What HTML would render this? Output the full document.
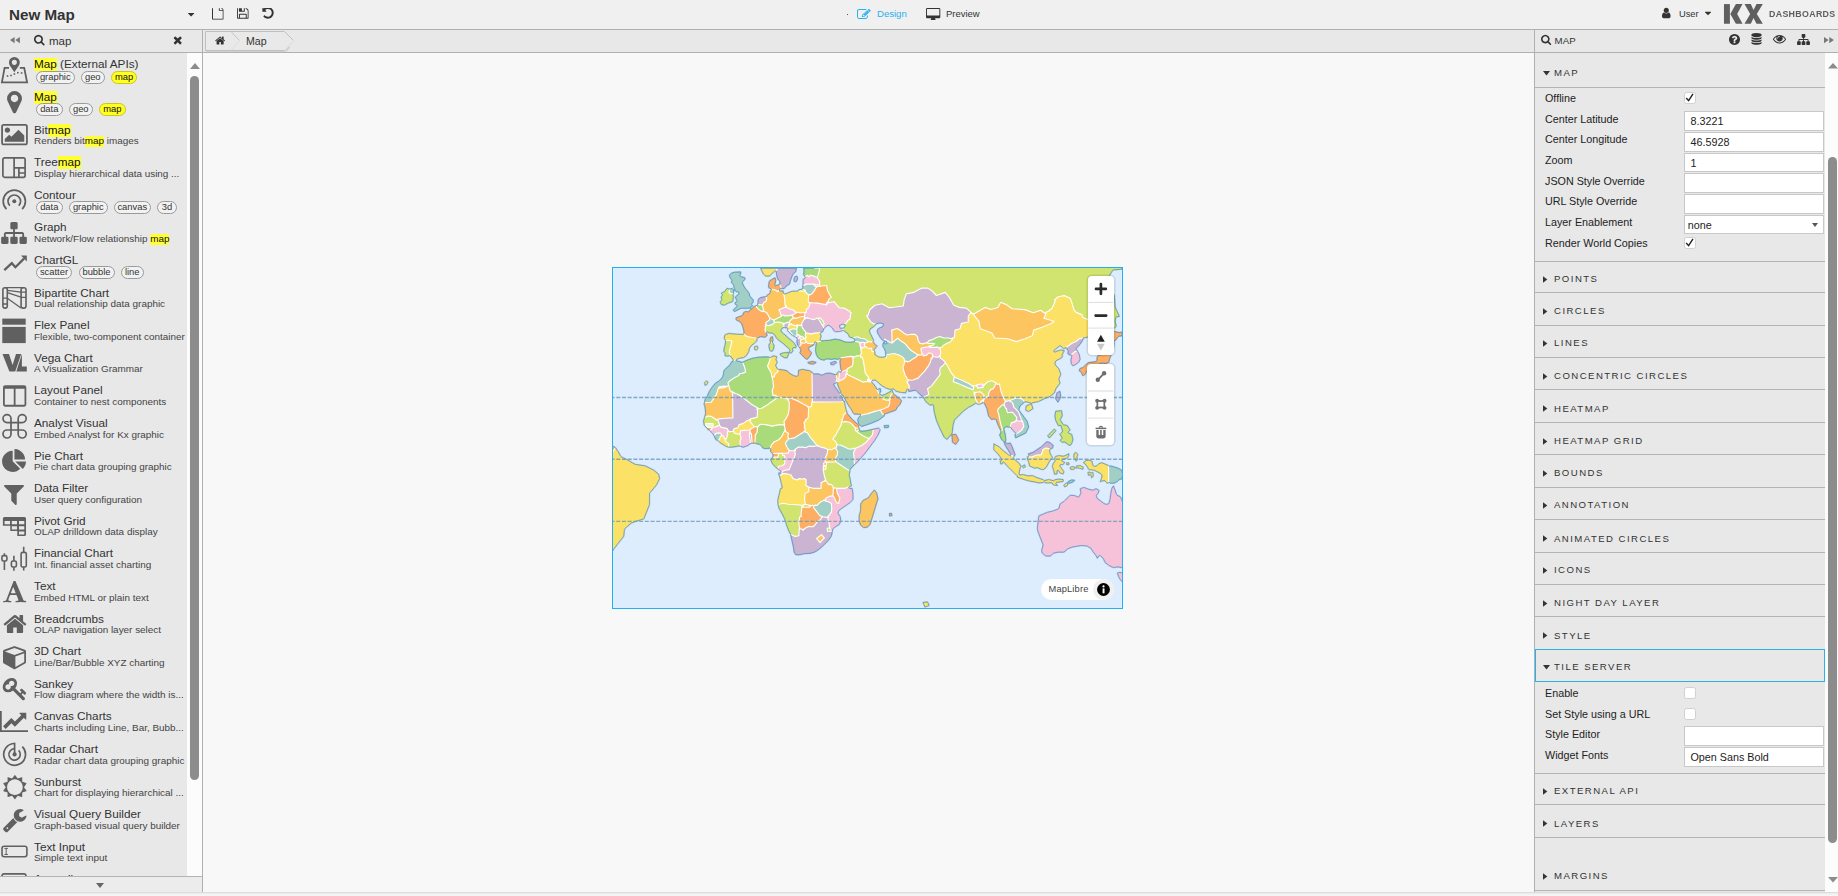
<!DOCTYPE html><html><head><meta charset="utf-8"><title>New Map</title><style>html,body{margin:0;padding:0;background:#f5f5f5;overflow:hidden}
#app{position:relative;width:1838px;height:896px;overflow:hidden;background:#f8f8f8;font-family:"Liberation Sans",Arial,sans-serif;color:#333}
.t{position:absolute;white-space:nowrap}
.ic{position:absolute;display:block;overflow:visible}
#topbar{position:absolute;left:0;top:0;width:1838px;height:29px;background:#f0f0f0;border-bottom:1px solid #b0b0b0}
#bar2{position:absolute;left:0;top:30px;width:1838px;height:22px;background:#e8e8e8;border-bottom:1px solid #b0b0b0}
#side{position:absolute;left:0;top:53px;width:187px;height:823px;background:#e8e8e8;overflow:hidden}
#sidesb{position:absolute;left:187px;top:53px;width:15px;height:823px;background:#fcfcfc}
#sideborder{position:absolute;left:202px;top:30px;width:1px;height:862px;background:#b0b0b0}
#sbthumb{position:absolute;left:190px;top:76px;width:9px;height:704px;border-radius:4.5px;background:#8c8c8c}
#sidefoot{position:absolute;left:0;top:876px;width:202px;height:15px;background:#ececec;border-top:1px solid #b4b4b4}
.row{position:absolute;left:0;width:187px;height:33px}
.ttl{position:absolute;left:34px;font-size:11.75px;line-height:13px;color:#333;white-space:nowrap}
.sub{position:absolute;left:34px;font-size:9.92px;line-height:12px;color:#444;white-space:nowrap;width:153px;overflow:hidden;text-overflow:ellipsis}
.hl{background:linear-gradient(#ffff33,#ffff33) no-repeat 0 1px;color:#111;padding-bottom:1px}
.tag{position:absolute;height:11px;line-height:9.5px;border:1px solid #9a9a9a;border-radius:7px;background:#f2f2f2;font-size:9.4px;color:#333;text-align:center;white-space:nowrap}
.tag.y{background:#ffff22;border-color:#c8c820;color:#111}
#rp{position:absolute;left:1535px;top:53px;width:289.7px;height:839px;background:#e8e8e8;overflow:hidden}
#rpborder{position:absolute;left:1534px;top:30px;width:1px;height:862px;background:#b0b0b0}
#rptrack{position:absolute;left:1824.7px;top:53px;width:13.3px;height:839px;background:#fcfcfc}
#rpthumb{position:absolute;left:1828.1px;top:157px;width:9px;height:686px;border-radius:4.5px;background:#8c8c8c}
#rpfoot{position:absolute;left:0;top:892px;width:1838px;height:4px;background:linear-gradient(#d4d4d4,#ececec 35%,#f4f4f4 70%,#f5f5f5)}
.sh{position:absolute;left:0;width:290px;border-bottom:1px solid #b4b4b4;height:0}
.st{position:absolute;left:19px;font-size:9.6px;letter-spacing:1.45px;line-height:12px;color:#333;white-space:nowrap}
.lb{position:absolute;left:10px;font-size:10.75px;line-height:13px;color:#222;white-space:nowrap}
.inp{position:absolute;left:149px;width:138px;height:17.5px;border:1px solid #c8c8c8;background:#fff;font-size:10.75px;line-height:19px;color:#222;text-indent:5.5px;white-space:nowrap}
.cb{position:absolute;left:148.9px;width:10px;height:10px;border:1px solid #d0d0d0;border-radius:2.5px;background:#fff}
.mctl{position:absolute;background:#fff;border-radius:4px;box-shadow:0 0 0 1.6px rgba(0,0,0,.1)}
</style></head><body><div id="app">
<div id="topbar"></div>
<div class="t" style="left:9px;top:6px;font-size:15.2px;font-weight:bold;color:#333;line-height:18px">New Map</div>
<svg class="ic" style="left:187.8px;top:9.1px;" width="6.23" height="10.9" viewBox="0 -1536 1024 1792"><path fill="#333" transform="scale(1,-1)" d="M1024 832q0 -26 -19 -45l-448 -448q-19 -19 -45 -19t-45 19l-448 448q-19 19 -19 45t19 45t45 19h896q26 0 45 -19t19 -45z"/></svg>
<svg class="ic" style="left:212px;top:6.2px;clip-path:inset(2px 0 0 0)" width="11.70" height="13.65" viewBox="0 -1536 1536 1792"><path fill="#333" transform="scale(1,-1)" d="M1468 1156q28 -28 48 -76t20 -88v-1152q0 -40 -28 -68t-68 -28h-1344q-40 0 -68 28t-28 68v1600q0 40 28 68t68 28h896q40 0 88 -20t76 -48zM1024 1400v-376h376q-10 29 -22 41l-313 313q-12 12 -41 22zM1408 -128v1024h-416q-40 0 -68 28t-28 68v416h-768v-1536h1280z
"/></svg>
<svg class="ic" style="left:237.1px;top:6.2px;clip-path:inset(2px 0 0 0)" width="11.70" height="13.65" viewBox="0 -1536 1536 1792"><path fill="#333" transform="scale(1,-1)" d="M384 0h768v384h-768v-384zM1280 0h128v896q0 14 -10 38.5t-20 34.5l-281 281q-10 10 -34 20t-39 10v-416q0 -40 -28 -68t-68 -28h-576q-40 0 -68 28t-28 68v416h-128v-1280h128v416q0 40 28 68t68 28h832q40 0 68 -28t28 -68v-416zM896 928v320q0 13 -9.5 22.5t-22.5 9.5
h-192q-13 0 -22.5 -9.5t-9.5 -22.5v-320q0 -13 9.5 -22.5t22.5 -9.5h192q13 0 22.5 9.5t9.5 22.5zM1536 896v-928q0 -40 -28 -68t-68 -28h-1344q-40 0 -68 28t-28 68v1344q0 40 28 68t68 28h928q40 0 88 -20t76 -48l280 -280q28 -28 48 -76t20 -88z"/></svg>
<svg class="ic" style="left:262.4px;top:6.2px;clip-path:inset(1.7px 0 0 0)" width="11.70" height="13.65" viewBox="0 -1536 1536 1792"><path fill="#333" transform="scale(1,-1)" d="M1536 640q0 -156 -61 -298t-164 -245t-245 -164t-298 -61q-172 0 -327 72.5t-264 204.5q-7 10 -6.5 22.5t8.5 20.5l137 138q10 9 25 9q16 -2 23 -12q73 -95 179 -147t225 -52q104 0 198.5 40.5t163.5 109.5t109.5 163.5t40.5 198.5t-40.5 198.5t-109.5 163.5
t-163.5 109.5t-198.5 40.5q-98 0 -188 -35.5t-160 -101.5l137 -138q31 -30 14 -69q-17 -40 -59 -40h-448q-26 0 -45 19t-19 45v448q0 42 40 59q39 17 69 -14l130 -129q107 101 244.5 156.5t284.5 55.5q156 0 298 -61t245 -164t164 -245t61 -298z"/></svg>
<div style="position:absolute;left:846.8px;top:14.2px;width:1.2px;height:1.2px;background:#555"></div>
<svg class="ic" style="left:857px;top:9px" width="13.70" height="9.90" viewBox="0.0 -1408.0 1784.0 1408.0" preserveAspectRatio="none"><path fill="#29b0ed" transform="scale(1,-1)" d="M888 352l116 116l-152 152l-116 -116v-56h96v-96h56zM1328 1072q-16 16 -33 -1l-350 -350q-17 -17 -1 -33t33 1l350 350q17 17 1 33zM1408 478v-190q0 -119 -84.5 -203.5t-203.5 -84.5h-832q-119 0 -203.5 84.5t-84.5 203.5v832q0 119 84.5 203.5t203.5 84.5h832
q63 0 117 -25q15 -7 18 -23q3 -17 -9 -29l-49 -49q-14 -14 -32 -8q-23 6 -45 6h-832q-66 0 -113 -47t-47 -113v-832q0 -66 47 -113t113 -47h832q66 0 113 47t47 113v126q0 13 9 22l64 64q15 15 35 7t20 -29zM1312 1216l288 -288l-672 -672h-288v288zM1756 1084l-92 -92
l-288 288l92 92q28 28 68 28t68 -28l152 -152q28 -28 28 -68t-28 -68z"/></svg>
<div class="t" style="left:877px;top:7.2px;font-size:9.55px;color:#29b0ed;line-height:13px">Design</div>
<svg class="ic" style="left:925.7px;top:7.8px" width="14.30" height="12.10" viewBox="0.0 -1536.0 1920.0 1664.0" preserveAspectRatio="none"><path fill="#333" transform="scale(1,-1)" d="M1792 544v832q0 13 -9.5 22.5t-22.5 9.5h-1600q-13 0 -22.5 -9.5t-9.5 -22.5v-832q0 -13 9.5 -22.5t22.5 -9.5h1600q13 0 22.5 9.5t9.5 22.5zM1920 1376v-1088q0 -66 -47 -113t-113 -47h-544q0 -37 16 -77.5t32 -71t16 -43.5q0 -26 -19 -45t-45 -19h-512q-26 0 -45 19
t-19 45q0 14 16 44t32 70t16 78h-544q-66 0 -113 47t-47 113v1088q0 66 47 113t113 47h1600q66 0 113 -47t47 -113z"/></svg>
<div class="t" style="left:946px;top:7.2px;font-size:9.45px;color:#333;line-height:13px">Preview</div>
<svg class="ic" style="left:1662px;top:6.5px;" width="8.57" height="12" viewBox="0 -1536 1280 1792"><path fill="#333" transform="scale(1,-1)" d="M1280 137q0 -109 -62.5 -187t-150.5 -78h-854q-88 0 -150.5 78t-62.5 187q0 85 8.5 160.5t31.5 152t58.5 131t94 89t134.5 34.5q131 -128 313 -128t313 128q76 0 134.5 -34.5t94 -89t58.5 -131t31.5 -152t8.5 -160.5zM1024 1024q0 -159 -112.5 -271.5t-271.5 -112.5
t-271.5 112.5t-112.5 271.5t112.5 271.5t271.5 112.5t271.5 -112.5t112.5 -271.5z"/></svg>
<div class="t" style="left:1679px;top:7.6px;font-size:9.3px;color:#333;line-height:13px">User</div>
<svg class="ic" style="left:1704.8px;top:8.2px;" width="6.00" height="10.5" viewBox="0 -1536 1024 1792"><path fill="#333" transform="scale(1,-1)" d="M1024 832q0 -26 -19 -45l-448 -448q-19 -19 -45 -19t-45 19l-448 448q-19 19 -19 45t19 45t45 19h896q26 0 45 -19t19 -45z"/></svg>
<svg class="ic" style="left:0;top:0" width="1838" height="30" viewBox="0 0 1838 30"><g fill="#5f5f5f"><path d="M1723.96 4.1H1729.9V23.75H1723.96z"/><path d="M1735.9 4.1H1742.5L1737.2 13.9 1742.5 23.75H1735.9L1730.3 13.9z"/><path d="M1744.5 4.1H1750.8L1753.5 9.95 1756.5 4.1H1762.8L1756.8 13.9 1762.8 23.75H1756.5L1753.5 17.9 1750.8 23.75H1744.5L1750.2 13.9z"/></g></svg>
<div class="t" style="left:1768.6px;top:7.7px;font-size:8.4px;font-weight:bold;color:#5f5f5f;letter-spacing:0.3px;line-height:12px;transform:scaleX(1.055);transform-origin:0 0">DASHBOARDS</div>
<div id="bar2"></div>
<svg class="ic" style="left:10px;top:36.8px" width="10" height="6.2" viewBox="0 0 10 6.2"><path d="M4.6 0V6.2L0 3.1zM9.9 0V6.2L5.3 3.1z" fill="#777"/></svg>
<svg class="ic" style="left:33.9px;top:33.6px;" width="10.59" height="11.4" viewBox="0 -1536 1664 1792"><path fill="#333" transform="scale(1,-1)" d="M1152 704q0 185 -131.5 316.5t-316.5 131.5t-316.5 -131.5t-131.5 -316.5t131.5 -316.5t316.5 -131.5t316.5 131.5t131.5 316.5zM1664 -128q0 -52 -38 -90t-90 -38q-54 0 -90 38l-343 342q-179 -124 -399 -124q-143 0 -273.5 55.5t-225 150t-150 225t-55.5 273.5
t55.5 273.5t150 225t225 150t273.5 55.5t273.5 -55.5t225 -150t150 -225t55.5 -273.5q0 -220 -124 -399l343 -343q37 -37 37 -90z"/></svg>
<div class="t" style="left:49px;top:33.5px;font-size:11.5px;color:#333;line-height:14px">map</div>
<svg class="ic" style="left:173px;top:33.5px;" width="9.43" height="12" viewBox="0 -1536 1408 1792"><path fill="#333" transform="scale(1,-1)" d="M1298 214q0 -40 -28 -68l-136 -136q-28 -28 -68 -28t-68 28l-294 294l-294 -294q-28 -28 -68 -28t-68 28l-136 136q-28 28 -28 68t28 68l294 294l-294 294q-28 28 -28 68t28 68l136 136q28 28 68 28t68 -28l294 -294l294 294q28 28 68 28t68 -28l136 -136q28 -28 28 -68
t-28 -68l-294 -294l294 -294q28 -28 28 -68z"/></svg>
<svg class="ic" style="left:204px;top:30px" width="96" height="23" viewBox="0 0 96 23"><path d="M1.5 20.9H80.5L85 16" fill="none" stroke="#bcbcbc" stroke-width="1.6" opacity=".55" transform="translate(0.6,0.9)"/><path d="M1.5 1.5H80.5L89.5 10.5 80.5 20.5H1.5z" fill="#e9e9e9" stroke="none"/><path d="M80.5 20.5H1.5V1.5H80.5L89.5 10.5" fill="none" stroke="#bfbfbf" stroke-width="1"/><path d="M89.5 10.5L80.5 20.5" fill="none" stroke="#dcdcdc" stroke-width="1"/><path d="M27 1.5l8.5 9" fill="none" stroke="#c6c6c6" stroke-width="1"/><path d="M35.5 10.5l-8.5 10" fill="none" stroke="#dedede" stroke-width="1"/></svg>
<svg class="ic" style="left:215px;top:34.5px;" width="10.21" height="11" viewBox="0 -1536 1664 1792"><path fill="#333" transform="scale(1,-1)" d="M1408 544v-480q0 -26 -19 -45t-45 -19h-384v384h-256v-384h-384q-26 0 -45 19t-19 45v480q0 1 0.5 3t0.5 3l575 474l575 -474q1 -2 1 -6zM1631 613l-62 -74q-8 -9 -21 -11h-3q-13 0 -21 7l-692 577l-692 -577q-12 -8 -24 -7q-13 2 -21 11l-62 74q-8 10 -7 23.5t11 21.5
l719 599q32 26 76 26t76 -26l244 -204v195q0 14 9 23t23 9h192q14 0 23 -9t9 -23v-408l219 -182q10 -8 11 -21.5t-7 -23.5z"/></svg>
<div class="t" style="left:246px;top:33.8px;font-size:10.6px;color:#333;line-height:14px">Map</div>
<div id="side"></div><div id="sidesb"></div><div id="sideborder"></div>
<div id="sbthumb"></div>
<svg class="ic" style="left:189.5px;top:62.5px" width="10" height="6" viewBox="0 0 10 6"><path d="M0 6L5 0l5 6z" fill="#8c8c8c"/></svg>
<div id="sidefoot"></div>
<svg class="ic" style="left:96px;top:883px" width="8" height="5" viewBox="0 0 8 5"><path d="M0 0h8L4 5z" fill="#666"/></svg>
<div id="sidelist" style="position:absolute;left:0;top:53px;width:187px;height:823px;overflow:hidden">
<div class="ttl" style="top:4.4px"><span class="hl">Map</span> (External APIs)</div>
<div class="tag" style="left:36px;top:17.7px;width:36.5px">graphic</div>
<div class="tag" style="left:81px;top:17.7px;width:21.5px">geo</div>
<div class="tag y" style="left:111px;top:17.7px;width:24px">map</div>
<div class="ttl" style="top:37.0px"><span class="hl">Map</span></div>
<div class="tag" style="left:36px;top:50.3px;width:24.5px">data</div>
<div class="tag" style="left:69px;top:50.3px;width:21.5px">geo</div>
<div class="tag y" style="left:99px;top:50.3px;width:24.5px">map</div>
<div class="ttl" style="top:69.6px">Bit<span class="hl">map</span></div>
<div class="sub" style="top:82.1px">Renders bit<span class="hl">map</span> images</div>
<div class="ttl" style="top:102.2px">Tree<span class="hl">map</span></div>
<div class="sub" style="top:114.7px">Display hierarchical data using ...</div>
<div class="ttl" style="top:134.8px">Contour</div>
<div class="tag" style="left:36px;top:148.1px;width:24.5px">data</div>
<div class="tag" style="left:69px;top:148.1px;width:36.5px">graphic</div>
<div class="tag" style="left:114px;top:148.1px;width:34.5px">canvas</div>
<div class="tag" style="left:157px;top:148.1px;width:18px">3d</div>
<div class="ttl" style="top:167.4px">Graph</div>
<div class="sub" style="top:179.9px">Network/Flow relationship <span class="hl">map</span></div>
<div class="ttl" style="top:200.0px">ChartGL</div>
<div class="tag" style="left:36px;top:213.3px;width:34px">scatter</div>
<div class="tag" style="left:78.5px;top:213.3px;width:34px">bubble</div>
<div class="tag" style="left:121px;top:213.3px;width:20.5px">line</div>
<div class="ttl" style="top:232.6px">Bipartite Chart</div>
<div class="sub" style="top:245.1px">Dual relationship data graphic</div>
<div class="ttl" style="top:265.2px">Flex Panel</div>
<div class="sub" style="top:277.7px">Flexible, two-component container</div>
<div class="ttl" style="top:297.8px">Vega Chart</div>
<div class="sub" style="top:310.3px">A Visualization Grammar</div>
<div class="ttl" style="top:330.4px">Layout Panel</div>
<div class="sub" style="top:342.9px">Container to nest components</div>
<div class="ttl" style="top:363.0px">Analyst Visual</div>
<div class="sub" style="top:375.5px">Embed Analyst for Kx graphic</div>
<div class="ttl" style="top:395.6px">Pie Chart</div>
<div class="sub" style="top:408.1px">Pie chart data grouping graphic</div>
<div class="ttl" style="top:428.2px">Data Filter</div>
<div class="sub" style="top:440.7px">User query configuration</div>
<div class="ttl" style="top:460.8px">Pivot Grid</div>
<div class="sub" style="top:473.3px">OLAP drilldown data display</div>
<div class="ttl" style="top:493.4px">Financial Chart</div>
<div class="sub" style="top:505.9px">Int. financial asset charting</div>
<div class="ttl" style="top:526.0px">Text</div>
<div class="sub" style="top:538.5px">Embed HTML or plain text</div>
<div class="ttl" style="top:558.6px">Breadcrumbs</div>
<div class="sub" style="top:571.1px">OLAP navigation layer select</div>
<div class="ttl" style="top:591.2px">3D Chart</div>
<div class="sub" style="top:603.7px">Line/Bar/Bubble XYZ charting</div>
<div class="ttl" style="top:623.8px">Sankey</div>
<div class="sub" style="top:636.3px">Flow diagram where the width is...</div>
<div class="ttl" style="top:656.4px">Canvas Charts</div>
<div class="sub" style="top:668.9px">Charts including Line, Bar, Bubb...</div>
<div class="ttl" style="top:689.0px">Radar Chart</div>
<div class="sub" style="top:701.5px">Radar chart data grouping graphic</div>
<div class="ttl" style="top:721.6px">Sunburst</div>
<div class="sub" style="top:734.1px">Chart for displaying hierarchical ...</div>
<div class="ttl" style="top:754.2px">Visual Query Builder</div>
<div class="sub" style="top:766.7px">Graph-based visual query builder</div>
<div class="ttl" style="top:786.8px">Text Input</div>
<div class="sub" style="top:799.3px">Simple text input</div>
<div class="ttl" style="top:819.4px">Accordion</div>
<div class="sub" style="top:831.9px">Collapsible content panels</div>
<svg class="ic" style="left:0;top:-53px" width="187" height="896" viewBox="0 0 187 896"><g fill="none" stroke="#606060" stroke-width="1.7" stroke-linejoin="round"><path d="M9 67.8H4.6L1.9 82.4H27.1L24.2 67.8H19.8" stroke-width="1.8" stroke-linejoin="miter"/></g><path fill="#606060" fill-rule="evenodd" d="M14.35 57a5.4 5.4 0 0 1 5.4 5.4c0 1.3-.4 2.2-1 3.3l-4.4 6.6-4.4-6.6c-.6-1.1-1-2-1-3.3a5.4 5.4 0 0 1 5.4-5.4zm0 2.8a2.55 2.55 0 1 0 0 5.1 2.55 2.55 0 0 0 0-5.1z"/><rect x="6.7" y="75.2" width="1.6" height="1.6" fill="#606060"/><rect x="10.2" y="74.7" width="1.6" height="1.6" fill="#606060"/><rect x="13.6" y="73.2" width="1.6" height="1.6" fill="#606060"/><rect x="17.0" y="71.9" width="1.6" height="1.6" fill="#606060"/><rect x="20.8" y="72.2" width="1.6" height="1.6" fill="#606060"/><g fill="none" stroke="#606060" stroke-width="1.7"><rect x="2.9" y="157.9" width="22.2" height="19.4" rx="1.8"/><path d="M14.1 158V177.3M14.1 167.9H25M18.9 168V177.3M19 173H25"/></g><g fill="none" stroke="#606060" stroke-width="1.7"><path d="M6.45 209.15A11.1 11.1 0 1 1 22.15 209.15"/><path d="M9.85 205.75A6.3 6.3 0 1 1 18.75 205.75"/></g><circle cx="14.3" cy="201.3" r="2" fill="#606060"/><path d="M4.3 270.1L11.8 263.2 15.4 267.2 24 258.6" fill="none" stroke="#606060" stroke-width="2.3"/><path d="M21 255.5H26.8V261.6z" fill="#606060"/><g fill="none" stroke="#606060" stroke-width="1.6"><rect x="2.9" y="287.7" width="4.4" height="20.4" rx="2"/><rect x="21.1" y="287.7" width="4.9" height="20.4" rx="2"/><path d="M5 287.7H24M3 298.2H7.3M3 304H7.3M21 292.2H26M21 297.4H26M7.3 290.3L21 292.2M7.3 292.6L21 297.2M7.3 298.2L21 308" stroke-width="1.3"/></g><rect x="2.3" y="318.6" width="23.4" height="6.1" fill="#606060"/><rect x="2.3" y="326.9" width="23.4" height="16.2" fill="#606060"/><path fill="#606060" d="M2.5 354H9L12.6 365 16 354H21.2L15.2 371.5H9.4z"/><path fill="#606060" d="M21.9 354V366.5H26.8V371.5H16.3z"/><path fill="none" stroke="#606060" stroke-width="1.7" d="M11 422.6H7A4 4 0 1 1 11 418.6V434A4 4 0 1 1 7 430H22.2A4 4 0 1 1 18.2 434V418.6A4 4 0 1 1 22.2 422.6H11"/><path fill="#606060" fill-rule="evenodd" d="M4.4 517H24.5Q26 517 26 518.5V534.5Q26 536 24.5 536H17.3V531H10.3V525.8H2.9V518.5Q2.9 517 4.4 517zM4.6 521V524.3H10V521zM11.8 521V524.3H17V521zM19 521V524.3H24.3V521zM11.8 526.3V529.5H17V526.3zM19 526.3V529.5H24.3V526.3zM19 531.5V534.5H24.3V531.5z"/><g fill="none" stroke="#606060" stroke-width="1.6"><path d="M4.4 553.2V555.6M4.4 561V570M13.9 555.7V561M13.9 567V570.7M23.7 546.8V552.4M23.7 567V570.4"/><rect x="1.9" y="555.6" width="5" height="5.4" rx="1.6"/><rect x="11.4" y="561" width="5" height="6" rx="1.6"/><rect x="21.1" y="552.4" width="5.2" height="14.6" rx="1.6"/></g><g fill="none" stroke="#606060" stroke-width="1.7"><path d="M14.60 743.50A10.9 10.9 0 1 0 22.31 746.69"/><path d="M14.60 748.70A5.7 5.7 0 1 0 18.63 750.37"/><path d="M14.6 754.4V742.7"/></g><circle cx="14.6" cy="754.4" r="2.1" fill="#606060"/><rect x="2" y="846.2" width="24.9" height="10.5" rx="2.2" fill="none" stroke="#606060" stroke-width="1.6"/><path d="M4.4 848.4H7.9M4.4 854.5H7.9M6.15 848.4V854.5" stroke="#606060" stroke-width="1" fill="none"/><rect x="2" y="873.9" width="24" height="12" rx="2.2" fill="none" stroke="#606060" stroke-width="1.6"/></svg>
<svg class="ic" style="left:7px;top:38px" width="15.00" height="22.30" viewBox="0.0 -1408.0 1024.0 1536.0" preserveAspectRatio="xMidYMid meet"><path fill="#606060" transform="scale(1,-1)" d="M768 896q0 106 -75 181t-181 75t-181 -75t-75 -181t75 -181t181 -75t181 75t75 181zM1024 896q0 -109 -33 -179l-364 -774q-16 -33 -47.5 -52t-67.5 -19t-67.5 19t-46.5 52l-365 774q-33 70 -33 179q0 212 150 362t362 150t362 -150t150 -362z"/></svg>
<svg class="ic" style="left:1px;top:71px" width="27.00" height="21.30" viewBox="0.0 -1408.0 1920.0 1536.0" preserveAspectRatio="xMidYMid meet"><path fill="#606060" transform="scale(1,-1)" d="M640 960q0 -80 -56 -136t-136 -56t-136 56t-56 136t56 136t136 56t136 -56t56 -136zM1664 576v-448h-1408v192l320 320l160 -160l512 512zM1760 1280h-1600q-13 0 -22.5 -9.5t-9.5 -22.5v-1216q0 -13 9.5 -22.5t22.5 -9.5h1600q13 0 22.5 9.5t9.5 22.5v1216
q0 13 -9.5 22.5t-22.5 9.5zM1920 1248v-1216q0 -66 -47 -113t-113 -47h-1600q-66 0 -113 47t-47 113v1216q0 66 47 113t113 47h1600q66 0 113 -47t47 -113z"/></svg>
<svg class="ic" style="left:0px;top:169.3px" width="28.00" height="22.00" viewBox="0.0 -1408.0 1792.0 1536.0" preserveAspectRatio="xMidYMid meet"><path fill="#606060" transform="scale(1,-1)" d="M1792 288v-320q0 -40 -28 -68t-68 -28h-320q-40 0 -68 28t-28 68v320q0 40 28 68t68 28h96v192h-512v-192h96q40 0 68 -28t28 -68v-320q0 -40 -28 -68t-68 -28h-320q-40 0 -68 28t-28 68v320q0 40 28 68t68 28h96v192h-512v-192h96q40 0 68 -28t28 -68v-320
q0 -40 -28 -68t-68 -28h-320q-40 0 -68 28t-28 68v320q0 40 28 68t68 28h96v192q0 52 38 90t90 38h512v192h-96q-40 0 -68 28t-28 68v320q0 40 28 68t68 28h320q40 0 68 -28t28 -68v-320q0 -40 -28 -68t-68 -28h-96v-192h512q52 0 90 -38t38 -90v-192h96q40 0 68 -28t28 -68
z"/></svg>
<svg class="ic" style="left:3px;top:332px" width="23.30" height="21.80" viewBox="0.0 -1408.0 1664.0 1536.0" preserveAspectRatio="xMidYMid meet"><path fill="#606060" transform="scale(1,-1)" d="M160 0h608v1152h-640v-1120q0 -13 9.5 -22.5t22.5 -9.5zM1536 32v1120h-640v-1152h608q13 0 22.5 9.5t9.5 22.5zM1664 1248v-1216q0 -66 -47 -113t-113 -47h-1344q-66 0 -113 47t-47 113v1216q0 66 47 113t113 47h1344q66 0 113 -47t47 -113z"/></svg>
<svg class="ic" style="left:2px;top:396px" width="24.00" height="23.00" viewBox="0.0 -1536.0 1728.0 1664.0" preserveAspectRatio="xMidYMid meet"><path fill="#606060" transform="scale(1,-1)" d="M768 646l546 -546q-106 -108 -247.5 -168t-298.5 -60q-209 0 -385.5 103t-279.5 279.5t-103 385.5t103 385.5t279.5 279.5t385.5 103v-762zM955 640h773q0 -157 -60 -298.5t-168 -247.5zM1664 768h-768v768q209 0 385.5 -103t279.5 -279.5t103 -385.5z"/></svg>
<svg class="ic" style="left:4px;top:432.3px" width="20.00" height="20.00" viewBox="-1.0208333333333357 -1280.0 1410.0416666666665 1408.0" preserveAspectRatio="xMidYMid meet"><path fill="#606060" transform="scale(1,-1)" d="M1403 1241q17 -41 -14 -70l-493 -493v-742q0 -42 -39 -59q-13 -5 -25 -5q-27 0 -45 19l-256 256q-19 19 -19 45v486l-493 493q-31 29 -14 70q17 39 59 39h1280q42 0 59 -39z"/></svg>
<svg class="ic" style="left:3px;top:527.5px" width="23.30" height="21.30" viewBox="0.0 -1408.0 1664.0 1536.0" preserveAspectRatio="xMidYMid meet"><path fill="#606060" transform="scale(1,-1)" d="M725 977l-170 -450q33 0 136.5 -2t160.5 -2q19 0 57 2q-87 253 -184 452zM0 -128l2 79q23 7 56 12.5t57 10.5t49.5 14.5t44.5 29t31 50.5l237 616l280 724h75h53q8 -14 11 -21l205 -480q33 -78 106 -257.5t114 -274.5q15 -34 58 -144.5t72 -168.5q20 -45 35 -57
q19 -15 88 -29.5t84 -20.5q6 -38 6 -57q0 -5 -0.5 -13.5t-0.5 -12.5q-63 0 -190 8t-191 8q-76 0 -215 -7t-178 -8q0 43 4 78l131 28q1 0 12.5 2.5t15.5 3.5t14.5 4.5t15 6.5t11 8t9 11t2.5 14q0 16 -31 96.5t-72 177.5t-42 100l-450 2q-26 -58 -76.5 -195.5t-50.5 -162.5
q0 -22 14 -37.5t43.5 -24.5t48.5 -13.5t57 -8.5t41 -4q1 -19 1 -58q0 -9 -2 -27q-58 0 -174.5 10t-174.5 10q-8 0 -26.5 -4t-21.5 -4q-80 -14 -188 -14z"/></svg>
<svg class="ic" style="left:2.5px;top:561.8px" width="24.00" height="18.00" viewBox="25.88888888888889 -1283.0 1612.2222222222222 1283.0" preserveAspectRatio="xMidYMid meet"><path fill="#606060" transform="scale(1,-1)" d="M1408 544v-480q0 -26 -19 -45t-45 -19h-384v384h-256v-384h-384q-26 0 -45 19t-19 45v480q0 1 0.5 3t0.5 3l575 474l575 -474q1 -2 1 -6zM1631 613l-62 -74q-8 -9 -21 -11h-3q-13 0 -21 7l-692 577l-692 -577q-12 -8 -24 -7q-13 2 -21 11l-62 74q-8 10 -7 23.5t11 21.5
l719 599q32 26 76 26t76 -26l244 -204v195q0 14 9 23t23 9h192q14 0 23 -9t9 -23v-408l219 -182q10 -8 11 -21.5t-7 -23.5z"/></svg>
<svg class="ic" style="left:3px;top:593px" width="23.00" height="23.30" viewBox="0.0 -1408.0 1664.0 1664.0" preserveAspectRatio="xMidYMid meet"><path fill="#606060" transform="scale(1,-1)" d="M896 -93l640 349v636l-640 -233v-752zM832 772l698 254l-698 254l-698 -254zM1664 1024v-768q0 -35 -18 -65t-49 -47l-704 -384q-28 -16 -61 -16t-61 16l-704 384q-31 17 -49 47t-18 65v768q0 40 23 73t61 47l704 256q22 8 44 8t44 -8l704 -256q38 -14 61 -47t23 -73z
"/></svg>
<svg class="ic" style="left:1.5px;top:625px" width="25.00" height="22.30" viewBox="0.0 -1408.0 1683.0 1592.0" preserveAspectRatio="xMidYMid meet"><path fill="#606060" transform="scale(1,-1)" d="M832 1024q0 80 -56 136t-136 56t-136 -56t-56 -136q0 -42 19 -83q-41 19 -83 19q-80 0 -136 -56t-56 -136t56 -136t136 -56t136 56t56 136q0 42 -19 83q41 -19 83 -19q80 0 136 56t56 136zM1683 320q0 -17 -49 -66t-66 -49q-9 0 -28.5 16t-36.5 33t-38.5 40t-24.5 26
l-96 -96l220 -220q28 -28 28 -68q0 -42 -39 -81t-81 -39q-40 0 -68 28l-671 671q-176 -131 -365 -131q-163 0 -265.5 102.5t-102.5 265.5q0 160 95 313t248 248t313 95q163 0 265.5 -102.5t102.5 -265.5q0 -189 -131 -365l355 -355l96 96q-3 3 -26 24.5t-40 38.5t-33 36.5
t-16 28.5q0 17 49 66t66 49q13 0 23 -10q6 -6 46 -44.5t82 -79.5t86.5 -86t73 -78t28.5 -41z"/></svg>
<svg class="ic" style="left:0px;top:658.3px" width="28.00" height="21.00" viewBox="0.0 -1408.0 2048.0 1536.0" preserveAspectRatio="xMidYMid meet"><path fill="#606060" transform="scale(1,-1)" d="M2048 0v-128h-2048v1536h128v-1408h1920zM1920 1248v-435q0 -21 -19.5 -29.5t-35.5 7.5l-121 121l-633 -633q-10 -10 -23 -10t-23 10l-233 233l-416 -416l-192 192l585 585q10 10 23 10t23 -10l233 -233l464 464l-121 121q-16 16 -7.5 35.5t29.5 19.5h435q14 0 23 -9
t9 -23z"/></svg>
<svg class="ic" style="left:2.6px;top:722px" width="23.80" height="24.30" viewBox="42.214285714285715 -1535.0 1707.5714285714284 1791.0" preserveAspectRatio="xMidYMid meet"><path fill="#606060" transform="scale(1,-1)" d="M1472 640q0 117 -45.5 223.5t-123 184t-184 123t-223.5 45.5t-223.5 -45.5t-184 -123t-123 -184t-45.5 -223.5t45.5 -223.5t123 -184t184 -123t223.5 -45.5t223.5 45.5t184 123t123 184t45.5 223.5zM1748 363q-4 -15 -20 -20l-292 -96v-306q0 -16 -13 -26q-15 -10 -29 -4
l-292 94l-180 -248q-10 -13 -26 -13t-26 13l-180 248l-292 -94q-14 -6 -29 4q-13 10 -13 26v306l-292 96q-16 5 -20 20q-5 17 4 29l180 248l-180 248q-9 13 -4 29q4 15 20 20l292 96v306q0 16 13 26q15 10 29 4l292 -94l180 248q9 12 26 12t26 -12l180 -248l292 94
q14 6 29 -4q13 -10 13 -26v-306l292 -96q16 -5 20 -20q5 -16 -4 -29l-180 -248l180 -248q9 -12 4 -29z"/></svg>
<svg class="ic" style="left:2.8px;top:756px" width="23.60" height="23.30" viewBox="21.0 -1408.0 1641.0 1643.0" preserveAspectRatio="xMidYMid meet"><path fill="#606060" transform="scale(1,-1)" d="M384 64q0 26 -19 45t-45 19t-45 -19t-19 -45t19 -45t45 -19t45 19t19 45zM1028 484l-682 -682q-37 -37 -90 -37q-52 0 -91 37l-106 108q-38 36 -38 90q0 53 38 91l681 681q39 -98 114.5 -173.5t173.5 -114.5zM1662 919q0 -39 -23 -106q-47 -134 -164.5 -217.5
t-258.5 -83.5q-185 0 -316.5 131.5t-131.5 316.5t131.5 316.5t316.5 131.5q58 0 121.5 -16.5t107.5 -46.5q16 -11 16 -28t-16 -28l-293 -169v-224l193 -107q5 3 79 48.5t135.5 81t70.5 35.5q15 0 23.5 -10t8.5 -25z"/></svg>
</div>
<svg class="ic" style="left:1541px;top:34px;" width="10.21" height="11" viewBox="0 -1536 1664 1792"><path fill="#333" transform="scale(1,-1)" d="M1152 704q0 185 -131.5 316.5t-316.5 131.5t-316.5 -131.5t-131.5 -316.5t131.5 -316.5t316.5 -131.5t316.5 131.5t131.5 316.5zM1664 -128q0 -52 -38 -90t-90 -38q-54 0 -90 38l-343 342q-179 -124 -399 -124q-143 0 -273.5 55.5t-225 150t-150 225t-55.5 273.5
t55.5 273.5t150 225t225 150t273.5 55.5t273.5 -55.5t225 -150t150 -225t55.5 -273.5q0 -220 -124 -399l343 -343q37 -37 37 -90z"/></svg>
<div class="t" style="left:1554.5px;top:35px;font-size:9.7px;color:#333;line-height:12px;letter-spacing:0.1px">MAP</div>
<svg class="ic" style="left:1729px;top:34px" width="11.00" height="11.00" viewBox="0.0 -1408.0 1536.0 1536.0" preserveAspectRatio="xMidYMid meet"><path fill="#333" transform="scale(1,-1)" d="M896 160v192q0 14 -9 23t-23 9h-192q-14 0 -23 -9t-9 -23v-192q0 -14 9 -23t23 -9h192q14 0 23 9t9 23zM1152 832q0 88 -55.5 163t-138.5 116t-170 41q-243 0 -371 -213q-15 -24 8 -42l132 -100q7 -6 19 -6q16 0 25 12q53 68 86 92q34 24 86 24q48 0 85.5 -26t37.5 -59
q0 -38 -20 -61t-68 -45q-63 -28 -115.5 -86.5t-52.5 -125.5v-36q0 -14 9 -23t23 -9h192q14 0 23 9t9 23q0 19 21.5 49.5t54.5 49.5q32 18 49 28.5t46 35t44.5 48t28 60.5t12.5 81zM1536 640q0 -209 -103 -385.5t-279.5 -279.5t-385.5 -103t-385.5 103t-279.5 279.5
t-103 385.5t103 385.5t279.5 279.5t385.5 103t385.5 -103t279.5 -279.5t103 -385.5z"/></svg>
<svg class="ic" style="left:1750.5px;top:32.8px" width="11.00" height="11.80" viewBox="0.0 -1536.0 1536.0 1792.0" preserveAspectRatio="xMidYMid meet"><path fill="#333" transform="scale(1,-1)" d="M768 768q237 0 443 43t325 127v-170q0 -69 -103 -128t-280 -93.5t-385 -34.5t-385 34.5t-280 93.5t-103 128v170q119 -84 325 -127t443 -43zM768 0q237 0 443 43t325 127v-170q0 -69 -103 -128t-280 -93.5t-385 -34.5t-385 34.5t-280 93.5t-103 128v170q119 -84 325 -127
t443 -43zM768 384q237 0 443 43t325 127v-170q0 -69 -103 -128t-280 -93.5t-385 -34.5t-385 34.5t-280 93.5t-103 128v170q119 -84 325 -127t443 -43zM768 1536q208 0 385 -34.5t280 -93.5t103 -128v-128q0 -69 -103 -128t-280 -93.5t-385 -34.5t-385 34.5t-280 93.5
t-103 128v128q0 69 103 128t280 93.5t385 34.5z"/></svg>
<svg class="ic" style="left:1773px;top:35px" width="13.00" height="8.50" viewBox="0.0 -1152.0 1792.0 1152.0" preserveAspectRatio="xMidYMid meet"><path fill="#333" transform="scale(1,-1)" d="M1664 576q-152 236 -381 353q61 -104 61 -225q0 -185 -131.5 -316.5t-316.5 -131.5t-316.5 131.5t-131.5 316.5q0 121 61 225q-229 -117 -381 -353q133 -205 333.5 -326.5t434.5 -121.5t434.5 121.5t333.5 326.5zM944 960q0 20 -14 34t-34 14q-125 0 -214.5 -89.5
t-89.5 -214.5q0 -20 14 -34t34 -14t34 14t14 34q0 86 61 147t147 61q20 0 34 14t14 34zM1792 576q0 -34 -20 -69q-140 -230 -376.5 -368.5t-499.5 -138.5t-499.5 139t-376.5 368q-20 35 -20 69t20 69q140 229 376.5 368t499.5 139t499.5 -139t376.5 -368q20 -35 20 -69z"/></svg>
<svg class="ic" style="left:1796.5px;top:34px" width="13.00" height="11.00" viewBox="0.0 -1408.0 1792.0 1536.0" preserveAspectRatio="xMidYMid meet"><path fill="#333" transform="scale(1,-1)" d="M1792 288v-320q0 -40 -28 -68t-68 -28h-320q-40 0 -68 28t-28 68v320q0 40 28 68t68 28h96v192h-512v-192h96q40 0 68 -28t28 -68v-320q0 -40 -28 -68t-68 -28h-320q-40 0 -68 28t-28 68v320q0 40 28 68t68 28h96v192h-512v-192h96q40 0 68 -28t28 -68v-320
q0 -40 -28 -68t-68 -28h-320q-40 0 -68 28t-28 68v320q0 40 28 68t68 28h96v192q0 52 38 90t90 38h512v192h-96q-40 0 -68 28t-28 68v320q0 40 28 68t68 28h320q40 0 68 -28t28 -68v-320q0 -40 -28 -68t-68 -28h-96v-192h512q52 0 90 -38t38 -90v-192h96q40 0 68 -28t28 -68
z"/></svg>
<svg class="ic" style="left:1823.8px;top:37.1px" width="10" height="6.2" viewBox="0 0 10 6.2"><path d="M0 0V6.2L4.6 3.1zM5.3 0V6.2L9.9 3.1z" fill="#777"/></svg>
<div id="rpborder"></div><div id="rptrack"></div><div id="rpthumb"></div>
<svg class="ic" style="left:1828px;top:63px" width="10" height="6" viewBox="0 0 10 6"><path d="M0 5.5L5 0l5 5.5z" fill="#8c8c8c"/></svg>
<svg class="ic" style="left:1828px;top:877px" width="10" height="6" viewBox="0 0 10 6"><path d="M0 0h10L5 5.5z" fill="#8c8c8c"/></svg>
<div id="rp">
<div class="st" style="top:14.2px">MAP</div>
<svg class="ic" style="left:8px;top:17.9px" width="7" height="4.5" viewBox="0 0 7 4.5"><path d="M0 0h7L3.5 4.5z" fill="#333"/></svg>
<div class="sh" style="top:33.6px"></div>
<div class="lb" style="top:38.7px">Offline</div>
<div class="cb" style="top:38.8px"></div>
<svg class="ic" style="left:150.4px;top:40.0px" width="9" height="9" viewBox="0 0 9 9"><path d="M1.2 5L3.6 7.6 8 0.8" fill="none" stroke="#222" stroke-width="1.4"/></svg>
<div class="lb" style="top:59.8px">Center Latitude</div>
<div class="inp" style="top:58.4px;">8.3221</div>
<div class="lb" style="top:80.0px">Center Longitude</div>
<div class="inp" style="top:79.1px;">46.5928</div>
<div class="lb" style="top:100.6px">Zoom</div>
<div class="inp" style="top:99.8px;">1</div>
<div class="lb" style="top:121.5px">JSON Style Override</div>
<div class="inp" style="top:120.4px;"></div>
<div class="lb" style="top:142.3px">URL Style Override</div>
<div class="inp" style="top:141.1px;"></div>
<div class="lb" style="top:162.8px">Layer Enablement</div>
<div class="inp" style="top:161.7px;text-indent:2.8px;line-height:18.4px">none</div>
<svg class="ic" style="left:277px;top:169.7px" width="6" height="4" viewBox="0 0 6 4"><path d="M0 0h6L3 4z" fill="#555"/></svg>
<div class="lb" style="top:183.8px">Render World Copies</div>
<div class="cb" style="top:183.9px"></div>
<svg class="ic" style="left:150.4px;top:185.1px" width="9" height="9" viewBox="0 0 9 9"><path d="M1.2 5L3.6 7.6 8 0.8" fill="none" stroke="#222" stroke-width="1.4"/></svg>
<div class="sh" style="top:208.1px"></div>
<div class="st" style="top:220.3px">POINTS</div>
<svg class="ic" style="left:7.9px;top:222.6px" width="4.3" height="7" viewBox="0 0 4.5 7"><path d="M0 0v7L4.5 3.5z" fill="#333"/></svg>
<div class="sh" style="top:239.4px"></div>
<div class="st" style="top:252.4px">CIRCLES</div>
<svg class="ic" style="left:7.9px;top:254.7px" width="4.3" height="7" viewBox="0 0 4.5 7"><path d="M0 0v7L4.5 3.5z" fill="#333"/></svg>
<div class="sh" style="top:271.9px"></div>
<div class="st" style="top:284.4px">LINES</div>
<svg class="ic" style="left:7.9px;top:286.7px" width="4.3" height="7" viewBox="0 0 4.5 7"><path d="M0 0v7L4.5 3.5z" fill="#333"/></svg>
<div class="sh" style="top:304.2px"></div>
<div class="st" style="top:317.2px">CONCENTRIC CIRCLES</div>
<svg class="ic" style="left:7.9px;top:319.5px" width="4.3" height="7" viewBox="0 0 4.5 7"><path d="M0 0v7L4.5 3.5z" fill="#333"/></svg>
<div class="sh" style="top:336.3px"></div>
<div class="st" style="top:349.6px">HEATMAP</div>
<svg class="ic" style="left:7.9px;top:351.9px" width="4.3" height="7" viewBox="0 0 4.5 7"><path d="M0 0v7L4.5 3.5z" fill="#333"/></svg>
<div class="sh" style="top:369.3px"></div>
<div class="st" style="top:382.3px">HEATMAP GRID</div>
<svg class="ic" style="left:7.9px;top:384.6px" width="4.3" height="7" viewBox="0 0 4.5 7"><path d="M0 0v7L4.5 3.5z" fill="#333"/></svg>
<div class="sh" style="top:401.4px"></div>
<div class="st" style="top:414.2px">BOUNDS</div>
<svg class="ic" style="left:7.9px;top:416.5px" width="4.3" height="7" viewBox="0 0 4.5 7"><path d="M0 0v7L4.5 3.5z" fill="#333"/></svg>
<div class="sh" style="top:434.3px"></div>
<div class="st" style="top:446.3px">ANNOTATION</div>
<svg class="ic" style="left:7.9px;top:448.6px" width="4.3" height="7" viewBox="0 0 4.5 7"><path d="M0 0v7L4.5 3.5z" fill="#333"/></svg>
<div class="sh" style="top:466.4px"></div>
<div class="st" style="top:479.5px">ANIMATED CIRCLES</div>
<svg class="ic" style="left:7.9px;top:481.8px" width="4.3" height="7" viewBox="0 0 4.5 7"><path d="M0 0v7L4.5 3.5z" fill="#333"/></svg>
<div class="sh" style="top:498.6px"></div>
<div class="st" style="top:511.4px">ICONS</div>
<svg class="ic" style="left:7.9px;top:513.7px" width="4.3" height="7" viewBox="0 0 4.5 7"><path d="M0 0v7L4.5 3.5z" fill="#333"/></svg>
<div class="sh" style="top:531.4px"></div>
<div class="st" style="top:544.3px">NIGHT DAY LAYER</div>
<svg class="ic" style="left:7.9px;top:546.6px" width="4.3" height="7" viewBox="0 0 4.5 7"><path d="M0 0v7L4.5 3.5z" fill="#333"/></svg>
<div class="sh" style="top:563.4px"></div>
<div class="st" style="top:576.5px">STYLE</div>
<svg class="ic" style="left:7.9px;top:578.8px" width="4.3" height="7" viewBox="0 0 4.5 7"><path d="M0 0v7L4.5 3.5z" fill="#333"/></svg>
<div style="position:absolute;left:0;top:595.7px;width:288px;height:31.5px;border:1px solid #29b0ed"></div>
<div class="st" style="top:608.4px">TILE SERVER</div>
<svg class="ic" style="left:8px;top:612.1px" width="7" height="4.5" viewBox="0 0 7 4.5"><path d="M0 0h7L3.5 4.5z" fill="#333"/></svg>
<div class="lb" style="top:633.8px">Enable</div>
<div class="cb" style="top:633.8px"></div>
<div class="lb" style="top:654.7px">Set Style using a URL</div>
<div class="cb" style="top:654.7px"></div>
<div class="lb" style="top:674.7px">Style Editor</div>
<div class="inp" style="top:673.4px;"></div>
<div class="lb" style="top:695.7px">Widget Fonts</div>
<div class="inp" style="top:694.3px;">Open Sans Bold</div>
<div class="sh" style="top:720.3px"></div>
<div class="st" style="top:732.4px">EXTERNAL API</div>
<svg class="ic" style="left:7.9px;top:734.7px" width="4.3" height="7" viewBox="0 0 4.5 7"><path d="M0 0v7L4.5 3.5z" fill="#333"/></svg>
<div class="sh" style="top:751.4px"></div>
<div class="st" style="top:764.7px">LAYERS</div>
<svg class="ic" style="left:7.9px;top:767.0px" width="4.3" height="7" viewBox="0 0 4.5 7"><path d="M0 0v7L4.5 3.5z" fill="#333"/></svg>
<div class="sh" style="top:784.1px"></div>
<div class="st" style="top:817.4px">MARGINS</div>
<svg class="ic" style="left:7.9px;top:819.7px" width="4.3" height="7" viewBox="0 0 4.5 7"><path d="M0 0v7L4.5 3.5z" fill="#333"/></svg>
<div class="sh" style="top:837.2px"></div>
</div>
<div id="rpfoot"></div>
<div id="map" style="position:absolute;left:612px;top:267px;width:509px;height:340px;border:1px solid #1eb1f6;background:#ddedfd;overflow:hidden"><svg class="ic" style="left:-613px;top:-268px" width="1838" height="896" viewBox="0 0 1838 896"><defs><filter id="gl" x="-5%" y="-5%" width="110%" height="110%"><feGaussianBlur stdDeviation="0.7"/></filter></defs><path d="M794.2,281.1 794.4,281.4 795.9,281.7 796.2,281.5 797.5,279.0 797.1,276.3 795.3,276.6 794.9,276.9 794.1,278.9zM751.8,305.0 751.5,304.3 751.8,303.6 753.1,302.2 753.2,300.4 753.1,300.0 751.8,298.4 749.9,296.5 749.6,296.0 749.1,293.3 744.7,287.8 742.1,282.9 742.8,281.4 744.7,279.5 744.9,279.0 744.6,277.7 740.4,276.6 739.7,276.0 739.8,275.1 740.4,274.0 740.7,272.2 740.5,272.0 734.3,272.3 731.3,273.3 729.6,275.0 729.5,275.5 730.3,278.0 731.8,279.6 732.0,280.6 731.5,282.1 731.6,282.6 733.3,284.3 733.6,284.8 734.1,287.1 734.7,288.5 734.8,289.2 734.3,289.8 733.6,289.9 733.0,289.5 732.1,288.4 729.8,289.1 729.1,289.1 727.1,288.4 724.8,291.5 721.6,293.0 721.5,293.4 722.4,294.3 722.6,295.0 722.4,295.6 721.4,296.8 721.3,297.3 721.9,299.5 721.7,300.4 720.4,301.9 720.4,302.4 721.3,304.4 721.7,304.7 724.4,305.0 728.5,302.9 732.3,301.6 732.7,301.2 733.3,297.8 733.1,294.4 733.4,293.4 733.7,290.9 734.2,290.2 735.0,290.1 735.6,290.7 736.1,291.6 737.8,291.7 738.5,291.9 738.8,292.5 739.0,293.4 738.6,294.4 735.4,297.0 736.2,299.1 737.0,300.1 737.3,300.8 736.8,301.6 735.4,302.5 735.1,303.0 735.3,304.0 735.6,304.4 736.8,304.8 737.3,305.3 737.4,306.0 737.1,306.6 733.5,309.7 733.5,310.0 734.2,311.3 734.5,311.4 740.9,308.3 743.6,308.1 747.1,308.3 749.7,307.8 750.4,308.0 750.4,307.8 750.8,307.2 751.9,306.4 752.6,306.2 752.4,305.7zM769.9,343.8 769.4,343.8 769.2,344.1 769.1,347.1 769.9,350.4 770.3,350.8 771.8,351.1 772.3,350.9 773.5,349.1 774.0,345.8 773.0,343.4 772.6,343.0 772.4,342.1 772.9,339.9 772.5,336.8 770.9,337.4 770.6,337.7 770.0,340.1 770.7,342.5 770.6,343.3zM757.3,346.2 757.0,346.1 754.6,346.8 754.6,349.3 756.3,350.0 756.6,349.9 757.8,348.1 757.8,347.6zM813.4,364.0 816.0,362.5 815.9,362.4 812.3,361.4 807.9,362.5 809.4,363.6zM833.4,364.7 836.3,362.7 836.3,362.3 835.2,361.5 834.8,361.5 830.7,362.9 831.1,364.6zM706.4,381.0 704.8,382.6 704.6,383.0 705.0,385.2 706.6,384.7 706.9,384.4 707.8,382.2 707.8,381.9zM704.3,418.4 704.2,419.3 703.5,420.9 704.3,425.1 706.2,427.4 707.2,428.0 708.1,429.5 709.9,430.4 710.3,430.7 711.4,432.2 712.9,433.7 714.2,435.7 714.4,436.4 715.9,439.5 716.2,439.8 718.0,440.4 720.0,442.6 726.3,446.4 728.7,447.1 731.4,447.2 740.0,445.8 742.7,447.1 743.1,447.1 747.2,445.7 751.2,443.1 751.9,443.0 753.1,443.2 755.1,442.9 755.8,443.1 756.6,443.7 759.8,444.4 760.3,444.6 762.1,446.5 762.7,447.7 764.1,448.4 765.8,448.6 769.5,448.1 770.3,448.4 770.7,449.1 770.7,451.2 770.8,451.6 773.0,453.8 773.2,454.3 773.1,456.7 770.9,459.4 770.8,459.9 772.1,462.8 774.3,465.8 777.3,468.5 778.0,468.8 779.3,470.1 780.8,471.0 781.2,471.7 781.0,472.4 780.4,472.9 778.8,473.1 778.6,473.4 779.3,475.1 781.2,482.3 781.4,483.8 781.7,484.6 782.3,487.3 782.1,488.2 780.6,488.7 778.9,495.7 777.8,500.6 778.2,504.9 779.3,508.7 782.1,513.6 784.6,518.5 786.4,524.3 788.5,530.0 790.6,534.2 793.5,547.1 794.2,552.1 795.5,554.4 796.0,554.7 800.1,554.7 804.4,553.6 810.1,553.3 814.2,552.2 817.9,550.0 822.2,546.4 828.6,540.1 831.4,535.8 832.2,531.4 832.8,528.9 833.2,528.4 835.7,526.5 839.4,524.2 840.7,520.6 840.1,516.5 838.2,513.9 838.0,513.1 838.5,511.1 838.9,510.5 842.2,507.9 850.0,502.6 852.8,499.5 852.9,499.1 852.9,494.3 852.2,488.7 852.0,488.5 849.7,488.5 849.1,488.3 848.8,487.7 848.9,487.0 849.4,486.6 851.4,485.7 850.7,483.2 850.0,478.5 849.1,475.6 850.1,469.2 854.4,464.6 857.2,462.1 865.8,452.2 874.3,440.7 877.9,435.1 879.9,430.3 879.9,429.8 878.8,428.4 878.3,428.2 867.2,430.7 862.0,431.3 860.0,430.9 859.4,430.5 859.0,428.0 858.2,426.8 858.6,425.5 859.0,425.0 859.7,424.8 860.4,425.2 861.3,426.3 861.6,426.4 870.0,423.6 878.5,420.1 884.2,415.9 884.2,414.2 884.9,413.7 885.8,413.6 895.5,410.1 895.8,409.8 897.3,407.1 900.1,404.2 901.4,401.0 901.3,400.5 899.3,398.5 893.2,393.8 892.3,390.9 891.8,390.3 891.8,390.6 891.3,391.1 885.6,394.3 882.0,395.5 881.3,395.5 880.8,395.0 879.8,394.0 879.5,393.5 879.7,392.8 880.7,392.0 880.4,388.8 880.1,388.6 878.7,388.8 878.1,389.5 877.3,389.6 876.7,389.1 875.7,387.1 873.6,384.3 871.8,382.4 871.5,381.7 871.8,381.0 872.4,380.3 873.1,380.1 875.3,380.1 876.0,380.3 878.6,382.9 882.1,385.7 885.8,387.9 889.9,389.3 891.3,389.3 891.7,389.7 891.8,389.2 893.0,388.7 893.9,389.0 895.8,390.8 899.9,392.2 905.7,392.8 906.6,389.9 906.8,389.4 907.6,388.9 908.4,389.2 908.7,390.0 908.6,391.2 908.8,391.4 915.2,390.2 916.1,390.4 919.9,394.3 923.4,397.0 925.8,401.5 929.8,404.9 930.2,405.0 932.4,404.6 933.2,404.7 933.6,405.4 934.2,411.5 936.4,420.1 940.0,428.6 944.2,437.1 947.1,439.3 950.4,435.2 951.0,434.9 951.8,435.1 952.1,435.8 952.5,441.9 952.7,442.3 955.7,444.3 958.5,440.3 958.5,439.7 955.7,434.3 952.9,434.8 952.2,434.6 951.7,434.0 952.2,432.7 952.9,425.7 954.3,420.3 954.5,419.8 962.8,411.5 968.7,407.1 972.8,405.1 975.2,403.3 976.3,403.2 978.4,404.2 978.8,404.3 983.6,402.6 984.4,403.1 987.0,408.5 988.6,415.8 991.2,419.1 991.7,419.3 994.9,418.8 995.5,418.9 996.0,419.4 998.5,425.7 1001.1,431.0 1001.1,431.9 1000.8,432.7 1000.6,434.1 999.6,434.6 1001.6,439.5 1003.4,440.9 1004.0,441.6 1005.3,445.4 1009.2,451.7 1011.0,454.3 1011.2,455.0 1010.9,455.6 1010.3,455.9 1009.6,455.7 1001.8,449.6 998.9,446.7 996.1,445.3 993.9,443.9 993.8,449.4 994.0,449.7 997.4,453.2 1000.2,456.7 1001.9,459.2 1002.0,460.2 1001.3,460.8 1000.3,461.0 1000.7,463.8 1002.4,463.5 1002.7,462.3 1003.4,462.0 1004.2,462.3 1006.7,465.3 1016.6,475.2 1017.5,476.0 1017.5,477.1 1017.6,477.2 1024.5,479.6 1029.5,481.0 1034.5,481.8 1038.8,482.8 1043.0,482.5 1043.8,481.7 1044.6,481.8 1045.4,482.8 1048.8,482.8 1051.4,482.6 1052.3,483.0 1052.6,484.0 1054.4,485.2 1057.2,485.3 1057.4,485.3 1057.3,485.1 1056.1,484.1 1055.7,483.4 1056.0,482.7 1056.6,482.3 1063.0,481.4 1063.2,481.2 1063.1,479.6 1058.8,479.2 1054.8,479.8 1054.3,480.5 1053.7,480.8 1048.7,479.6 1044.7,480.6 1043.9,480.4 1043.3,479.8 1036.1,477.4 1032.6,475.7 1027.6,475.9 1023.3,474.6 1020.0,475.0 1019.2,474.7 1018.9,473.8 1019.6,469.6 1020.8,466.1 1018.8,463.0 1016.0,460.9 1013.5,458.4 1013.2,457.6 1013.5,456.9 1014.0,456.5 1014.9,454.8 1014.9,454.4 1012.1,446.7 1010.4,443.3 1010.1,443.1 1007.8,443.7 1007.1,443.6 1005.8,442.9 1005.4,442.4 1005.3,441.8 1005.8,439.9 1005.1,434.3 1003.8,429.1 1004.0,428.2 1005.4,426.8 1006.2,426.6 1009.9,427.1 1010.9,427.5 1012.8,430.1 1016.0,433.3 1016.0,433.9 1015.0,435.0 1015.7,437.8 1025.6,433.0 1028.5,427.3 1028.6,427.0 1027.1,421.3 1018.9,410.4 1018.8,409.5 1020.0,406.0 1020.3,405.6 1024.7,401.8 1025.3,401.7 1030.1,402.6 1030.8,403.2 1030.8,404.0 1030.2,404.6 1026.7,405.6 1026.3,406.0 1025.7,409.8 1025.8,410.1 1028.3,411.4 1028.8,411.3 1032.9,408.6 1031.3,403.8 1031.5,403.1 1032.1,402.8 1038.7,401.4 1044.3,398.6 1049.9,396.5 1054.4,392.7 1055.9,388.5 1059.9,383.1 1059.9,382.6 1058.8,379.7 1058.8,378.9 1060.7,374.5 1060.7,374.1 1058.7,368.7 1056.1,366.0 1054.9,364.0 1054.9,363.1 1055.6,361.1 1056.1,360.6 1061.5,357.8 1062.5,356.1 1062.0,355.5 1062.1,354.7 1064.2,350.7 1060.2,350.0 1059.3,350.7 1058.4,350.7 1055.1,352.0 1054.4,352.1 1053.9,351.6 1053.8,350.9 1054.1,350.3 1059.5,345.9 1060.2,345.6 1060.8,345.9 1063.3,348.4 1063.9,348.5 1065.7,347.8 1066.7,347.9 1067.1,348.7 1067.2,349.5 1068.1,350.3 1068.4,351.3 1067.9,353.6 1069.7,354.9 1071.2,354.8 1071.7,355.2 1071.9,355.8 1071.7,357.1 1071.0,360.1 1071.4,363.5 1072.7,365.6 1073.0,365.7 1075.8,364.3 1078.5,362.3 1080.0,359.4 1079.3,354.9 1077.6,351.6 1076.1,349.3 1076.2,348.6 1077.1,347.3 1079.3,345.0 1081.4,342.2 1082.8,339.5 1083.0,338.2 1083.6,337.9 1087.2,337.2 1090.4,335.6 1101.5,334.2 1108.6,331.3 1114.6,327.8 1115.9,326.5 1116.1,326.0 1115.1,321.5 1115.6,317.7 1115.9,317.2 1116.4,316.9 1119.1,316.4 1119.2,316.1 1115.0,306.8 1114.3,295.4 1110.0,288.2 1109.4,275.9 1109.5,275.3 1112.6,270.3 1113.4,269.9 1122.1,269.1 1122.2,265.8 1121.9,265.5 1078.9,265.5 1077.8,264.9 815.1,264.9 814.8,265.2 814.8,267.2 814.5,267.9 813.8,268.2 803.6,268.3 804.2,271.0 803.6,274.3 805.5,277.5 805.0,278.3 803.4,279.3 803.2,279.8 803.2,284.8 802.8,285.7 802.8,288.3 802.6,288.9 802.0,289.2 798.8,289.8 798.4,290.9 797.6,291.2 792.0,291.3 785.1,294.1 784.3,294.0 783.7,293.4 782.9,290.9 780.4,291.1 779.8,290.9 779.4,290.4 779.4,289.7 779.9,288.8 780.4,288.3 784.0,288.5 784.5,288.2 785.9,286.2 789.1,284.3 789.4,284.0 790.8,279.1 792.8,274.3 795.7,271.4 796.4,268.3 760.7,268.3 763.5,274.1 765.9,276.0 769.4,276.0 769.8,275.8 771.5,273.8 774.4,271.3 774.9,271.0 775.7,270.9 776.3,271.3 776.8,275.6 777.8,279.0 779.7,281.0 780.0,281.7 780.0,283.9 779.7,284.5 779.1,284.9 777.1,285.1 776.4,285.7 775.5,285.9 774.9,285.3 774.8,284.6 775.7,280.3 775.0,277.8 769.8,280.8 769.5,281.1 768.9,284.1 768.6,287.1 768.8,287.6 770.8,288.6 771.4,289.2 771.4,290.0 770.3,290.8 770.3,292.8 769.8,293.7 767.7,294.7 766.7,296.5 760.8,297.6 758.7,299.0 758.5,299.3 758.2,301.3 757.9,304.3 757.7,305.2 756.4,305.6 755.9,306.1 754.8,306.1 754.3,306.7 753.7,307.0 753.4,307.0 753.5,307.2 753.3,307.8 752.7,308.5 751.8,308.9 751.1,309.0 750.8,308.7 750.8,309.2 749.9,310.1 749.5,311.2 749.1,311.7 748.5,311.8 745.6,311.6 743.7,312.6 743.5,312.9 742.9,315.0 742.3,315.7 736.1,317.9 736.3,319.7 736.7,320.1 738.7,320.9 741.2,322.7 741.5,323.1 742.8,326.5 743.9,330.6 744.1,333.4 743.8,334.2 743.0,334.5 735.7,334.2 728.7,333.5 725.2,334.8 724.9,335.2 724.3,337.9 724.3,338.3 725.5,340.4 725.7,341.0 725.3,344.5 724.3,348.1 723.9,351.6 725.1,352.6 725.2,353.2 725.0,355.6 726.5,356.0 729.8,355.6 730.4,356.0 733.3,359.6 733.6,360.3 733.3,360.9 732.0,361.5 729.3,365.8 726.4,368.1 724.0,370.8 723.5,374.7 722.2,377.9 719.3,380.9 715.6,383.2 712.1,387.4 709.3,391.6 707.7,395.6 705.0,399.9 704.6,402.3 704.3,403.1 704.3,404.8 704.8,405.6 705.3,408.5 705.7,413.4zM877.8,329.3 877.2,331.8 878.6,334.6 880.5,337.7 882.7,340.2 883.9,340.1 884.5,340.7 884.4,341.6 886.4,341.0 887.1,343.5 885.0,344.2 884.0,341.9 883.5,342.6 882.8,345.8 882.9,346.2 884.5,348.8 885.6,351.6 885.9,355.7 885.7,356.3 885.7,356.7 882.9,357.4 878.8,357.1 875.0,354.9 874.7,351.5 874.0,350.9 873.8,350.2 875.7,347.5 876.8,346.4 877.0,345.9 875.2,345.0 873.7,342.6 873.3,342.3 872.8,341.5 873.6,340.3 869.3,331.7 870.0,328.9 873.6,326.7 876.1,323.9 880.0,322.8 883.6,323.9 882.9,326.7 880.0,327.8zM845.7,400.0 845.8,400.8 846.3,401.3 849.2,406.4 851.3,409.2 852.8,412.1 854.1,413.8 854.5,414.1 859.7,414.1 860.4,414.3 860.7,415.0 860.5,415.6 857.9,419.1 857.8,419.5 858.6,423.6 858.2,424.1 857.6,424.3 857.0,424.0 851.5,418.6 847.2,413.7 845.6,408.0 844.4,401.9 844.5,401.5 843.3,401.3 842.9,400.7 842.2,398.5 840.8,395.9 840.8,395.1 841.3,394.5 842.0,394.4 842.6,394.9zM820.8,332.5 822.6,331.6 824.0,328.5 826.3,326.2 828.0,325.2 829.1,325.3 832.6,328.0 833.7,330.4 835.5,331.7 839.9,331.4 842.8,330.3 843.8,330.5 848.1,333.8 848.4,334.3 849.2,336.5 849.5,336.8 853.2,338.1 853.7,338.4 854.9,340.1 855.1,340.7 854.9,341.3 854.3,341.7 850.6,342.4 845.2,342.1 840.1,340.0 835.1,339.2 829.9,340.3 824.3,340.7 821.6,341.0 821.0,340.9 820.2,340.0 820.1,339.1 821.1,336.2 820.3,333.8 820.3,333.0zM787.6,330.6 792.1,335.0 796.8,337.7 797.4,339.3 797.4,340.2 797.1,340.6 797.1,342.8 797.8,345.2 799.2,346.5 800.8,349.6 800.9,350.4 800.1,352.6 800.2,353.1 805.6,358.5 807.0,359.3 807.3,359.2 810.0,355.8 811.4,353.0 811.4,352.7 809.3,350.5 808.4,348.8 808.3,348.0 808.8,347.4 813.4,345.1 814.3,343.4 814.5,342.4 815.5,342.0 816.2,342.1 816.7,342.7 816.4,343.8 815.7,348.5 815.7,351.4 816.4,354.4 817.9,357.3 820.8,359.4 824.1,360.0 826.8,358.8 827.5,358.7 830.8,359.3 835.2,358.7 837.7,359.3 839.6,358.5 840.3,358.4 840.9,358.8 841.0,359.5 840.0,361.0 840.7,368.5 841.7,370.4 841.8,371.2 841.2,371.8 840.3,372.2 839.6,372.2 838.9,371.5 838.8,371.6 837.2,373.4 836.7,374.7 835.8,374.9 829.9,373.2 825.8,373.5 822.5,375.1 821.7,375.2 818.0,373.9 813.9,374.1 813.2,373.8 812.8,373.0 809.9,370.9 804.4,369.8 802.7,369.3 798.6,370.4 798.5,374.5 798.3,375.1 797.5,376.1 797.1,376.4 796.5,376.5 793.5,375.6 790.2,373.9 787.0,370.9 782.9,369.9 779.2,369.5 778.3,369.7 777.8,369.3 776.8,368.0 775.7,365.8 775.7,364.8 777.0,362.7 777.1,362.2 776.0,360.0 775.9,359.2 776.8,356.9 776.6,356.6 773.0,356.0 770.2,357.7 769.5,357.6 768.4,357.0 763.6,357.0 757.8,357.4 752.1,358.5 747.1,360.2 742.5,362.4 741.7,362.4 739.9,361.7 736.9,361.1 736.2,360.7 736.1,359.8 736.7,359.2 739.4,358.2 743.5,357.5 746.4,355.4 748.6,351.8 749.5,348.0 751.6,345.2 754.3,343.2 757.0,340.5 757.1,340.0 756.8,339.2 756.8,338.4 757.3,337.9 760.5,336.6 761.0,336.5 764.8,337.2 765.2,337.0 767.1,335.4 766.3,333.1 766.3,332.3 767.0,331.8 767.8,331.9 769.4,332.9 771.8,332.9 772.4,333.1 774.8,334.9 776.5,337.9 778.5,340.0 783.5,343.6 785.7,345.7 788.6,348.0 789.7,349.6 789.8,350.5 789.5,351.7 789.1,352.2 788.6,352.5 783.5,352.8 780.1,354.0 781.5,355.8 784.2,357.5 787.1,357.8 788.2,355.1 788.5,353.5 788.9,352.8 789.6,352.6 791.1,352.9 791.6,352.6 792.8,350.9 792.8,350.5 792.4,349.2 792.6,348.1 793.1,347.6 794.2,347.4 795.7,347.8 796.1,346.6 796.0,346.2 794.3,343.5 790.8,340.0 787.9,337.9 785.1,335.0 782.3,332.9 781.0,331.1 780.9,330.2 781.3,329.0 781.8,328.4 784.3,327.2 785.2,327.6 786.8,327.6 787.6,327.9 787.8,328.7 787.5,330.1zM834.8,383.5 836.5,382.3 837.2,382.5 837.6,383.2 837.8,385.1 839.3,388.6 841.0,392.1 841.0,392.8 840.6,393.4 839.9,393.5 839.3,393.1 833.7,385.1 833.6,384.5 833.8,383.9zM840.0,328.3 839.3,325.4 842.9,324.0 845.1,324.6 845.1,326.7 843.2,328.3zM888.3,427.4 888.5,425.5 884.3,425.7 884.6,427.7zM1041.6,446.7 1033.2,452.3 1028.5,453.9 1029.0,455.4 1029.0,456.1 1028.6,456.6 1027.5,456.8 1027.4,459.4 1028.8,461.9 1029.5,465.7 1029.8,466.1 1031.8,466.8 1034.4,468.1 1037.1,467.6 1037.8,467.6 1040.2,468.9 1042.9,469.6 1043.4,469.5 1046.1,467.3 1050.3,459.7 1052.4,457.4 1051.0,455.2 1049.7,452.6 1049.6,449.7 1049.8,449.1 1050.4,448.7 1052.2,448.3 1052.5,447.9 1053.1,445.6 1052.9,445.1 1050.4,443.1 1047.7,441.8 1047.2,441.8 1044.5,443.8zM1025.3,466.7 1024.6,465.0 1022.4,466.1 1023.5,467.8zM613.7,549.0 623.7,536.1 624.4,529.3 624.8,528.6 631.1,523.1 636.6,521.0 643.5,519.0 643.8,518.7 649.4,504.7 649.5,493.5 649.7,492.9 656.6,484.7 659.5,478.7 658.6,474.4 653.8,470.3 645.1,465.9 635.0,464.4 626.6,459.5 621.2,456.8 620.7,456.4 618.1,451.7 615.3,447.6 612.4,446.0 610.2,445.9 610.0,446.2 610.0,550.1 610.2,550.3 612.7,550.3 613.2,550.1zM863.8,527.5 867.3,527.1 870.1,524.2 877.9,498.7 876.5,492.9 874.3,490.1 871.4,493.5 868.7,497.6 868.3,497.9 863.0,500.6 860.7,504.1 860.7,510.6 859.3,515.6 859.2,520.6 860.6,524.9 863.4,527.4zM891.8,515.4 891.5,513.5 889.5,513.5 889.6,515.8 891.6,515.7zM929.0,605.3 927.5,602.0 923.1,602.5 925.0,607.0 928.8,605.6zM1118.3,336.4 1122.1,335.7 1122.1,332.2 1119.0,332.7 1114.6,331.5 1114.1,331.6 1112.1,333.7 1111.4,336.6 1112.0,339.1 1113.5,340.3 1114.0,341.0 1113.9,341.2 1114.3,340.7 1115.8,339.9 1117.7,336.9zM1108.7,362.0 1109.8,358.1 1112.2,352.2 1113.6,347.2 1114.0,342.4 1113.8,341.3 1113.7,341.8 1113.0,342.1 1112.3,342.1 1112.1,342.3 1111.7,346.5 1110.7,350.6 1109.5,354.0 1108.6,354.6 1101.5,354.9 1098.1,355.6 1097.7,356.0 1097.1,357.8 1097.1,360.5 1096.9,361.2 1096.3,361.5 1092.9,362.1 1088.4,362.6 1085.7,365.0 1083.0,367.6 1080.2,368.5 1079.9,368.8 1079.3,370.7 1081.1,372.0 1081.5,372.5 1082.7,375.5 1083.1,375.6 1085.1,374.2 1086.4,371.5 1088.0,369.4 1090.9,366.4 1094.4,365.0 1098.7,364.3 1101.2,363.2 1101.7,363.1 1105.9,363.5 1108.4,362.3zM1059.8,391.5 1057.3,392.7 1057.0,393.1 1055.7,398.4 1055.8,398.8 1057.9,402.1 1060.7,397.0 1060.1,391.7zM1062.2,442.3 1062.7,442.4 1064.1,441.9 1064.8,441.9 1065.9,443.0 1067.0,443.3 1067.5,443.7 1068.3,444.7 1070.3,445.3 1071.8,443.1 1072.9,439.8 1071.7,434.5 1071.2,434.2 1068.8,433.3 1068.2,432.9 1068.1,432.3 1068.4,431.7 1069.9,430.2 1069.9,429.8 1067.3,425.8 1067.0,425.6 1063.5,424.8 1063.0,424.4 1060.4,420.5 1060.3,419.5 1062.2,415.6 1061.5,410.9 1061.2,410.7 1055.7,411.4 1055.0,415.8 1055.7,420.1 1058.4,425.6 1058.8,425.7 1060.1,425.3 1061.0,425.4 1061.4,426.2 1061.4,427.2 1062.6,430.8 1062.4,431.9 1060.0,434.3 1062.0,437.4 1062.2,438.0 1061.9,438.6 1060.3,440.3zM1047.9,435.7 1049.1,437.7 1049.5,437.7 1055.6,430.9 1055.6,430.5 1054.5,429.4 1054.1,429.4zM1076.2,460.9 1077.3,459.8 1077.4,459.3 1076.9,457.1 1076.9,456.4 1077.7,454.9 1077.6,454.3 1076.0,452.5 1074.3,453.7 1074.1,454.1 1073.8,457.2 1074.0,457.6 1075.1,458.7 1075.9,460.9zM1068.9,464.4 1068.8,462.8 1066.7,462.8 1066.7,464.5 1068.7,464.6zM1063.7,471.5 1060.0,466.4 1059.8,465.5 1060.0,465.0 1060.5,464.5 1061.1,464.4 1062.9,464.6 1063.3,464.4 1064.5,462.4 1061.9,461.0 1061.7,460.4 1061.9,459.7 1062.5,459.4 1066.8,458.1 1068.5,456.1 1068.8,453.9 1064.1,456.2 1063.5,456.3 1058.7,455.6 1055.5,456.6 1055.2,457.0 1054.9,458.8 1055.2,460.6 1055.0,461.3 1053.2,463.7 1052.4,466.5 1053.8,470.4 1054.6,474.2 1057.0,473.8 1056.9,471.2 1057.2,470.4 1058.0,470.1 1058.7,470.6 1060.1,473.0 1060.5,473.2 1063.1,473.8 1063.8,472.0zM1082.8,469.2 1083.2,467.2 1083.0,467.0 1080.1,465.6 1076.7,466.0 1076.7,466.8 1076.4,467.4 1076.2,467.6 1076.9,467.9 1079.7,468.2zM1070.3,467.6 1070.6,469.1 1070.8,469.3 1073.7,469.3 1074.0,469.1 1075.5,467.7 1073.0,466.7 1070.5,467.3zM1107.3,483.1 1107.6,483.1 1108.7,482.5 1109.5,482.4 1110.3,483.2 1114.0,483.1 1116.7,481.8 1119.2,479.5 1121.5,479.0 1121.8,478.6 1122.8,474.7 1121.8,470.5 1121.5,470.1 1117.5,468.1 1113.2,466.7 1110.4,466.0 1109.8,466.3 1109.1,466.3 1108.3,465.5 1101.9,462.8 1101.5,462.8 1098.9,463.8 1096.9,465.8 1094.6,466.5 1094.0,466.4 1093.5,466.1 1092.6,464.7 1091.8,461.3 1091.4,460.9 1088.8,460.2 1086.1,460.6 1083.7,462.3 1083.6,462.6 1086.0,464.7 1087.4,466.8 1088.7,469.3 1089.1,469.6 1091.8,469.7 1094.7,470.4 1100.1,473.1 1102.0,474.9 1102.2,475.9 1101.6,478.2 1100.3,481.7 1101.8,481.0 1104.0,480.5 1105.0,480.7zM1092.5,472.5 1091.0,473.1 1090.1,473.0 1089.5,472.1 1089.4,472.1 1088.3,472.3 1088.1,472.6 1088.5,475.2 1090.4,474.8 1091.0,475.1 1091.3,475.7 1091.7,477.7 1093.1,476.2 1093.2,475.8 1092.9,472.7zM1067.3,483.1 1066.2,483.2 1063.9,485.3 1064.6,486.7 1066.5,486.1 1066.8,485.8 1068.0,483.5 1068.5,483.0 1069.9,483.1 1073.1,481.8 1074.5,480.3 1071.6,480.0 1068.3,481.6 1068.1,482.7zM1045.8,555.9 1050.1,556.0 1050.5,555.9 1053.0,553.4 1053.5,553.1 1058.0,552.1 1063.7,552.1 1064.0,552.0 1067.6,548.8 1071.8,547.1 1081.6,545.4 1087.2,546.0 1091.1,548.4 1093.1,551.8 1095.9,555.2 1097.4,558.1 1098.9,555.8 1099.7,555.3 1100.5,555.6 1103.2,558.3 1105.3,562.5 1108.9,565.4 1113.3,567.5 1117.6,566.8 1122.4,567.5 1123.8,567.4 1123.9,507.4 1122.5,501.7 1120.4,496.9 1120.1,496.6 1117.2,495.4 1116.6,494.8 1113.5,486.0 1112.0,488.2 1110.9,493.2 1110.2,498.9 1109.0,503.3 1108.3,504.0 1106.4,504.4 1105.7,504.4 1103.3,503.1 1097.0,498.3 1096.7,497.8 1096.2,495.9 1096.5,494.9 1098.2,493.0 1098.9,490.5 1098.7,490.2 1096.2,488.9 1095.8,488.9 1093.4,490.1 1092.8,490.2 1089.0,489.5 1084.1,487.5 1083.7,487.5 1080.3,488.9 1080.9,492.8 1080.8,493.4 1079.3,496.5 1078.7,497.0 1078.0,497.0 1074.5,495.6 1070.5,495.3 1070.1,495.4 1063.9,501.6 1060.4,503.7 1060.2,504.0 1059.0,508.3 1058.3,509.0 1053.1,511.0 1047.4,512.4 1039.1,515.9 1038.8,516.3 1037.4,528.2 1038.1,531.8 1043.0,544.4 1043.0,546.1 1041.7,550.1 1042.3,553.0zM1120.2,579.5 1123.8,583.1 1123.9,573.9 1120.1,572.4 1117.6,573.0 1117.5,573.4 1118.5,576.0z" fill="#fff" stroke="#8fbbe4" stroke-width="1.8" stroke-linejoin="round" filter="url(#gl)" opacity="0.6"/><path d="M794.2,281.1 794.4,281.4 795.9,281.7 796.2,281.5 797.5,279.0 797.1,276.3 795.3,276.6 794.9,276.9 794.1,278.9zM751.8,305.0 751.5,304.3 751.8,303.6 753.1,302.2 753.2,300.4 753.1,300.0 751.8,298.4 749.9,296.5 749.6,296.0 749.1,293.3 744.7,287.8 742.1,282.9 742.8,281.4 744.7,279.5 744.9,279.0 744.6,277.7 740.4,276.6 739.7,276.0 739.8,275.1 740.4,274.0 740.7,272.2 740.5,272.0 734.3,272.3 731.3,273.3 729.6,275.0 729.5,275.5 730.3,278.0 731.8,279.6 732.0,280.6 731.5,282.1 731.6,282.6 733.3,284.3 733.6,284.8 734.1,287.1 734.7,288.5 734.8,289.2 734.3,289.8 733.6,289.9 733.0,289.5 732.1,288.4 729.8,289.1 729.1,289.1 727.1,288.4 724.8,291.5 721.6,293.0 721.5,293.4 722.4,294.3 722.6,295.0 722.4,295.6 721.4,296.8 721.3,297.3 721.9,299.5 721.7,300.4 720.4,301.9 720.4,302.4 721.3,304.4 721.7,304.7 724.4,305.0 728.5,302.9 732.3,301.6 732.7,301.2 733.3,297.8 733.1,294.4 733.4,293.4 733.7,290.9 734.2,290.2 735.0,290.1 735.6,290.7 736.1,291.6 737.8,291.7 738.5,291.9 738.8,292.5 739.0,293.4 738.6,294.4 735.4,297.0 736.2,299.1 737.0,300.1 737.3,300.8 736.8,301.6 735.4,302.5 735.1,303.0 735.3,304.0 735.6,304.4 736.8,304.8 737.3,305.3 737.4,306.0 737.1,306.6 733.5,309.7 733.5,310.0 734.2,311.3 734.5,311.4 740.9,308.3 743.6,308.1 747.1,308.3 749.7,307.8 750.4,308.0 750.4,307.8 750.8,307.2 751.9,306.4 752.6,306.2 752.4,305.7zM769.9,343.8 769.4,343.8 769.2,344.1 769.1,347.1 769.9,350.4 770.3,350.8 771.8,351.1 772.3,350.9 773.5,349.1 774.0,345.8 773.0,343.4 772.6,343.0 772.4,342.1 772.9,339.9 772.5,336.8 770.9,337.4 770.6,337.7 770.0,340.1 770.7,342.5 770.6,343.3zM757.3,346.2 757.0,346.1 754.6,346.8 754.6,349.3 756.3,350.0 756.6,349.9 757.8,348.1 757.8,347.6zM813.4,364.0 816.0,362.5 815.9,362.4 812.3,361.4 807.9,362.5 809.4,363.6zM833.4,364.7 836.3,362.7 836.3,362.3 835.2,361.5 834.8,361.5 830.7,362.9 831.1,364.6zM706.4,381.0 704.8,382.6 704.6,383.0 705.0,385.2 706.6,384.7 706.9,384.4 707.8,382.2 707.8,381.9zM704.3,418.4 704.2,419.3 703.5,420.9 704.3,425.1 706.2,427.4 707.2,428.0 708.1,429.5 709.9,430.4 710.3,430.7 711.4,432.2 712.9,433.7 714.2,435.7 714.4,436.4 715.9,439.5 716.2,439.8 718.0,440.4 720.0,442.6 726.3,446.4 728.7,447.1 731.4,447.2 740.0,445.8 742.7,447.1 743.1,447.1 747.2,445.7 751.2,443.1 751.9,443.0 753.1,443.2 755.1,442.9 755.8,443.1 756.6,443.7 759.8,444.4 760.3,444.6 762.1,446.5 762.7,447.7 764.1,448.4 765.8,448.6 769.5,448.1 770.3,448.4 770.7,449.1 770.7,451.2 770.8,451.6 773.0,453.8 773.2,454.3 773.1,456.7 770.9,459.4 770.8,459.9 772.1,462.8 774.3,465.8 777.3,468.5 778.0,468.8 779.3,470.1 780.8,471.0 781.2,471.7 781.0,472.4 780.4,472.9 778.8,473.1 778.6,473.4 779.3,475.1 781.2,482.3 781.4,483.8 781.7,484.6 782.3,487.3 782.1,488.2 780.6,488.7 778.9,495.7 777.8,500.6 778.2,504.9 779.3,508.7 782.1,513.6 784.6,518.5 786.4,524.3 788.5,530.0 790.6,534.2 793.5,547.1 794.2,552.1 795.5,554.4 796.0,554.7 800.1,554.7 804.4,553.6 810.1,553.3 814.2,552.2 817.9,550.0 822.2,546.4 828.6,540.1 831.4,535.8 832.2,531.4 832.8,528.9 833.2,528.4 835.7,526.5 839.4,524.2 840.7,520.6 840.1,516.5 838.2,513.9 838.0,513.1 838.5,511.1 838.9,510.5 842.2,507.9 850.0,502.6 852.8,499.5 852.9,499.1 852.9,494.3 852.2,488.7 852.0,488.5 849.7,488.5 849.1,488.3 848.8,487.7 848.9,487.0 849.4,486.6 851.4,485.7 850.7,483.2 850.0,478.5 849.1,475.6 850.1,469.2 854.4,464.6 857.2,462.1 865.8,452.2 874.3,440.7 877.9,435.1 879.9,430.3 879.9,429.8 878.8,428.4 878.3,428.2 867.2,430.7 862.0,431.3 860.0,430.9 859.4,430.5 859.0,428.0 858.2,426.8 858.6,425.5 859.0,425.0 859.7,424.8 860.4,425.2 861.3,426.3 861.6,426.4 870.0,423.6 878.5,420.1 884.2,415.9 884.2,414.2 884.9,413.7 885.8,413.6 895.5,410.1 895.8,409.8 897.3,407.1 900.1,404.2 901.4,401.0 901.3,400.5 899.3,398.5 893.2,393.8 892.3,390.9 891.8,390.3 891.8,390.6 891.3,391.1 885.6,394.3 882.0,395.5 881.3,395.5 880.8,395.0 879.8,394.0 879.5,393.5 879.7,392.8 880.7,392.0 880.4,388.8 880.1,388.6 878.7,388.8 878.1,389.5 877.3,389.6 876.7,389.1 875.7,387.1 873.6,384.3 871.8,382.4 871.5,381.7 871.8,381.0 872.4,380.3 873.1,380.1 875.3,380.1 876.0,380.3 878.6,382.9 882.1,385.7 885.8,387.9 889.9,389.3 891.3,389.3 891.7,389.7 891.8,389.2 893.0,388.7 893.9,389.0 895.8,390.8 899.9,392.2 905.7,392.8 906.6,389.9 906.8,389.4 907.6,388.9 908.4,389.2 908.7,390.0 908.6,391.2 908.8,391.4 915.2,390.2 916.1,390.4 919.9,394.3 923.4,397.0 925.8,401.5 929.8,404.9 930.2,405.0 932.4,404.6 933.2,404.7 933.6,405.4 934.2,411.5 936.4,420.1 940.0,428.6 944.2,437.1 947.1,439.3 950.4,435.2 951.0,434.9 951.8,435.1 952.1,435.8 952.5,441.9 952.7,442.3 955.7,444.3 958.5,440.3 958.5,439.7 955.7,434.3 952.9,434.8 952.2,434.6 951.7,434.0 952.2,432.7 952.9,425.7 954.3,420.3 954.5,419.8 962.8,411.5 968.7,407.1 972.8,405.1 975.2,403.3 976.3,403.2 978.4,404.2 978.8,404.3 983.6,402.6 984.4,403.1 987.0,408.5 988.6,415.8 991.2,419.1 991.7,419.3 994.9,418.8 995.5,418.9 996.0,419.4 998.5,425.7 1001.1,431.0 1001.1,431.9 1000.8,432.7 1000.6,434.1 999.6,434.6 1001.6,439.5 1003.4,440.9 1004.0,441.6 1005.3,445.4 1009.2,451.7 1011.0,454.3 1011.2,455.0 1010.9,455.6 1010.3,455.9 1009.6,455.7 1001.8,449.6 998.9,446.7 996.1,445.3 993.9,443.9 993.8,449.4 994.0,449.7 997.4,453.2 1000.2,456.7 1001.9,459.2 1002.0,460.2 1001.3,460.8 1000.3,461.0 1000.7,463.8 1002.4,463.5 1002.7,462.3 1003.4,462.0 1004.2,462.3 1006.7,465.3 1016.6,475.2 1017.5,476.0 1017.5,477.1 1017.6,477.2 1024.5,479.6 1029.5,481.0 1034.5,481.8 1038.8,482.8 1043.0,482.5 1043.8,481.7 1044.6,481.8 1045.4,482.8 1048.8,482.8 1051.4,482.6 1052.3,483.0 1052.6,484.0 1054.4,485.2 1057.2,485.3 1057.4,485.3 1057.3,485.1 1056.1,484.1 1055.7,483.4 1056.0,482.7 1056.6,482.3 1063.0,481.4 1063.2,481.2 1063.1,479.6 1058.8,479.2 1054.8,479.8 1054.3,480.5 1053.7,480.8 1048.7,479.6 1044.7,480.6 1043.9,480.4 1043.3,479.8 1036.1,477.4 1032.6,475.7 1027.6,475.9 1023.3,474.6 1020.0,475.0 1019.2,474.7 1018.9,473.8 1019.6,469.6 1020.8,466.1 1018.8,463.0 1016.0,460.9 1013.5,458.4 1013.2,457.6 1013.5,456.9 1014.0,456.5 1014.9,454.8 1014.9,454.4 1012.1,446.7 1010.4,443.3 1010.1,443.1 1007.8,443.7 1007.1,443.6 1005.8,442.9 1005.4,442.4 1005.3,441.8 1005.8,439.9 1005.1,434.3 1003.8,429.1 1004.0,428.2 1005.4,426.8 1006.2,426.6 1009.9,427.1 1010.9,427.5 1012.8,430.1 1016.0,433.3 1016.0,433.9 1015.0,435.0 1015.7,437.8 1025.6,433.0 1028.5,427.3 1028.6,427.0 1027.1,421.3 1018.9,410.4 1018.8,409.5 1020.0,406.0 1020.3,405.6 1024.7,401.8 1025.3,401.7 1030.1,402.6 1030.8,403.2 1030.8,404.0 1030.2,404.6 1026.7,405.6 1026.3,406.0 1025.7,409.8 1025.8,410.1 1028.3,411.4 1028.8,411.3 1032.9,408.6 1031.3,403.8 1031.5,403.1 1032.1,402.8 1038.7,401.4 1044.3,398.6 1049.9,396.5 1054.4,392.7 1055.9,388.5 1059.9,383.1 1059.9,382.6 1058.8,379.7 1058.8,378.9 1060.7,374.5 1060.7,374.1 1058.7,368.7 1056.1,366.0 1054.9,364.0 1054.9,363.1 1055.6,361.1 1056.1,360.6 1061.5,357.8 1062.5,356.1 1062.0,355.5 1062.1,354.7 1064.2,350.7 1060.2,350.0 1059.3,350.7 1058.4,350.7 1055.1,352.0 1054.4,352.1 1053.9,351.6 1053.8,350.9 1054.1,350.3 1059.5,345.9 1060.2,345.6 1060.8,345.9 1063.3,348.4 1063.9,348.5 1065.7,347.8 1066.7,347.9 1067.1,348.7 1067.2,349.5 1068.1,350.3 1068.4,351.3 1067.9,353.6 1069.7,354.9 1071.2,354.8 1071.7,355.2 1071.9,355.8 1071.7,357.1 1071.0,360.1 1071.4,363.5 1072.7,365.6 1073.0,365.7 1075.8,364.3 1078.5,362.3 1080.0,359.4 1079.3,354.9 1077.6,351.6 1076.1,349.3 1076.2,348.6 1077.1,347.3 1079.3,345.0 1081.4,342.2 1082.8,339.5 1083.0,338.2 1083.6,337.9 1087.2,337.2 1090.4,335.6 1101.5,334.2 1108.6,331.3 1114.6,327.8 1115.9,326.5 1116.1,326.0 1115.1,321.5 1115.6,317.7 1115.9,317.2 1116.4,316.9 1119.1,316.4 1119.2,316.1 1115.0,306.8 1114.3,295.4 1110.0,288.2 1109.4,275.9 1109.5,275.3 1112.6,270.3 1113.4,269.9 1122.1,269.1 1122.2,265.8 1121.9,265.5 1078.9,265.5 1077.8,264.9 815.1,264.9 814.8,265.2 814.8,267.2 814.5,267.9 813.8,268.2 803.6,268.3 804.2,271.0 803.6,274.3 805.5,277.5 805.0,278.3 803.4,279.3 803.2,279.8 803.2,284.8 802.8,285.7 802.8,288.3 802.6,288.9 802.0,289.2 798.8,289.8 798.4,290.9 797.6,291.2 792.0,291.3 785.1,294.1 784.3,294.0 783.7,293.4 782.9,290.9 780.4,291.1 779.8,290.9 779.4,290.4 779.4,289.7 779.9,288.8 780.4,288.3 784.0,288.5 784.5,288.2 785.9,286.2 789.1,284.3 789.4,284.0 790.8,279.1 792.8,274.3 795.7,271.4 796.4,268.3 760.7,268.3 763.5,274.1 765.9,276.0 769.4,276.0 769.8,275.8 771.5,273.8 774.4,271.3 774.9,271.0 775.7,270.9 776.3,271.3 776.8,275.6 777.8,279.0 779.7,281.0 780.0,281.7 780.0,283.9 779.7,284.5 779.1,284.9 777.1,285.1 776.4,285.7 775.5,285.9 774.9,285.3 774.8,284.6 775.7,280.3 775.0,277.8 769.8,280.8 769.5,281.1 768.9,284.1 768.6,287.1 768.8,287.6 770.8,288.6 771.4,289.2 771.4,290.0 770.3,290.8 770.3,292.8 769.8,293.7 767.7,294.7 766.7,296.5 760.8,297.6 758.7,299.0 758.5,299.3 758.2,301.3 757.9,304.3 757.7,305.2 756.4,305.6 755.9,306.1 754.8,306.1 754.3,306.7 753.7,307.0 753.4,307.0 753.5,307.2 753.3,307.8 752.7,308.5 751.8,308.9 751.1,309.0 750.8,308.7 750.8,309.2 749.9,310.1 749.5,311.2 749.1,311.7 748.5,311.8 745.6,311.6 743.7,312.6 743.5,312.9 742.9,315.0 742.3,315.7 736.1,317.9 736.3,319.7 736.7,320.1 738.7,320.9 741.2,322.7 741.5,323.1 742.8,326.5 743.9,330.6 744.1,333.4 743.8,334.2 743.0,334.5 735.7,334.2 728.7,333.5 725.2,334.8 724.9,335.2 724.3,337.9 724.3,338.3 725.5,340.4 725.7,341.0 725.3,344.5 724.3,348.1 723.9,351.6 725.1,352.6 725.2,353.2 725.0,355.6 726.5,356.0 729.8,355.6 730.4,356.0 733.3,359.6 733.6,360.3 733.3,360.9 732.0,361.5 729.3,365.8 726.4,368.1 724.0,370.8 723.5,374.7 722.2,377.9 719.3,380.9 715.6,383.2 712.1,387.4 709.3,391.6 707.7,395.6 705.0,399.9 704.6,402.3 704.3,403.1 704.3,404.8 704.8,405.6 705.3,408.5 705.7,413.4zM877.8,329.3 877.2,331.8 878.6,334.6 880.5,337.7 882.7,340.2 883.9,340.1 884.5,340.7 884.4,341.6 886.4,341.0 887.1,343.5 885.0,344.2 884.0,341.9 883.5,342.6 882.8,345.8 882.9,346.2 884.5,348.8 885.6,351.6 885.9,355.7 885.7,356.3 885.7,356.7 882.9,357.4 878.8,357.1 875.0,354.9 874.7,351.5 874.0,350.9 873.8,350.2 875.7,347.5 876.8,346.4 877.0,345.9 875.2,345.0 873.7,342.6 873.3,342.3 872.8,341.5 873.6,340.3 869.3,331.7 870.0,328.9 873.6,326.7 876.1,323.9 880.0,322.8 883.6,323.9 882.9,326.7 880.0,327.8zM845.7,400.0 845.8,400.8 846.3,401.3 849.2,406.4 851.3,409.2 852.8,412.1 854.1,413.8 854.5,414.1 859.7,414.1 860.4,414.3 860.7,415.0 860.5,415.6 857.9,419.1 857.8,419.5 858.6,423.6 858.2,424.1 857.6,424.3 857.0,424.0 851.5,418.6 847.2,413.7 845.6,408.0 844.4,401.9 844.5,401.5 843.3,401.3 842.9,400.7 842.2,398.5 840.8,395.9 840.8,395.1 841.3,394.5 842.0,394.4 842.6,394.9zM820.8,332.5 822.6,331.6 824.0,328.5 826.3,326.2 828.0,325.2 829.1,325.3 832.6,328.0 833.7,330.4 835.5,331.7 839.9,331.4 842.8,330.3 843.8,330.5 848.1,333.8 848.4,334.3 849.2,336.5 849.5,336.8 853.2,338.1 853.7,338.4 854.9,340.1 855.1,340.7 854.9,341.3 854.3,341.7 850.6,342.4 845.2,342.1 840.1,340.0 835.1,339.2 829.9,340.3 824.3,340.7 821.6,341.0 821.0,340.9 820.2,340.0 820.1,339.1 821.1,336.2 820.3,333.8 820.3,333.0zM787.6,330.6 792.1,335.0 796.8,337.7 797.4,339.3 797.4,340.2 797.1,340.6 797.1,342.8 797.8,345.2 799.2,346.5 800.8,349.6 800.9,350.4 800.1,352.6 800.2,353.1 805.6,358.5 807.0,359.3 807.3,359.2 810.0,355.8 811.4,353.0 811.4,352.7 809.3,350.5 808.4,348.8 808.3,348.0 808.8,347.4 813.4,345.1 814.3,343.4 814.5,342.4 815.5,342.0 816.2,342.1 816.7,342.7 816.4,343.8 815.7,348.5 815.7,351.4 816.4,354.4 817.9,357.3 820.8,359.4 824.1,360.0 826.8,358.8 827.5,358.7 830.8,359.3 835.2,358.7 837.7,359.3 839.6,358.5 840.3,358.4 840.9,358.8 841.0,359.5 840.0,361.0 840.7,368.5 841.7,370.4 841.8,371.2 841.2,371.8 840.3,372.2 839.6,372.2 838.9,371.5 838.8,371.6 837.2,373.4 836.7,374.7 835.8,374.9 829.9,373.2 825.8,373.5 822.5,375.1 821.7,375.2 818.0,373.9 813.9,374.1 813.2,373.8 812.8,373.0 809.9,370.9 804.4,369.8 802.7,369.3 798.6,370.4 798.5,374.5 798.3,375.1 797.5,376.1 797.1,376.4 796.5,376.5 793.5,375.6 790.2,373.9 787.0,370.9 782.9,369.9 779.2,369.5 778.3,369.7 777.8,369.3 776.8,368.0 775.7,365.8 775.7,364.8 777.0,362.7 777.1,362.2 776.0,360.0 775.9,359.2 776.8,356.9 776.6,356.6 773.0,356.0 770.2,357.7 769.5,357.6 768.4,357.0 763.6,357.0 757.8,357.4 752.1,358.5 747.1,360.2 742.5,362.4 741.7,362.4 739.9,361.7 736.9,361.1 736.2,360.7 736.1,359.8 736.7,359.2 739.4,358.2 743.5,357.5 746.4,355.4 748.6,351.8 749.5,348.0 751.6,345.2 754.3,343.2 757.0,340.5 757.1,340.0 756.8,339.2 756.8,338.4 757.3,337.9 760.5,336.6 761.0,336.5 764.8,337.2 765.2,337.0 767.1,335.4 766.3,333.1 766.3,332.3 767.0,331.8 767.8,331.9 769.4,332.9 771.8,332.9 772.4,333.1 774.8,334.9 776.5,337.9 778.5,340.0 783.5,343.6 785.7,345.7 788.6,348.0 789.7,349.6 789.8,350.5 789.5,351.7 789.1,352.2 788.6,352.5 783.5,352.8 780.1,354.0 781.5,355.8 784.2,357.5 787.1,357.8 788.2,355.1 788.5,353.5 788.9,352.8 789.6,352.6 791.1,352.9 791.6,352.6 792.8,350.9 792.8,350.5 792.4,349.2 792.6,348.1 793.1,347.6 794.2,347.4 795.7,347.8 796.1,346.6 796.0,346.2 794.3,343.5 790.8,340.0 787.9,337.9 785.1,335.0 782.3,332.9 781.0,331.1 780.9,330.2 781.3,329.0 781.8,328.4 784.3,327.2 785.2,327.6 786.8,327.6 787.6,327.9 787.8,328.7 787.5,330.1zM834.8,383.5 836.5,382.3 837.2,382.5 837.6,383.2 837.8,385.1 839.3,388.6 841.0,392.1 841.0,392.8 840.6,393.4 839.9,393.5 839.3,393.1 833.7,385.1 833.6,384.5 833.8,383.9zM840.0,328.3 839.3,325.4 842.9,324.0 845.1,324.6 845.1,326.7 843.2,328.3zM888.3,427.4 888.5,425.5 884.3,425.7 884.6,427.7zM1041.6,446.7 1033.2,452.3 1028.5,453.9 1029.0,455.4 1029.0,456.1 1028.6,456.6 1027.5,456.8 1027.4,459.4 1028.8,461.9 1029.5,465.7 1029.8,466.1 1031.8,466.8 1034.4,468.1 1037.1,467.6 1037.8,467.6 1040.2,468.9 1042.9,469.6 1043.4,469.5 1046.1,467.3 1050.3,459.7 1052.4,457.4 1051.0,455.2 1049.7,452.6 1049.6,449.7 1049.8,449.1 1050.4,448.7 1052.2,448.3 1052.5,447.9 1053.1,445.6 1052.9,445.1 1050.4,443.1 1047.7,441.8 1047.2,441.8 1044.5,443.8zM1025.3,466.7 1024.6,465.0 1022.4,466.1 1023.5,467.8zM613.7,549.0 623.7,536.1 624.4,529.3 624.8,528.6 631.1,523.1 636.6,521.0 643.5,519.0 643.8,518.7 649.4,504.7 649.5,493.5 649.7,492.9 656.6,484.7 659.5,478.7 658.6,474.4 653.8,470.3 645.1,465.9 635.0,464.4 626.6,459.5 621.2,456.8 620.7,456.4 618.1,451.7 615.3,447.6 612.4,446.0 610.2,445.9 610.0,446.2 610.0,550.1 610.2,550.3 612.7,550.3 613.2,550.1zM863.8,527.5 867.3,527.1 870.1,524.2 877.9,498.7 876.5,492.9 874.3,490.1 871.4,493.5 868.7,497.6 868.3,497.9 863.0,500.6 860.7,504.1 860.7,510.6 859.3,515.6 859.2,520.6 860.6,524.9 863.4,527.4zM891.8,515.4 891.5,513.5 889.5,513.5 889.6,515.8 891.6,515.7zM929.0,605.3 927.5,602.0 923.1,602.5 925.0,607.0 928.8,605.6zM1118.3,336.4 1122.1,335.7 1122.1,332.2 1119.0,332.7 1114.6,331.5 1114.1,331.6 1112.1,333.7 1111.4,336.6 1112.0,339.1 1113.5,340.3 1114.0,341.0 1113.9,341.2 1114.3,340.7 1115.8,339.9 1117.7,336.9zM1108.7,362.0 1109.8,358.1 1112.2,352.2 1113.6,347.2 1114.0,342.4 1113.8,341.3 1113.7,341.8 1113.0,342.1 1112.3,342.1 1112.1,342.3 1111.7,346.5 1110.7,350.6 1109.5,354.0 1108.6,354.6 1101.5,354.9 1098.1,355.6 1097.7,356.0 1097.1,357.8 1097.1,360.5 1096.9,361.2 1096.3,361.5 1092.9,362.1 1088.4,362.6 1085.7,365.0 1083.0,367.6 1080.2,368.5 1079.9,368.8 1079.3,370.7 1081.1,372.0 1081.5,372.5 1082.7,375.5 1083.1,375.6 1085.1,374.2 1086.4,371.5 1088.0,369.4 1090.9,366.4 1094.4,365.0 1098.7,364.3 1101.2,363.2 1101.7,363.1 1105.9,363.5 1108.4,362.3zM1059.8,391.5 1057.3,392.7 1057.0,393.1 1055.7,398.4 1055.8,398.8 1057.9,402.1 1060.7,397.0 1060.1,391.7zM1062.2,442.3 1062.7,442.4 1064.1,441.9 1064.8,441.9 1065.9,443.0 1067.0,443.3 1067.5,443.7 1068.3,444.7 1070.3,445.3 1071.8,443.1 1072.9,439.8 1071.7,434.5 1071.2,434.2 1068.8,433.3 1068.2,432.9 1068.1,432.3 1068.4,431.7 1069.9,430.2 1069.9,429.8 1067.3,425.8 1067.0,425.6 1063.5,424.8 1063.0,424.4 1060.4,420.5 1060.3,419.5 1062.2,415.6 1061.5,410.9 1061.2,410.7 1055.7,411.4 1055.0,415.8 1055.7,420.1 1058.4,425.6 1058.8,425.7 1060.1,425.3 1061.0,425.4 1061.4,426.2 1061.4,427.2 1062.6,430.8 1062.4,431.9 1060.0,434.3 1062.0,437.4 1062.2,438.0 1061.9,438.6 1060.3,440.3zM1047.9,435.7 1049.1,437.7 1049.5,437.7 1055.6,430.9 1055.6,430.5 1054.5,429.4 1054.1,429.4zM1076.2,460.9 1077.3,459.8 1077.4,459.3 1076.9,457.1 1076.9,456.4 1077.7,454.9 1077.6,454.3 1076.0,452.5 1074.3,453.7 1074.1,454.1 1073.8,457.2 1074.0,457.6 1075.1,458.7 1075.9,460.9zM1068.9,464.4 1068.8,462.8 1066.7,462.8 1066.7,464.5 1068.7,464.6zM1063.7,471.5 1060.0,466.4 1059.8,465.5 1060.0,465.0 1060.5,464.5 1061.1,464.4 1062.9,464.6 1063.3,464.4 1064.5,462.4 1061.9,461.0 1061.7,460.4 1061.9,459.7 1062.5,459.4 1066.8,458.1 1068.5,456.1 1068.8,453.9 1064.1,456.2 1063.5,456.3 1058.7,455.6 1055.5,456.6 1055.2,457.0 1054.9,458.8 1055.2,460.6 1055.0,461.3 1053.2,463.7 1052.4,466.5 1053.8,470.4 1054.6,474.2 1057.0,473.8 1056.9,471.2 1057.2,470.4 1058.0,470.1 1058.7,470.6 1060.1,473.0 1060.5,473.2 1063.1,473.8 1063.8,472.0zM1082.8,469.2 1083.2,467.2 1083.0,467.0 1080.1,465.6 1076.7,466.0 1076.7,466.8 1076.4,467.4 1076.2,467.6 1076.9,467.9 1079.7,468.2zM1070.3,467.6 1070.6,469.1 1070.8,469.3 1073.7,469.3 1074.0,469.1 1075.5,467.7 1073.0,466.7 1070.5,467.3zM1107.3,483.1 1107.6,483.1 1108.7,482.5 1109.5,482.4 1110.3,483.2 1114.0,483.1 1116.7,481.8 1119.2,479.5 1121.5,479.0 1121.8,478.6 1122.8,474.7 1121.8,470.5 1121.5,470.1 1117.5,468.1 1113.2,466.7 1110.4,466.0 1109.8,466.3 1109.1,466.3 1108.3,465.5 1101.9,462.8 1101.5,462.8 1098.9,463.8 1096.9,465.8 1094.6,466.5 1094.0,466.4 1093.5,466.1 1092.6,464.7 1091.8,461.3 1091.4,460.9 1088.8,460.2 1086.1,460.6 1083.7,462.3 1083.6,462.6 1086.0,464.7 1087.4,466.8 1088.7,469.3 1089.1,469.6 1091.8,469.7 1094.7,470.4 1100.1,473.1 1102.0,474.9 1102.2,475.9 1101.6,478.2 1100.3,481.7 1101.8,481.0 1104.0,480.5 1105.0,480.7zM1092.5,472.5 1091.0,473.1 1090.1,473.0 1089.5,472.1 1089.4,472.1 1088.3,472.3 1088.1,472.6 1088.5,475.2 1090.4,474.8 1091.0,475.1 1091.3,475.7 1091.7,477.7 1093.1,476.2 1093.2,475.8 1092.9,472.7zM1067.3,483.1 1066.2,483.2 1063.9,485.3 1064.6,486.7 1066.5,486.1 1066.8,485.8 1068.0,483.5 1068.5,483.0 1069.9,483.1 1073.1,481.8 1074.5,480.3 1071.6,480.0 1068.3,481.6 1068.1,482.7zM1045.8,555.9 1050.1,556.0 1050.5,555.9 1053.0,553.4 1053.5,553.1 1058.0,552.1 1063.7,552.1 1064.0,552.0 1067.6,548.8 1071.8,547.1 1081.6,545.4 1087.2,546.0 1091.1,548.4 1093.1,551.8 1095.9,555.2 1097.4,558.1 1098.9,555.8 1099.7,555.3 1100.5,555.6 1103.2,558.3 1105.3,562.5 1108.9,565.4 1113.3,567.5 1117.6,566.8 1122.4,567.5 1123.8,567.4 1123.9,507.4 1122.5,501.7 1120.4,496.9 1120.1,496.6 1117.2,495.4 1116.6,494.8 1113.5,486.0 1112.0,488.2 1110.9,493.2 1110.2,498.9 1109.0,503.3 1108.3,504.0 1106.4,504.4 1105.7,504.4 1103.3,503.1 1097.0,498.3 1096.7,497.8 1096.2,495.9 1096.5,494.9 1098.2,493.0 1098.9,490.5 1098.7,490.2 1096.2,488.9 1095.8,488.9 1093.4,490.1 1092.8,490.2 1089.0,489.5 1084.1,487.5 1083.7,487.5 1080.3,488.9 1080.9,492.8 1080.8,493.4 1079.3,496.5 1078.7,497.0 1078.0,497.0 1074.5,495.6 1070.5,495.3 1070.1,495.4 1063.9,501.6 1060.4,503.7 1060.2,504.0 1059.0,508.3 1058.3,509.0 1053.1,511.0 1047.4,512.4 1039.1,515.9 1038.8,516.3 1037.4,528.2 1038.1,531.8 1043.0,544.4 1043.0,546.1 1041.7,550.1 1042.3,553.0zM1120.2,579.5 1123.8,583.1 1123.9,573.9 1120.1,572.4 1117.6,573.0 1117.5,573.4 1118.5,576.0z" fill="#fff" stroke="none"/><path d="M799.4,289.7 798.7,289.8 798.4,290.9 798.6,290.1 798.9,291.0 805.1,291.3 805.4,290.2 802.9,289.1 801.8,289.3 798.8,289.8zM845.1,324.6 845.1,326.7 843.2,328.3 842.6,328.3 843.1,329.3 842.9,329.6 844.3,330.9 843.8,330.5 848.1,333.8 848.4,334.3 849.2,336.5 849.5,336.8 853.2,338.1 852.1,337.6 853.1,338.0 857.2,336.8 860.8,338.2 864.4,338.6 867.2,340.6 867.1,340.7 868.2,341.1 868.2,341.5 867.8,342.1 868.0,342.0 869.1,341.4 871.0,342.0 871.4,341.8 871.7,341.8 873.1,340.7 873.3,340.8 872.8,341.5 873.6,340.3 869.3,331.7 870.0,328.9 873.6,326.7 875.8,324.1 872.7,323.4 872.0,322.5 871.1,322.3 867.4,317.0 867.5,316.8 866.4,315.7 867.8,315.7 869.9,309.7 875.0,305.3 882.0,303.8 889.2,307.8 903.4,306.0 904.1,299.8 906.3,293.9 913.6,292.4 921.9,288.1 928.1,288.1 932.5,291.3 936.4,295.5 945.2,292.4 949.4,297.5 953.6,305.0 959.2,307.4 966.4,308.1 971.0,312.4 970.9,312.5 973.7,314.1 985.1,307.4 990.9,309.5 997.8,307.5 1000.7,302.3 1006.4,304.6 1012.1,308.8 1024.9,309.6 1033.4,312.7 1040.6,310.2 1045.2,313.5 1045.5,312.5 1048.5,311.3 1052.0,308.2 1055.3,301.1 1054.6,299.8 1057.1,297.8 1057.5,297.0 1058.2,296.9 1058.4,296.7 1064.3,295.6 1070.2,298.2 1071.6,301.8 1074.1,310.1 1076.2,312.4 1081.7,314.6 1082.8,317.4 1084.4,318.3 1092.9,321.1 1101.6,318.2 1104.6,324.3 1098.8,331.7 1091.0,335.5 1095.0,335.0 1090.4,335.6 1101.5,334.2 1108.6,331.3 1114.6,327.8 1115.9,326.5 1116.1,326.0 1115.1,321.5 1115.6,317.7 1115.9,317.2 1116.4,316.9 1119.1,316.4 1119.2,316.1 1115.0,306.8 1114.3,295.4 1110.0,288.2 1109.4,275.9 1109.5,275.3 1112.6,270.3 1113.4,269.9 1122.1,269.1 1122.2,265.8 1121.9,265.5 1078.9,265.5 1077.8,264.9 815.1,264.9 814.8,265.2 814.8,267.2 814.9,266.7 814.9,268.0 819.6,268.0 819.2,271.3 817.3,277.4 814.9,276.7 814.9,276.8 817.3,277.5 819.6,281.2 819.6,285.2 814.9,284.2 814.9,285.5 814.9,285.7 815.2,286.3 816.7,286.3 817.0,286.7 817.4,286.3 818.4,286.3 818.3,286.3 819.5,286.3 819.5,286.3 820.6,286.3 822.1,285.7 826.7,285.7 827.4,290.2 830.4,296.0 831.5,297.1 829.4,298.6 828.0,301.5 826.3,304.9 826.6,304.7 827.7,302.9 834.5,301.7 834.9,302.8 839.2,307.7 844.9,308.4 846.4,309.3 847.9,310.6 849.0,310.8 849.9,311.3 850.0,312.3 851.1,312.6 850.3,316.0 849.9,319.4 847.4,320.5 846.7,322.6 844.3,324.2 842.9,323.5 840.3,325.0 839.3,325.4 842.9,324.0z" fill="#d1e46f" stroke="#d1e46f" stroke-width="0.6" stroke-linejoin="round"/><path d="M939.9,348.9 940.1,349.3 940.6,351.4 940.6,354.1 939.3,356.4 940.3,356.6 940.4,356.6 940.3,358.0 943.1,360.1 944.0,361.0 944.2,361.1 944.4,361.0 944.5,361.2 944.9,361.3 944.7,361.5 945.1,362.1 945.4,362.4 945.3,362.5 947.4,365.6 950.3,371.3 954.6,377.1 954.6,377.3 961.4,380.0 968.6,383.6 972.3,385.7 975.7,385.5 976.8,385.0 976.8,384.8 977.8,384.6 978.6,384.3 979.3,384.4 982.4,384.0 982.6,384.8 983.3,384.9 984.0,385.0 984.3,385.0 987.1,382.1 989.4,381.4 991.4,380.4 996.1,382.7 996.0,383.1 996.7,383.6 996.8,383.8 997.1,384.0 997.8,384.5 999.5,383.9 1001.0,391.3 1003.4,397.9 1005.5,401.1 1005.7,401.8 1007.1,401.1 1009.9,400.4 1011.4,400.0 1015.7,397.9 1021.4,398.6 1024.3,401.4 1025.7,401.8 1030.1,402.6 1030.8,403.2 1030.8,404.0 1030.2,404.6 1026.7,405.6 1026.3,406.0 1025.7,409.8 1025.8,410.1 1028.3,411.4 1028.8,411.3 1032.9,408.6 1031.3,403.8 1031.5,403.1 1032.1,402.8 1038.7,401.4 1044.3,398.6 1049.9,396.5 1054.4,392.7 1055.9,388.5 1059.9,383.1 1059.9,382.6 1058.8,379.7 1058.8,378.9 1060.7,374.5 1060.7,374.1 1058.7,368.7 1056.1,366.0 1054.9,364.0 1054.9,363.1 1055.6,361.1 1056.1,360.6 1061.5,357.8 1062.5,356.1 1062.0,355.5 1062.1,354.7 1064.2,350.7 1060.2,350.0 1059.3,350.7 1058.4,350.7 1055.1,352.0 1054.4,352.1 1053.9,351.6 1053.8,350.9 1054.1,350.3 1059.5,345.9 1060.2,345.6 1060.8,345.9 1063.3,348.4 1063.9,348.5 1065.7,347.8 1065.5,347.8 1066.8,347.3 1066.8,347.0 1072.0,343.3 1076.3,341.2 1079.9,338.2 1081.4,338.6 1082.9,338.0 1083.5,338.0 1083.6,337.9 1087.2,337.2 1090.4,335.6 1095.0,335.0 1091.0,335.5 1098.8,331.7 1104.6,324.3 1101.6,318.2 1092.9,321.1 1084.4,318.3 1082.8,317.4 1081.7,314.6 1076.2,312.4 1074.1,310.1 1071.6,301.8 1070.2,298.2 1064.3,295.6 1058.4,296.7 1058.2,296.9 1057.5,297.0 1057.1,297.8 1054.6,299.8 1055.3,301.1 1052.0,308.2 1048.5,311.3 1045.5,312.5 1045.2,313.5 1046.0,314.0 1043.9,318.2 1054.1,321.2 1050.7,323.7 1042.1,327.3 1033.7,330.1 1032.3,335.8 1025.0,338.7 1016.3,341.6 1007.7,338.7 994.7,338.0 991.8,333.0 980.3,328.7 978.9,321.4 973.3,314.3 973.4,314.3 972.5,313.6 973.4,314.2 973.7,314.1 970.9,312.5 970.8,312.6 971.9,313.3 971.8,313.4 970.7,312.8 968.3,316.0 968.3,322.0 961.6,323.4 961.3,323.8 960.1,328.7 955.1,330.1 954.4,337.3 953.9,337.3 952.0,339.9 951.4,340.2 950.2,342.0 947.3,343.1 944.4,344.8 943.3,345.2 942.5,346.8 940.5,347.5z" fill="#fbe165" stroke="#fbe165" stroke-width="0.6" stroke-linejoin="round"/><path d="M954.6,377.1 950.3,371.3 947.4,365.6 945.3,362.5 943.1,365.5 940.3,367.6 939.7,370.9 940.3,374.4 931.6,385.9 927.5,388.7 928.9,394.4 923.7,397.4 924.3,398.6 923.4,397.0 925.8,401.5 929.8,404.9 930.2,405.0 932.4,404.6 933.2,404.7 933.6,405.4 934.2,411.5 936.4,420.1 940.0,428.6 944.2,437.1 947.1,439.3 950.4,435.2 951.0,434.9 950.5,435.1 951.6,433.6 951.9,433.4 952.2,432.7 952.9,425.7 954.3,420.3 954.5,419.8 962.8,411.5 968.7,407.1 972.8,405.1 975.2,403.3 976.2,403.2 976.2,403.1 978.5,404.3 978.6,404.3 982.1,403.1 978.8,404.3 982.9,402.9 983.7,400.2 984.3,398.6 985.1,398.0 988.6,395.7 988.6,393.2 990.0,390.6 990.9,389.4 992.9,388.9 994.8,386.4 995.4,384.1 996.7,383.6 996.0,383.1 996.1,382.7 991.4,380.4 989.4,381.4 987.1,382.1 984.3,385.0 984.0,385.0 984.1,385.4 982.8,385.5 983.2,387.4 977.6,388.2 977.0,385.8 975.7,385.8 975.6,385.5 975.7,385.5 972.3,385.7 972.8,386.0 972.1,386.0 972.2,386.2 973.9,387.0 973.0,389.7 967.0,387.4 959.9,384.3 953.2,381.6 954.3,377.1 954.6,377.3zM983.1,394.1 983.3,395.0 984.1,395.0 983.6,397.0 983.9,398.8 983.1,399.1 982.9,400.0 980.7,401.5 981.1,403.2 977.7,403.2 975.4,398.7 975.2,396.6 974.3,394.3 974.0,391.7 974.9,394.8 974.7,392.6 980.1,391.8z" fill="#d1e46f" stroke="#d1e46f" stroke-width="0.6" stroke-linejoin="round"/><path d="M768.4,357.0 763.6,357.0 757.8,357.4 752.1,358.5 747.1,360.2 742.5,362.4 743.7,361.9 742.5,362.4 742.7,362.6 744.6,367.3 745.7,371.9 742.9,373.1 739.5,373.8 738.8,375.5 734.4,377.7 730.2,380.5 727.9,382.8 728.7,385.3 728.8,385.2 728.9,385.6 728.9,385.8 728.9,385.9 730.1,390.8 732.8,392.1 733.8,392.5 734.5,392.9 735.4,393.7 737.3,394.0 738.7,395.0 739.2,395.0 744.3,398.6 751.4,404.3 758.6,408.6 761.7,408.2 768.0,404.6 769.8,402.9 778.2,397.3 775.3,395.3 773.0,395.3 772.2,390.3 773.6,386.7 772.9,381.0 772.2,377.1 772.2,377.1 772.2,377.0 771.9,377.0 771.1,372.5 769.0,369.0 767.5,366.0 769.4,361.6 770.2,358.1 769.1,357.4z" fill="#a9db7b" stroke="#a9db7b" stroke-width="0.6" stroke-linejoin="round"/><path d="M772.9,381.0 773.6,386.7 772.2,390.3 773.0,395.3 775.3,395.3 778.2,397.3 778.5,397.1 787.3,399.0 787.4,399.2 788.6,398.6 790.0,397.9 790.5,398.1 790.7,398.0 798.7,401.4 808.6,407.1 809.8,406.8 809.8,406.9 811.0,406.6 811.5,406.2 811.9,401.8 812.7,401.8 812.7,401.2 812.4,401.2 812.0,374.0 812.5,374.0 812.8,373.2 813.2,373.8 812.8,373.0 809.9,370.9 804.4,369.8 802.7,369.3 798.6,370.4 798.5,374.5 798.3,375.1 797.5,376.1 797.1,376.4 796.5,376.5 793.5,375.6 790.2,373.9 787.0,370.9 782.9,369.9 779.2,369.5 779.7,369.6 779.0,369.6 778.9,369.6 778.5,370.1 777.0,372.6 775.0,374.0 774.2,377.0 772.2,377.1zM812.8,373.1 812.2,372.7 812.8,373.0z" fill="#fdc55f" stroke="#fdc55f" stroke-width="0.6" stroke-linejoin="round"/><path d="M610.0,550.1 610.2,550.3 612.7,550.3 613.2,550.1 613.7,549.0 623.7,536.1 624.4,529.3 624.8,528.6 631.1,523.1 636.6,521.0 643.5,519.0 643.8,518.7 649.4,504.7 649.5,493.5 649.7,492.9 656.6,484.7 659.5,478.7 658.6,474.4 653.8,470.3 645.1,465.9 635.0,464.4 626.6,459.5 621.2,456.8 620.7,456.4 618.1,451.7 615.3,447.6 616.1,448.9 615.3,447.7 613.3,451.3 610.0,451.3 610.0,452.6z" fill="#fbe165" stroke="#fbe165" stroke-width="0.6" stroke-linejoin="round"/><path d="M1100.5,555.6 1103.2,558.3 1105.3,562.5 1108.9,565.4 1113.3,567.5 1117.6,566.8 1122.4,567.5 1123.8,567.4 1123.9,507.4 1122.5,501.7 1120.4,496.9 1120.1,496.6 1117.2,495.4 1116.6,494.8 1113.5,486.0 1112.0,488.2 1110.9,493.2 1110.2,498.9 1109.0,503.3 1108.3,504.0 1106.4,504.4 1105.7,504.4 1103.3,503.1 1097.0,498.3 1096.7,497.8 1096.2,495.9 1096.5,494.9 1098.2,493.0 1098.9,490.5 1098.7,490.2 1096.2,488.9 1095.8,488.9 1093.4,490.1 1092.8,490.2 1089.0,489.5 1084.1,487.5 1083.7,487.5 1080.3,488.9 1080.9,492.8 1080.8,493.4 1079.3,496.5 1078.7,497.0 1078.0,497.0 1074.5,495.6 1070.5,495.3 1070.1,495.4 1063.9,501.6 1060.4,503.7 1060.2,504.0 1059.0,508.3 1058.3,509.0 1053.1,511.0 1047.4,512.4 1039.1,515.9 1038.8,516.3 1037.4,528.2 1038.1,531.8 1043.0,544.4 1043.0,546.1 1041.7,550.1 1042.3,553.0 1045.8,555.9 1050.1,556.0 1050.5,555.9 1053.0,553.4 1053.5,553.1 1058.0,552.1 1063.7,552.1 1064.0,552.0 1067.6,548.8 1071.8,547.1 1081.6,545.4 1087.2,546.0 1091.1,548.4 1093.1,551.8 1095.9,555.2 1097.4,558.1 1098.9,555.8 1099.7,555.3zM1120.1,572.4 1117.6,573.0 1117.5,573.4 1118.5,576.0 1120.2,579.5 1123.8,583.1 1123.9,573.9z" fill="#f5c2da" stroke="#f5c2da" stroke-width="0.6" stroke-linejoin="round"/><path d="M760.7,268.3 763.5,274.1 765.9,276.0 769.4,276.0 769.8,275.8 771.5,273.8 774.4,271.3 774.9,271.0 775.2,270.9 775.3,270.7 776.8,269.9 777.5,268.3 778.6,268.3z" fill="#fbe165" stroke="#fbe165" stroke-width="0.6" stroke-linejoin="round"/><path d="M784.5,288.2 785.9,286.2 789.1,284.3 789.4,284.0 790.8,279.1 792.8,274.3 795.7,271.4 796.4,268.3 777.5,268.3 776.8,269.9 775.3,270.7 775.2,270.9 775.7,270.9 776.3,271.3 776.8,275.6 777.8,279.0 779.7,281.0 780.0,281.7 780.0,283.6 780.0,283.4 780.0,284.9 781.4,288.4 784.0,288.5zM796.2,281.5 797.5,279.0 797.1,276.3 795.3,276.6 794.9,276.9 794.1,278.9 794.2,281.1 794.4,281.4 795.9,281.7z" fill="#cab4d2" stroke="#cab4d2" stroke-width="0.6" stroke-linejoin="round"/><path d="M813.8,268.2 803.6,268.3 804.2,271.0 803.6,274.3 804.9,276.5 805.0,276.6 806.9,275.5 807.4,275.4 808.4,276.0 808.7,276.3 808.7,276.3 809.4,276.5 810.4,275.2 814.9,276.4 814.9,276.7 817.3,277.4 819.2,271.3 819.6,268.0 814.9,268.0 814.9,266.7 814.8,267.2 814.4,268.0z" fill="#a9db7b" stroke="#a9db7b" stroke-width="0.6" stroke-linejoin="round"/><path d="M733.6,289.9 733.0,289.5 732.1,288.4 730.9,288.8 729.8,289.2 729.0,292.2 730.8,293.7 731.8,293.8 733.3,293.6 733.4,292.8 733.7,290.9 734.2,290.2 735.0,290.1 735.6,290.7 736.1,291.6 737.8,291.7 738.5,291.9 738.8,292.5 739.0,293.4 738.6,294.4 735.4,297.0 736.2,299.1 737.0,300.1 737.3,300.8 736.8,301.6 735.4,302.5 735.1,303.0 735.3,304.0 735.6,304.4 736.8,304.8 737.3,305.3 737.4,306.0 737.1,306.6 733.5,309.7 733.5,310.0 734.2,311.3 734.5,311.4 740.9,308.3 743.6,308.1 747.1,308.3 749.7,307.8 750.3,308.0 750.4,307.9 750.4,307.8 750.8,307.2 751.9,306.4 752.6,306.2 752.4,305.7 751.8,305.0 751.5,304.3 751.8,303.6 753.1,302.2 753.2,300.4 753.1,300.0 751.8,298.4 749.9,296.5 749.6,296.0 749.1,293.3 744.7,287.8 742.1,282.9 742.8,281.4 744.7,279.5 744.9,279.0 744.6,277.7 740.4,276.6 739.7,276.0 739.8,275.1 740.4,274.0 740.7,272.2 740.5,272.0 734.3,272.3 731.3,273.3 729.6,275.0 729.5,275.5 730.3,278.0 731.8,279.6 732.0,280.6 731.5,282.1 731.6,282.6 733.3,284.3 733.6,284.8 734.1,287.1 734.7,288.5 734.8,289.2 734.3,289.8z" fill="#a1cfc5" stroke="#a1cfc5" stroke-width="0.6" stroke-linejoin="round"/><path d="M729.8,289.1 729.1,289.1 727.1,288.4 724.8,291.5 721.6,293.0 721.5,293.4 722.4,294.3 722.6,295.0 722.4,295.6 721.4,296.8 721.3,297.3 721.9,299.5 721.7,300.4 720.4,301.9 720.4,302.4 721.3,304.4 721.7,304.7 724.4,305.0 728.5,302.9 732.3,301.6 732.7,301.2 733.3,297.8 733.1,294.4 733.4,293.4 733.4,292.8 733.3,293.6 731.8,293.8 730.8,293.7 729.0,292.2 729.8,289.2 730.9,288.8z" fill="#d1e46f" stroke="#d1e46f" stroke-width="0.6" stroke-linejoin="round"/><path d="M779.9,288.8 780.4,288.3 781.4,288.4 780.0,284.9 780.0,283.4 779.7,284.5 779.1,284.9 777.1,285.1 776.4,285.7 775.5,285.9 774.9,285.3 774.8,284.6 775.7,280.3 775.0,277.8 769.8,280.8 769.5,281.1 768.9,284.1 768.6,287.1 768.8,287.6 770.8,288.6 771.4,289.2 775.4,290.1 776.1,290.5 777.2,291.6 777.6,290.9 778.6,291.3 779.4,289.7 779.4,289.7z" fill="#fdae63" stroke="#fdae63" stroke-width="0.6" stroke-linejoin="round"/><path d="M760.8,297.6 758.7,299.0 758.5,299.3 758.2,301.3 757.9,304.2 757.9,304.2 760.0,304.9 761.2,304.7 762.5,305.3 762.4,304.6 762.9,304.5 763.6,302.7 765.6,301.5 766.2,300.8 766.5,299.6 766.5,297.9 765.7,296.7z" fill="#cab4d2" stroke="#cab4d2" stroke-width="0.6" stroke-linejoin="round"/><path d="M761.2,304.7 760.0,304.9 757.9,304.2 757.7,305.2 756.6,305.6 756.7,305.5 756.7,305.6 756.5,305.6 756.4,305.6 755.9,306.1 756.4,305.6 756.4,307.0 758.6,309.1 760.7,310.9 763.2,311.6 763.1,311.0 764.1,311.4 763.6,310.7 762.5,305.3z" fill="#a9db7b" stroke="#a9db7b" stroke-width="0.6" stroke-linejoin="round"/><path d="M776.1,290.5 775.4,290.1 771.4,289.2 771.4,290.0 770.3,290.8 770.3,292.8 769.8,293.7 767.7,294.7 766.7,296.5 765.7,296.7 766.5,297.9 766.5,299.6 766.2,300.8 765.6,301.5 763.6,302.7 762.9,304.5 762.4,304.6 763.6,310.7 764.1,311.4 766.6,312.6 767.7,314.5 768.1,314.7 768.9,316.4 768.8,316.6 769.9,317.8 769.6,318.8 770.9,318.7 772.9,319.6 773.2,319.9 773.3,319.7 774.1,320.1 777.1,318.4 781.4,316.3 781.3,315.9 780.3,312.5 778.9,309.7 785.7,307.0 785.0,304.1 784.6,298.4 783.7,293.2 782.9,290.9 780.4,291.1 779.8,290.9 779.4,290.4 779.4,289.7 778.6,291.3 777.6,290.9 777.2,291.6z" fill="#fdc55f" stroke="#fdc55f" stroke-width="0.6" stroke-linejoin="round"/><path d="M798.9,291.0 798.6,290.1 798.4,290.9 797.6,291.2 792.0,291.3 785.1,294.1 784.3,294.0 783.7,293.2 784.6,298.4 785.0,304.1 785.7,307.0 785.4,305.9 786.1,305.9 786.4,307.3 789.4,308.9 792.9,309.9 796.5,312.7 797.1,312.5 798.0,312.2 800.2,312.9 804.5,312.5 804.9,312.7 804.9,312.6 805.7,312.7 806.2,312.4 806.5,309.4 808.6,307.6 809.3,305.8 809.8,303.9 809.9,303.9 809.2,302.9 808.2,301.3 808.6,295.6 808.5,295.4 809.8,294.7 808.1,294.3 807.4,293.8 805.0,291.5 805.1,291.3z" fill="#fbe165" stroke="#fbe165" stroke-width="0.6" stroke-linejoin="round"/><path d="M778.9,309.7 780.3,312.5 781.3,315.9 781.2,315.4 783.2,315.0 785.0,315.9 789.3,315.6 791.1,315.2 791.8,315.5 791.9,315.0 792.9,314.9 796.1,312.7 795.4,312.2 795.6,312.1 796.4,312.7 797.1,312.5 796.5,312.7 792.9,309.9 789.4,308.9 786.4,307.3 786.1,305.9 785.4,305.9 785.7,307.0z" fill="#f5c2da" stroke="#f5c2da" stroke-width="0.6" stroke-linejoin="round"/><path d="M804.5,312.5 800.2,312.9 798.0,312.2 796.4,312.7 795.6,312.1 795.4,312.2 796.1,312.7 792.9,314.9 791.9,315.0 791.8,315.5 791.9,315.5 792.8,316.1 793.0,317.2 792.9,318.5 794.4,317.7 795.7,318.4 800.0,317.0 804.3,316.3 804.4,315.8 804.6,315.8 804.9,312.7z" fill="#fdae63" stroke="#fdae63" stroke-width="0.6" stroke-linejoin="round"/><path d="M773.2,319.9 774.8,322.4 775.0,322.6 775.6,322.3 778.4,322.0 780.0,322.4 783.7,323.3 784.4,323.6 787.3,322.4 789.0,322.8 789.4,323.2 789.3,321.9 790.0,320.8 791.1,319.9 791.1,319.5 792.9,318.5 793.0,317.2 792.8,316.1 791.9,315.5 791.1,315.2 789.3,315.6 785.0,315.9 783.2,315.0 781.2,315.4 781.4,316.3 777.1,318.4 774.1,320.1 773.3,319.7z" fill="#a9db7b" stroke="#a9db7b" stroke-width="0.6" stroke-linejoin="round"/><path d="M804.4,315.8 804.3,316.3 800.0,317.0 795.7,318.4 794.4,317.7 791.1,319.5 791.1,319.9 790.0,320.8 789.3,321.9 789.4,323.2 790.3,324.2 791.5,323.9 792.1,324.9 795.7,325.6 797.6,324.9 798.3,325.5 801.2,325.2 801.7,324.7 801.6,324.1 801.8,323.0 804.0,319.5 804.8,318.8 805.2,318.6 804.7,318.3 804.7,318.0 805.0,317.4 804.5,317.4 804.5,317.3 804.6,315.8z" fill="#fdc55f" stroke="#fdc55f" stroke-width="0.6" stroke-linejoin="round"/><path d="M770.9,318.7 769.6,318.8 769.4,319.7 769.0,320.5 768.6,320.6 765.7,322.7 766.1,324.0 765.6,324.5 765.5,324.9 766.3,325.5 767.1,325.3 768.6,325.6 771.4,324.9 773.6,323.4 773.5,323.3 774.9,322.6 774.9,322.5 772.9,319.6z" fill="#a1cfc5" stroke="#a1cfc5" stroke-width="0.6" stroke-linejoin="round"/><path d="M802.8,285.7 802.8,288.3 802.6,288.9 801.8,289.3 802.9,289.1 805.4,290.2 805.0,291.5 807.4,293.8 808.1,294.3 809.8,294.7 812.4,293.4 813.2,291.8 814.3,290.9 815.5,288.3 817.0,286.7 816.7,286.3 815.2,286.3 814.9,285.7 814.9,285.5 814.3,285.4 813.6,284.1 807.1,284.1 802.9,285.6zM802.9,285.6 802.9,286.2 802.8,285.7z" fill="#a1cfc5" stroke="#a1cfc5" stroke-width="0.6" stroke-linejoin="round"/><path d="M806.9,275.5 805.0,276.6 804.9,276.5 805.5,277.5 805.0,278.3 803.4,279.3 803.2,279.8 803.2,284.8 802.9,285.6 807.1,284.1 813.6,284.1 814.3,285.4 814.9,285.5 814.9,284.2 819.6,285.2 819.6,281.2 817.3,277.5 814.9,276.8 814.9,276.4 810.4,275.2 809.1,276.9 808.4,276.0 807.4,275.4z" fill="#f5c2da" stroke="#f5c2da" stroke-width="0.6" stroke-linejoin="round"/><path d="M750.8,309.2 749.9,310.1 749.5,311.2 749.1,311.7 748.5,311.8 745.6,311.6 743.7,312.6 743.5,312.9 742.9,315.0 742.3,315.7 736.1,317.9 736.3,319.7 736.7,320.1 738.7,320.9 741.2,322.7 741.5,323.1 742.8,326.5 743.9,330.6 744.1,333.1 744.1,333.0 744.2,334.3 744.5,334.3 745.4,335.7 748.6,336.8 756.3,338.2 757.7,337.7 757.3,337.9 760.5,336.6 761.0,336.5 764.8,337.2 765.2,337.0 767.1,335.4 766.3,333.1 766.3,332.3 766.3,332.8 766.0,332.5 765.0,330.0 765.7,327.1 765.0,326.6 766.0,325.6 766.3,325.5 765.5,324.9 765.6,324.5 766.1,324.0 765.7,322.7 768.6,320.6 769.0,320.5 769.4,319.7 769.9,317.8 768.8,316.6 768.9,316.4 768.1,314.7 767.7,314.5 766.6,312.6 763.1,311.0 763.2,311.6 760.7,310.9 758.6,309.1 756.4,307.0 756.4,305.6 755.9,306.1 754.8,306.1 754.3,306.7 753.7,307.0 753.4,307.0 753.5,307.2 753.3,307.8 752.7,308.5 751.8,308.9 751.1,309.0 750.8,308.7zM772.5,336.8 770.9,337.4 770.6,337.7 770.0,340.1 770.7,342.5 770.5,342.0 770.7,342.5 772.1,342.9 772.5,341.7 772.4,342.1 772.9,339.9z" fill="#fdae63" stroke="#fdae63" stroke-width="0.6" stroke-linejoin="round"/><path d="M733.3,359.6 734.3,360.6 735.7,359.6 736.1,359.4 736.4,359.5 736.7,359.2 739.4,358.2 743.5,357.5 746.4,355.4 748.6,351.8 749.5,348.0 751.6,345.2 754.3,343.2 757.0,340.5 757.1,340.0 756.8,339.2 756.8,338.4 757.3,337.9 757.7,337.7 756.3,338.2 748.6,336.8 745.4,335.7 744.5,334.3 744.2,334.3 744.1,333.0 743.8,334.2 743.0,334.5 735.7,334.2 728.7,333.5 725.2,334.8 724.9,335.2 724.3,337.9 724.3,338.3 725.2,339.9 725.1,339.6 725.7,340.6 728.6,340.3 732.1,341.0 729.9,348.9 729.3,352.4 730.0,355.3 730.7,356.2 733.3,359.6zM756.3,350.0 756.6,349.9 757.8,348.1 757.8,347.6 757.3,346.2 757.0,346.1 754.6,346.8 754.6,349.3zM706.6,384.7 706.9,384.4 707.8,382.2 707.8,381.9 706.4,381.0 704.8,382.6 704.6,383.0 705.0,385.2z" fill="#fbe165" stroke="#fbe165" stroke-width="0.6" stroke-linejoin="round"/><path d="M773.6,323.4 771.4,324.9 768.6,325.6 767.1,325.3 766.0,325.6 765.0,326.6 765.7,327.1 765.0,330.0 766.0,332.5 766.3,332.8 766.3,332.3 767.0,331.8 767.8,331.9 769.4,332.9 771.8,332.9 772.4,333.1 774.8,334.9 776.5,337.9 778.5,340.0 783.5,343.6 785.7,345.7 788.6,348.0 789.7,349.6 789.8,350.5 789.5,351.7 789.1,352.2 788.6,352.5 783.5,352.8 780.1,354.0 781.5,355.8 784.2,357.5 787.1,357.8 788.2,355.1 788.5,353.5 788.9,352.8 789.6,352.6 791.1,352.9 791.6,352.6 792.8,350.9 792.8,350.5 792.4,349.2 792.6,348.1 793.1,347.6 794.2,347.4 795.7,347.8 796.1,346.6 796.0,346.2 794.3,343.5 790.8,340.0 787.9,337.9 785.1,335.0 782.3,332.9 781.0,331.1 780.9,330.2 781.3,329.0 781.8,328.4 783.4,327.7 783.6,327.5 784.1,325.8 783.9,325.2 782.9,324.6 783.7,323.9 784.4,323.6 783.7,323.3 780.0,322.4 778.4,322.0 775.6,322.3 773.5,323.3zM769.9,343.8 769.4,343.8 769.2,344.1 769.1,347.1 769.9,350.4 770.3,350.8 771.8,351.1 772.3,350.9 773.5,349.1 774.0,345.8 773.0,343.4 772.6,343.0 772.4,342.1 772.5,341.7 772.1,342.9 770.7,342.5 770.5,342.0 770.7,342.5 770.6,343.3z" fill="#d1e46f" stroke="#d1e46f" stroke-width="0.6" stroke-linejoin="round"/><path d="M783.6,327.5 783.4,327.7 784.3,327.2 785.2,327.6 786.6,327.6 787.5,327.5 789.3,325.4 788.6,324.7 788.9,324.5 790.3,324.2 789.0,322.8 787.3,322.4 783.7,323.9 782.9,324.6 783.9,325.2 784.1,325.8z" fill="#cab4d2" stroke="#cab4d2" stroke-width="0.6" stroke-linejoin="round"/><path d="M792.1,324.9 791.5,323.9 788.9,324.5 788.6,324.7 789.3,325.4 787.5,327.5 786.6,327.6 787.6,327.9 787.8,328.7 787.5,330.1 787.6,330.6 792.1,335.0 787.8,330.7 789.3,332.1 792.1,335.0 793.8,336.0 795.7,337.1 795.3,336.6 794.1,336.0 790.1,332.0 788.7,330.0 790.1,330.1 790.0,330.0 792.1,328.9 792.8,328.9 796.5,329.1 796.6,329.2 796.6,328.8 797.6,327.4 797.5,326.9 796.6,326.2 797.7,325.6 798.3,325.5 797.6,324.9 795.7,325.6z" fill="#fbe165" stroke="#fbe165" stroke-width="0.6" stroke-linejoin="round"/><path d="M796.5,329.1 792.8,328.9 792.1,328.9 790.0,330.0 790.1,330.1 788.7,330.0 790.1,332.0 794.1,336.0 795.3,336.6 795.0,336.1 796.0,336.6 796.5,336.4 796.8,335.0 797.1,334.9 796.9,334.6 797.1,333.6 796.8,332.1 797.0,330.8 796.6,329.2z" fill="#a1cfc5" stroke="#a1cfc5" stroke-width="0.6" stroke-linejoin="round"/><path d="M801.3,325.2 797.7,325.6 796.6,326.2 797.5,326.9 797.6,327.4 796.6,328.8 797.0,330.8 796.8,332.1 797.1,333.6 796.9,334.6 797.1,334.9 798.1,334.6 798.7,334.6 799.3,335.7 800.2,336.0 800.3,336.2 800.5,336.1 801.4,336.4 802.1,337.0 803.1,336.8 803.3,338.0 803.6,338.2 804.6,338.0 804.7,338.5 805.0,338.6 804.9,337.9 806.1,337.6 806.2,337.1 805.3,335.5 805.6,334.2 805.7,333.9 805.4,333.4 805.7,332.1 802.4,327.9 802.0,326.9 801.8,325.4z" fill="#a9db7b" stroke="#a9db7b" stroke-width="0.6" stroke-linejoin="round"/><path d="M799.3,335.7 798.7,334.6 798.1,334.6 796.8,335.0 796.5,336.4 796.0,336.6 795.0,336.1 795.7,337.1 796.8,337.7 797.1,338.6 797.5,339.3 799.3,338.2 799.1,337.8 799.5,337.8 799.8,336.6 800.3,336.2 800.2,336.0z" fill="#f5c2da" stroke="#f5c2da" stroke-width="0.6" stroke-linejoin="round"/><path d="M801.4,336.4 800.5,336.1 799.8,336.6 799.5,337.8 799.7,337.7 800.6,338.4 801.3,339.5 801.4,339.4 801.4,339.6 803.2,339.3 803.1,338.8 804.6,338.4 804.7,338.5 804.6,338.0 803.6,338.2 803.3,338.0 803.1,336.8 802.1,337.0z" fill="#d1e46f" stroke="#d1e46f" stroke-width="0.6" stroke-linejoin="round"/><path d="M800.6,338.4 799.7,337.7 799.1,337.8 799.3,338.2 797.5,339.3 797.1,338.6 797.4,339.3 797.4,340.2 797.1,340.6 797.1,342.8 797.8,345.2 798.6,345.9 799.3,346.4 801.1,344.3 801.0,344.0 800.5,340.7 800.9,339.7 801.3,339.5z" fill="#cab4d2" stroke="#cab4d2" stroke-width="0.6" stroke-linejoin="round"/><path d="M804.6,338.4 803.1,338.8 803.2,339.3 801.4,339.6 801.4,339.4 800.9,339.7 800.5,340.7 801.0,344.0 800.9,343.2 801.8,342.7 802.1,342.6 802.1,342.9 804.3,343.2 806.4,341.8 806.3,341.6 805.2,340.2 805.0,338.6z" fill="#fdc55f" stroke="#fdc55f" stroke-width="0.6" stroke-linejoin="round"/><path d="M854.3,341.7 850.6,342.4 845.2,342.1 840.1,340.0 835.1,339.2 829.9,340.3 824.3,340.7 821.7,341.0 821.9,341.1 820.7,341.2 820.6,340.7 820.7,341.2 816.6,342.0 816.9,343.2 816.5,343.3 816.4,343.8 815.7,348.5 815.7,351.4 816.4,354.4 817.9,357.3 820.8,359.4 824.1,360.0 826.8,358.8 827.5,358.7 830.8,359.3 835.2,358.7 837.7,359.3 839.6,358.5 840.3,358.4 840.4,358.4 841.3,357.8 850.7,356.4 853.0,356.6 854.0,357.1 854.1,357.3 856.4,356.1 857.0,355.9 860.6,355.7 860.5,355.0 860.7,355.0 861.4,352.9 860.6,346.8 860.5,346.5 860.1,346.1 860.1,344.8 859.5,343.0 859.5,343.0 859.5,343.0 859.3,342.1 855.7,341.4 854.3,341.7 854.9,341.3z" fill="#a9db7b" stroke="#a9db7b" stroke-width="0.6" stroke-linejoin="round"/><path d="M802.1,342.9 802.1,342.6 801.8,342.7 800.9,343.2 801.1,344.3 799.3,346.4 798.6,345.9 799.2,346.5 800.8,349.6 800.9,350.4 800.1,352.6 800.2,353.1 805.6,358.5 807.0,359.3 807.3,359.2 810.0,355.8 811.4,353.0 811.4,352.7 809.3,350.5 808.4,348.8 808.3,348.0 808.8,347.4 813.4,345.1 814.3,343.4 814.0,343.8 814.3,343.2 810.7,343.6 807.4,343.2 806.2,341.9 806.4,341.8 804.3,343.2zM807.9,362.5 809.4,363.6 813.4,364.0 816.0,362.5 812.3,361.4z" fill="#fdae63" stroke="#fdae63" stroke-width="0.6" stroke-linejoin="round"/><path d="M836.3,362.3 835.2,361.5 834.8,361.5 830.7,362.9 831.1,364.6 833.4,364.7 836.3,362.7z" fill="#cab4d2" stroke="#cab4d2" stroke-width="0.6" stroke-linejoin="round"/><path d="M730.7,356.2 730.0,355.3 729.3,352.4 729.9,348.9 732.1,341.0 728.6,340.3 725.7,340.6 725.1,339.6 725.7,341.0 725.3,344.5 724.3,348.1 723.9,351.6 725.1,352.6 725.2,353.2 725.0,355.6 726.5,356.0 729.8,355.6z" fill="#d1e46f" stroke="#d1e46f" stroke-width="0.6" stroke-linejoin="round"/><path d="M736.4,359.5 736.1,359.4 735.7,359.6 734.3,360.6 733.3,359.6 733.6,360.3 733.3,360.9 732.0,361.5 729.3,365.8 726.4,368.1 724.0,370.8 723.5,374.7 722.2,377.9 719.3,380.9 715.6,383.2 712.1,387.4 709.3,391.6 707.7,395.6 705.0,399.9 704.8,401.2 704.6,402.5 711.3,402.2 712.7,399.7 713.6,399.0 714.1,397.6 715.9,395.0 716.2,395.0 718.3,388.3 719.0,388.2 719.0,386.9 725.3,386.1 725.3,387.3 728.7,385.3 727.9,382.8 730.2,380.5 734.4,377.7 738.8,375.5 739.5,373.8 742.9,373.1 745.7,371.9 744.6,367.3 742.7,362.6 742.5,362.4 743.7,361.9 742.5,362.4 741.7,362.4 739.9,361.7 736.9,361.1 736.2,360.7 736.1,359.8z" fill="#a1cfc5" stroke="#a1cfc5" stroke-width="0.6" stroke-linejoin="round"/><path d="M769.1,357.4 770.2,358.1 769.4,361.6 767.5,366.0 769.0,369.0 771.1,372.5 771.9,377.0 772.2,377.0 772.2,377.1 774.2,377.0 775.0,374.0 777.0,372.6 778.5,370.1 778.9,369.6 778.3,369.7 777.8,369.3 776.8,368.0 775.7,365.8 775.7,364.8 777.0,362.7 777.1,362.2 776.0,360.0 775.9,359.2 776.8,356.9 776.6,356.6 773.0,356.0 770.2,357.7z" fill="#fbe165" stroke="#fbe165" stroke-width="0.6" stroke-linejoin="round"/><path d="M719.0,388.2 724.9,387.6 725.3,387.3 725.3,386.1 719.0,386.9z" fill="#f5c2da" stroke="#f5c2da" stroke-width="0.6" stroke-linejoin="round"/><path d="M959.2,307.4 953.6,305.0 949.4,297.5 945.2,292.4 936.4,295.5 932.5,291.3 928.1,288.1 921.9,288.1 913.6,292.4 906.3,293.9 904.1,299.8 903.4,306.0 889.2,307.8 882.0,303.8 875.0,305.3 869.9,309.7 867.8,315.7 866.4,315.7 867.5,316.8 867.4,317.0 871.1,322.3 872.0,322.5 872.7,323.4 875.8,324.1 876.1,323.9 880.0,322.8 883.6,323.9 882.9,326.7 880.0,327.8 877.8,329.3 877.2,331.8 878.6,334.6 880.5,337.7 882.7,340.2 883.9,340.1 883.6,340.2 884.0,339.7 885.0,339.2 887.7,341.3 888.6,341.0 889.8,342.3 892.1,342.4 892.1,341.5 891.8,330.1 897.2,328.5 900.9,330.8 904.4,333.6 907.2,335.0 911.4,334.3 915.1,334.3 917.4,336.6 918.1,340.2 919.5,342.9 920.4,343.4 922.9,343.9 924.0,343.3 924.9,343.4 927.9,341.9 928.0,341.9 928.5,341.6 929.1,340.4 932.7,339.6 936.3,337.5 940.0,336.5 943.6,338.0 948.6,338.0 951.5,338.8 952.4,337.9 953.1,338.5 952.0,339.9 953.9,337.3 954.4,337.3 955.1,330.1 960.1,328.7 961.3,323.8 961.6,323.4 968.3,322.0 968.3,316.0 970.7,312.8 971.8,313.4 971.9,313.3 970.8,312.6 971.0,312.4 966.4,308.1z" fill="#cab4d2" stroke="#cab4d2" stroke-width="0.6" stroke-linejoin="round"/><path d="M978.9,321.4 980.3,328.7 991.8,333.0 994.7,338.0 1007.7,338.7 1016.3,341.6 1025.0,338.7 1032.3,335.8 1033.7,330.1 1042.1,327.3 1050.7,323.7 1054.1,321.2 1043.9,318.2 1046.0,314.0 1040.6,310.2 1033.4,312.7 1024.9,309.6 1012.1,308.8 1006.4,304.6 1000.7,302.3 997.8,307.5 990.9,309.5 985.1,307.4 973.4,314.2 972.5,313.6 973.4,314.3 973.3,314.3z" fill="#fdc55f" stroke="#fdc55f" stroke-width="0.6" stroke-linejoin="round"/><path d="M1057.0,393.1 1055.7,398.4 1055.8,398.8 1057.9,402.1 1060.7,397.0 1060.1,391.7 1059.8,391.5 1057.3,392.7z" fill="#cab4d2" stroke="#cab4d2" stroke-width="0.6" stroke-linejoin="round"/><path d="M954.3,377.1 953.2,381.6 959.9,384.3 967.0,387.4 973.0,389.7 973.9,387.0 972.2,386.2 972.1,386.0 972.8,386.0 968.6,383.6 961.4,380.0z" fill="#a1cfc5" stroke="#a1cfc5" stroke-width="0.6" stroke-linejoin="round"/><path d="M983.2,387.4 982.8,385.5 984.1,385.4 984.0,385.0 982.6,384.8 982.4,384.0 979.3,384.4 978.6,384.3 977.8,384.6 976.8,384.8 976.8,385.0 975.6,385.5 975.7,385.8 977.0,385.8 977.6,388.2z" fill="#f5c2da" stroke="#f5c2da" stroke-width="0.6" stroke-linejoin="round"/><path d="M977.7,403.2 981.1,403.2 980.7,401.5 982.9,400.0 983.1,399.1 983.9,398.8 983.6,397.0 984.1,395.0 983.3,395.0 983.1,394.1 980.1,391.8 974.7,392.6 974.9,394.8 974.0,391.7 974.3,394.3 975.2,396.6 975.4,398.7z" fill="#fdc55f" stroke="#fdc55f" stroke-width="0.6" stroke-linejoin="round"/><path d="M994.8,386.4 992.9,388.9 990.9,389.4 990.0,390.6 988.6,393.2 988.6,395.7 984.3,398.6 982.9,402.9 983.6,402.6 984.4,403.1 987.0,408.5 988.6,415.8 991.2,419.1 991.7,419.3 994.9,418.8 995.5,418.9 996.0,419.4 998.5,425.7 1001.1,431.0 1000.6,430.0 1001.3,431.1 1002.5,429.9 1000.4,422.9 999.0,415.7 999.0,414.9 997.7,411.4 997.7,410.0 998.1,409.1 1002.0,405.2 1002.7,404.8 1003.7,405.1 1004.1,405.3 1004.4,405.0 1004.2,404.0 1004.2,402.9 1005.0,402.1 1005.7,401.8 1005.5,401.1 1003.4,397.9 1001.0,391.3 999.5,383.9 997.8,384.5 996.7,383.6 995.4,384.1z" fill="#fdae63" stroke="#fdae63" stroke-width="0.6" stroke-linejoin="round"/><path d="M1003.7,405.1 1002.7,404.8 1002.0,405.2 998.1,409.1 997.7,410.0 997.7,411.4 999.0,414.9 999.0,415.7 1000.4,422.9 1002.5,429.9 1001.3,431.1 1000.6,430.0 1001.1,431.0 1001.1,431.9 1000.8,432.7 1000.6,434.1 999.6,434.6 1001.6,439.5 1003.4,440.9 1003.6,441.0 1004.1,441.7 1005.2,442.2 1005.5,441.0 1005.8,439.9 1005.1,434.3 1003.8,429.1 1004.0,428.2 1005.4,426.8 1006.2,426.6 1009.2,427.0 1010.0,427.1 1011.4,422.9 1015.7,421.4 1015.8,421.3 1016.8,418.0 1016.8,417.3 1012.7,412.4 1010.5,412.4 1007.8,412.8 1006.9,411.2 1006.4,408.6 1005.3,407.9 1004.6,405.6z" fill="#a9db7b" stroke="#a9db7b" stroke-width="0.6" stroke-linejoin="round"/><path d="M1004.2,404.0 1005.3,407.9 1006.4,408.6 1006.9,411.2 1007.8,412.8 1010.5,412.4 1012.7,412.4 1016.8,417.3 1016.8,418.0 1015.8,421.3 1015.8,421.3 1016.0,420.5 1017.1,420.5 1017.1,420.7 1020.8,421.3 1021.4,421.4 1021.4,420.5 1021.4,419.4 1018.3,411.6 1014.0,407.3 1012.6,403.0 1012.3,402.6 1010.1,401.5 1009.9,400.4 1007.1,401.1 1005.0,402.1 1004.2,402.9z" fill="#cab4d2" stroke="#cab4d2" stroke-width="0.6" stroke-linejoin="round"/><path d="M1009.9,400.4 1010.1,401.5 1012.3,402.6 1012.6,403.0 1014.0,407.3 1018.3,411.6 1021.4,419.4 1021.4,420.5 1022.4,421.1 1022.9,422.1 1023.2,424.5 1023.9,425.7 1023.5,426.6 1023.6,427.1 1022.6,428.3 1021.7,430.2 1020.5,430.8 1020.0,431.4 1015.9,434.4 1015.6,434.4 1016.0,433.9 1015.0,435.0 1015.7,437.8 1025.6,433.0 1028.5,427.3 1028.6,427.0 1027.1,421.3 1018.9,410.4 1018.8,409.5 1020.0,406.0 1020.3,405.6 1024.7,401.8 1025.7,401.8 1024.3,401.4 1021.4,398.6 1015.7,397.9 1011.4,400.0z" fill="#a1cfc5" stroke="#a1cfc5" stroke-width="0.6" stroke-linejoin="round"/><path d="M1021.7,430.2 1022.6,428.3 1023.6,427.1 1023.5,426.6 1023.9,425.7 1023.2,424.5 1022.9,422.1 1022.4,421.1 1021.4,420.5 1021.4,421.4 1017.1,420.7 1017.1,420.5 1016.0,420.5 1015.7,421.4 1011.4,422.9 1010.0,427.1 1009.2,427.0 1010.9,427.5 1012.8,430.1 1016.0,433.3 1016.0,433.9 1015.6,434.4 1015.9,434.4 1020.0,431.4 1020.5,430.8z" fill="#f5c2da" stroke="#f5c2da" stroke-width="0.6" stroke-linejoin="round"/><path d="M951.0,434.9 951.8,435.1 952.1,435.8 952.5,441.9 952.7,442.3 955.7,444.3 958.5,440.3 958.5,439.7 955.7,434.3 952.9,434.8 952.2,434.6 951.7,434.0 951.9,433.4 951.6,433.6 950.5,435.1z" fill="#fdae63" stroke="#fdae63" stroke-width="0.6" stroke-linejoin="round"/><path d="M908.7,390.0 908.6,391.2 908.8,391.4 915.2,390.2 916.1,390.4 919.9,394.3 923.4,397.0 924.3,398.6 923.7,397.4 928.9,394.4 927.5,388.7 931.6,385.9 940.3,374.4 939.7,370.9 940.3,367.6 943.1,365.5 945.4,362.4 944.6,361.6 944.9,361.3 944.0,361.0 943.1,360.1 940.3,358.0 940.4,356.6 940.3,356.6 939.3,356.4 939.2,356.4 937.7,357.2 934.4,356.8 933.7,356.5 932.3,357.1 932.3,357.0 932.1,358.8 931.1,358.1 930.4,362.1 928.6,365.6 926.1,369.2 923.8,372.1 922.9,372.9 918.3,377.9 917.9,378.1 917.7,378.4 916.7,378.6 912.9,380.0 911.6,380.3 908.7,379.8 908.4,381.0 906.8,381.3 907.2,382.5 909.3,385.7 908.9,389.0 908.5,389.6 908.4,389.2z" fill="#cab4d2" stroke="#cab4d2" stroke-width="0.6" stroke-linejoin="round"/><path d="M884.3,425.7 884.6,427.7 888.3,427.4 888.5,425.5z" fill="#a1cfc5" stroke="#a1cfc5" stroke-width="0.6" stroke-linejoin="round"/><path d="M1069.9,430.2 1069.9,429.8 1067.3,425.8 1067.0,425.6 1063.5,424.8 1063.0,424.4 1060.4,420.5 1060.3,419.5 1062.2,415.6 1061.5,410.9 1061.2,410.7 1055.7,411.4 1055.0,415.8 1055.7,420.1 1058.4,425.6 1058.8,425.7 1060.1,425.3 1061.0,425.4 1061.4,426.2 1061.4,427.2 1062.6,430.8 1062.4,431.9 1060.0,434.3 1062.0,437.4 1062.2,438.0 1061.9,438.6 1060.3,440.3 1062.2,442.3 1062.7,442.4 1064.1,441.9 1064.8,441.9 1065.9,443.0 1067.0,443.3 1067.5,443.7 1068.3,444.7 1070.3,445.3 1071.8,443.1 1072.9,439.8 1071.7,434.5 1071.2,434.2 1068.8,433.3 1068.2,432.9 1068.1,432.3 1068.4,431.7zM1055.6,430.9 1055.6,430.5 1054.5,429.4 1054.1,429.4 1047.9,435.7 1049.1,437.7 1049.5,437.7z" fill="#d1e46f" stroke="#d1e46f" stroke-width="0.6" stroke-linejoin="round"/><path d="M1076.3,341.2 1072.0,343.3 1066.8,347.0 1066.8,347.3 1065.5,347.8 1066.7,347.9 1067.1,348.7 1067.2,349.5 1068.1,350.3 1068.4,351.3 1067.9,353.6 1069.7,354.9 1070.5,354.8 1072.1,354.0 1074.3,352.1 1077.1,350.7 1076.1,349.3 1076.2,348.6 1077.1,347.3 1079.3,345.0 1081.4,342.2 1082.8,339.5 1083.0,338.2 1083.5,338.0 1082.9,338.0 1081.4,338.6 1079.9,338.2zM1076.5,350.1 1076.6,350.1 1076.9,350.4z" fill="#cab4d2" stroke="#cab4d2" stroke-width="0.6" stroke-linejoin="round"/><path d="M1072.1,354.0 1070.5,354.8 1071.2,354.8 1071.7,355.2 1071.9,355.8 1071.0,360.1 1071.4,363.5 1072.7,365.6 1073.0,365.7 1075.8,364.3 1078.5,362.3 1080.0,359.4 1079.3,354.9 1077.1,350.7 1074.3,352.1z" fill="#f5c2da" stroke="#f5c2da" stroke-width="0.6" stroke-linejoin="round"/><path d="M809.8,406.8 808.6,407.1 798.7,401.4 790.7,398.0 790.5,398.1 790.0,397.9 788.6,398.6 788.8,398.9 787.9,399.3 787.9,400.0 789.2,402.1 789.2,408.6 788.2,414.3 786.1,418.6 783.9,421.5 784.7,425.0 784.2,424.9 784.7,427.3 785.0,427.9 785.3,429.7 785.3,429.8 785.6,431.3 786.3,431.9 788.6,433.4 787.8,436.1 788.8,438.9 789.8,438.7 790.0,438.7 794.3,437.9 802.9,432.5 803.2,432.2 804.5,431.0 805.0,430.7 805.1,430.5 805.4,430.0 804.3,427.1 804.8,426.0 804.0,422.8 805.4,420.9 805.4,419.7 806.4,419.7 808.3,417.3 808.6,407.4 807.5,406.8 807.6,406.6 808.6,407.1 809.8,406.9z" fill="#fdae63" stroke="#fdae63" stroke-width="0.6" stroke-linejoin="round"/><path d="M812.7,401.8 811.9,401.8 811.5,406.2 811.0,406.6 808.6,407.1 807.6,406.6 807.5,406.8 808.6,407.4 808.3,417.3 806.4,419.7 805.4,419.7 805.4,420.9 804.0,422.8 804.8,426.0 804.3,427.1 805.4,430.0 805.1,430.5 805.0,430.7 805.3,430.8 804.7,431.9 807.3,432.6 809.6,436.3 815.9,444.1 818.5,445.9 820.7,447.1 824.4,447.9 827.6,449.3 827.6,449.3 831.4,449.7 835.1,447.8 835.5,448.3 835.6,448.2 836.8,446.0 836.6,445.7 837.1,445.0 835.8,441.6 832.8,439.4 833.7,437.7 835.8,434.8 837.6,431.3 839.7,427.7 841.4,424.3 841.3,423.3 841.7,421.9 842.3,421.5 842.1,421.4 841.9,421.2 842.3,420.0 841.6,419.7 842.4,419.7 843.4,416.2 843.2,415.6 846.4,412.4 846.8,412.9 846.4,411.3 846.5,411.3 845.6,408.0 844.4,401.9 844.5,401.5 844.2,401.4 841.4,401.7 812.7,402.1 812.7,401.2z" fill="#fbe165" stroke="#fbe165" stroke-width="0.6" stroke-linejoin="round"/><path d="M824.4,447.9 820.7,447.1 818.5,445.9 818.5,445.9 818.4,446.3 817.1,445.7 812.9,446.4 809.3,446.1 805.7,447.8 802.9,447.1 798.6,447.1 795.9,448.8 795.0,450.7 794.8,452.0 795.3,454.3 793.8,458.7 792.4,461.6 789.1,469.6 784.7,470.3 781.5,471.7 781.6,471.9 782.0,472.8 782.1,473.2 782.4,473.2 785.0,473.6 788.6,474.3 788.9,474.5 790.9,474.7 793.1,478.6 797.1,480.0 798.8,478.6 802.2,479.0 804.5,478.5 804.7,479.2 806.0,479.4 806.0,484.3 805.7,484.3 806.0,485.5 808.8,487.2 810.2,487.5 813.1,488.3 821.1,488.3 821.1,482.7 824.4,481.0 824.4,480.9 824.5,480.8 825.6,480.1 824.0,474.3 823.6,471.5 823.2,469.8 823.4,469.7 823.3,468.6 823.5,467.8 823.2,466.2 823.9,466.1 823.9,465.8 823.9,465.7 823.6,463.0 824.3,462.8 824.9,462.0 825.2,461.5 825.3,461.4 825.3,461.3 825.1,458.5 826.9,454.2 827.5,452.1 827.6,449.3z" fill="#cab4d2" stroke="#cab4d2" stroke-width="0.6" stroke-linejoin="round"/><path d="M756.6,443.7 759.8,444.4 760.3,444.6 762.1,446.5 762.7,447.7 764.1,448.4 765.8,448.6 769.3,448.2 769.1,448.1 770.5,448.0 771.5,444.8 774.5,441.5 776.2,441.1 778.3,440.1 781.3,437.2 785.0,430.0 784.9,429.5 785.3,429.7 785.0,427.9 784.7,427.3 784.2,424.9 779.3,424.6 772.1,426.1 765.7,424.6 760.4,424.3 759.3,425.2 758.0,426.7 757.5,426.8 757.4,428.1 757.1,432.5 755.4,434.6 755.0,442.9 756.2,443.1 756.1,443.3z" fill="#a9db7b" stroke="#a9db7b" stroke-width="0.6" stroke-linejoin="round"/><path d="M781.2,482.3 781.4,483.8 781.7,484.6 782.3,487.3 782.1,488.2 780.6,488.7 778.9,495.7 777.8,500.6 778.1,503.0 778.2,504.3 782.9,503.3 788.6,504.3 797.3,504.7 802.9,505.4 804.1,504.6 804.5,504.3 805.4,504.3 804.7,500.7 804.8,499.4 804.6,498.6 805.0,493.2 805.9,493.1 809.0,491.4 808.6,488.6 808.6,488.1 808.9,487.4 809.2,487.3 808.8,487.2 806.0,485.5 805.7,484.3 806.0,484.3 806.0,479.4 804.7,479.2 804.5,478.5 802.2,479.0 798.8,478.6 797.1,480.0 793.1,478.6 790.9,474.7 788.9,474.5 788.6,474.3 785.0,473.6 782.4,473.2 782.6,474.3 781.4,474.6 781.4,474.9 779.4,475.3 779.7,476.6z" fill="#fbe165" stroke="#fbe165" stroke-width="0.6" stroke-linejoin="round"/><path d="M821.1,488.3 813.1,488.3 809.2,487.3 808.9,487.4 808.6,488.1 808.6,488.6 809.0,491.4 805.9,493.1 805.0,493.2 804.6,498.6 804.8,499.4 804.7,500.7 805.4,504.3 805.7,504.3 808.6,505.0 809.3,505.4 809.7,505.3 811.0,505.6 811.4,505.7 812.6,505.3 814.1,505.7 814.1,505.8 814.2,505.8 815.3,505.1 817.1,505.4 820.5,501.9 824.3,500.0 825.7,499.7 826.2,498.0 830.3,496.1 832.3,496.1 832.8,494.8 833.4,493.2 832.9,491.4 833.4,490.8 833.2,489.0 833.7,488.3 833.1,487.9 832.9,486.1 830.6,484.3 828.4,484.3 826.6,481.3 825.7,480.7 824.8,481.2 824.5,480.8 824.4,480.9 824.4,481.0 821.1,482.7zM805.7,504.3 805.7,504.3 805.7,504.3z" fill="#fdc55f" stroke="#fdc55f" stroke-width="0.6" stroke-linejoin="round"/><path d="M823.3,468.6 823.4,469.7 823.2,469.8 823.6,471.5 824.0,474.3 825.6,480.1 824.5,480.8 824.8,481.2 825.7,480.7 826.6,481.3 828.4,484.3 830.6,484.3 832.9,486.1 833.1,487.9 833.7,488.3 833.8,488.3 834.8,487.7 835.8,488.0 835.8,487.9 836.0,488.1 836.9,488.7 836.8,488.3 845.0,488.3 848.3,487.0 848.9,487.0 849.4,486.6 851.4,485.7 850.7,483.2 850.0,478.5 849.1,475.6 850.0,470.2 849.7,470.0 849.3,470.4 846.3,468.8 835.7,461.8 828.6,462.1 827.5,462.5 826.9,462.6 826.4,462.8 826.4,465.2 824.3,465.6 824.2,466.1 826.0,466.0 825.9,469.2 823.7,469.5 823.5,467.8z" fill="#d1e46f" stroke="#d1e46f" stroke-width="0.6" stroke-linejoin="round"/><path d="M860.5,415.6 857.9,419.1 857.8,419.5 858.6,423.5 859.8,424.9 860.4,425.2 861.3,426.3 861.6,426.4 870.0,423.6 878.5,420.1 884.2,415.9 884.2,414.2 884.2,415.4 883.7,414.2 882.7,414.3 880.3,410.3 880.1,410.4 879.3,410.5 875.7,411.1 867.2,413.9 865.7,414.0 860.7,415.4 860.5,415.6z" fill="#a1cfc5" stroke="#a1cfc5" stroke-width="0.6" stroke-linejoin="round"/><path d="M829.9,373.2 825.8,373.5 822.5,375.1 821.7,375.2 818.0,373.9 813.9,374.1 813.2,373.8 812.8,373.2 812.5,374.0 812.0,374.0 812.4,401.2 812.7,401.2 812.7,402.1 841.4,401.7 844.2,401.4 843.3,401.3 842.9,400.7 842.2,398.5 840.8,395.9 840.8,395.1 841.3,394.5 840.9,395.0 840.1,393.7 840.0,393.5 840.6,393.4 839.9,393.5 839.3,393.1 833.7,385.1 833.6,384.5 833.8,383.9 834.8,383.5 836.5,382.3 836.0,382.7 835.9,382.2 836.4,380.7 836.7,380.5 836.6,380.2 837.1,378.7 837.1,378.5 836.1,375.0 835.5,374.8z" fill="#cab4d2" stroke="#cab4d2" stroke-width="0.6" stroke-linejoin="round"/><path d="M876.7,389.1 875.7,387.1 873.6,384.3 871.8,382.4 871.5,381.7 871.8,382.5 871.4,382.1 868.3,381.6 868.1,381.3 867.9,381.5 867.1,381.4 862.9,382.1 850.0,375.7 848.4,375.2 847.3,373.5 846.3,374.1 846.6,374.6 845.7,374.3 845.4,375.2 846.1,376.5 844.4,378.1 844.3,378.6 839.3,380.9 839.3,381.0 838.3,381.5 838.3,381.5 838.1,381.5 838.1,381.5 837.7,381.5 836.7,380.6 836.7,380.5 836.4,380.7 835.9,382.2 836.0,382.7 836.5,382.3 837.2,382.5 837.6,383.2 837.8,385.1 839.3,388.6 841.0,392.1 841.0,392.8 840.6,393.4 840.0,393.5 840.1,393.7 840.9,395.0 841.3,394.5 842.0,394.4 842.6,394.9 845.7,400.0 845.8,400.8 846.3,401.3 849.2,406.4 851.3,409.2 852.8,412.1 854.1,413.8 854.5,414.1 859.7,414.1 860.4,414.3 860.7,415.0 860.5,415.6 860.7,415.4 865.7,414.0 867.2,413.9 875.7,411.1 879.3,410.5 879.2,410.1 880.0,410.0 883.9,408.7 888.6,406.4 889.8,402.9 889.9,402.5 889.3,400.4 888.8,400.3 888.8,400.3 885.7,400.0 882.6,398.8 881.0,395.5 880.4,394.7 881.3,395.5 879.9,394.2 880.0,394.2 878.9,393.2 878.7,393.3 878.6,392.9 877.0,389.8 877.0,389.3z" fill="#fdc55f" stroke="#fdc55f" stroke-width="0.6" stroke-linejoin="round"/><path d="M840.6,372.1 839.3,372.7 839.4,375.7 838.6,380.0 839.8,380.3 839.3,380.9 844.3,378.6 844.4,378.1 846.1,376.5 845.4,375.2 845.7,374.3 846.6,374.6 846.3,374.1 847.3,373.5 846.5,372.3 846.5,372.1 847.5,371.4 847.1,370.9 846.4,370.0 840.8,371.9z" fill="#f5c2da" stroke="#f5c2da" stroke-width="0.6" stroke-linejoin="round"/><path d="M835.5,374.8 836.1,375.0 837.1,378.6 836.6,380.2 836.7,380.6 837.7,381.5 838.3,381.5 839.3,381.0 839.8,380.3 838.6,380.0 839.4,375.7 839.3,372.7 840.6,372.1 839.6,372.2 838.9,371.5 838.8,371.6 837.2,373.4 836.7,374.7z" fill="#fdc55f" stroke="#fdc55f" stroke-width="0.6" stroke-linejoin="round"/><path d="M846.4,370.0 847.1,370.9 846.6,370.3 847.4,368.7 848.6,367.9 852.2,365.9 853.1,362.5 852.9,358.2 852.6,358.2 852.9,357.9 854.1,357.3 854.0,357.1 853.0,356.6 850.7,356.4 841.3,357.8 840.4,358.4 840.9,358.8 841.0,359.5 840.0,361.0 840.7,368.5 841.7,370.4 841.8,371.2 841.2,371.8 840.8,371.9z" fill="#fdae63" stroke="#fdae63" stroke-width="0.6" stroke-linejoin="round"/><path d="M846.5,372.3 848.4,375.2 850.0,375.7 862.9,382.1 867.1,381.4 867.9,381.5 868.1,381.3 867.5,380.0 867.5,379.7 867.9,379.2 868.6,378.6 869.0,378.4 868.3,376.9 865.4,373.3 863.3,360.4 862.1,357.1 860.9,357.2 860.6,356.5 860.6,355.7 857.0,355.9 856.4,356.1 852.9,357.9 852.6,358.2 852.9,358.2 853.1,362.5 852.2,365.9 848.6,367.9 847.4,368.7 846.6,370.3 847.5,371.4 846.5,372.1z" fill="#d1e46f" stroke="#d1e46f" stroke-width="0.6" stroke-linejoin="round"/><path d="M872.1,380.6 872.0,380.3 869.8,380.3 869.3,379.2 868.9,379.3 870.0,381.4 872.0,380.8 872.0,380.8 872.4,380.3zM867.5,380.0 868.3,381.6 871.4,382.1 871.8,382.5 871.5,381.7 871.5,381.6 870.0,381.6 868.5,380.6 867.9,379.2 867.5,379.7z" fill="#cab4d2" stroke="#cab4d2" stroke-width="0.6" stroke-linejoin="round"/><path d="M861.4,352.9 860.7,355.0 860.5,355.0 860.6,356.5 860.9,357.2 862.1,357.1 863.3,360.4 865.4,373.3 868.3,376.9 869.0,378.4 867.9,379.2 868.5,380.6 870.0,381.6 871.5,381.6 872.0,380.8 870.0,381.4 868.9,379.3 869.3,379.2 869.8,380.3 872.0,380.3 872.1,380.6 872.4,380.3 873.1,380.1 875.3,380.1 876.0,380.3 878.6,382.9 882.1,385.7 885.8,387.9 889.9,389.3 891.3,389.3 891.4,389.3 891.4,389.3 891.8,389.3 891.7,389.7 891.8,389.2 893.0,388.7 893.9,389.0 895.8,390.8 899.9,392.2 905.7,392.8 906.6,389.9 906.8,389.4 907.6,388.9 908.4,389.2 908.5,389.6 908.9,389.0 909.3,385.7 907.2,382.5 906.8,381.3 908.4,381.0 908.7,379.8 908.3,379.7 907.6,379.4 907.0,378.9 906.6,377.1 905.5,376.2 904.0,371.8 902.9,367.4 904.0,364.8 904.3,362.2 905.3,361.7 904.1,360.2 904.3,358.9 902.1,356.7 898.5,354.8 894.3,353.5 886.7,354.8 886.1,358.2 885.9,358.2 885.7,356.3 885.7,356.7 882.9,357.4 878.8,357.1 875.0,354.9 874.7,351.5 874.0,350.9 874.3,351.2 872.2,351.7 872.0,350.6 871.2,348.1 869.3,348.5 867.0,347.7 866.3,346.9 865.7,346.7 862.1,347.8 861.9,347.7 861.4,347.8 861.7,348.8 861.1,348.7 860.9,348.5 860.6,346.8z" fill="#fbe165" stroke="#fbe165" stroke-width="0.6" stroke-linejoin="round"/><path d="M877.0,389.3 877.0,389.8 878.6,392.9 878.7,393.3 878.9,393.2 880.0,394.2 879.5,393.5 879.7,392.8 880.7,392.0 880.4,388.8 880.1,388.6 878.7,388.8 878.1,389.5 877.3,389.6z" fill="#a1cfc5" stroke="#a1cfc5" stroke-width="0.6" stroke-linejoin="round"/><path d="M881.0,395.5 882.6,398.8 885.7,400.0 888.8,400.3 888.8,399.9 890.0,400.0 890.7,395.7 892.9,392.9 892.6,392.0 893.2,393.8 892.3,390.9 891.8,390.3 891.8,390.6 891.3,391.1 885.6,394.3 882.0,395.5 881.3,395.5 880.4,394.7z" fill="#d1e46f" stroke="#d1e46f" stroke-width="0.6" stroke-linejoin="round"/><path d="M892.9,392.9 890.7,395.7 890.0,400.0 888.8,399.9 888.8,400.3 889.3,400.4 889.9,402.5 889.8,402.9 888.6,406.4 883.9,408.7 880.0,410.0 879.2,410.1 879.3,410.5 880.3,410.3 882.7,414.3 883.7,414.2 884.2,415.4 884.2,414.2 884.9,413.7 885.8,413.6 895.5,410.1 895.8,409.8 897.3,407.1 900.1,404.2 901.4,401.0 901.3,400.5 899.3,398.5 893.2,393.8 892.6,392.0z" fill="#fdae63" stroke="#fdae63" stroke-width="0.6" stroke-linejoin="round"/><path d="M809.7,505.3 809.3,505.4 808.6,505.0 805.7,504.3 804.5,504.3 802.9,505.4 797.3,504.7 788.6,504.3 782.9,503.3 778.2,504.3 778.1,503.0 778.2,504.9 779.3,508.7 782.1,513.6 784.6,518.5 786.4,524.3 788.5,530.0 790.7,534.6 790.6,534.2 790.1,533.2 790.7,534.3 795.0,536.4 798.9,535.7 799.1,530.0 799.3,530.0 799.2,528.9 799.6,528.8 800.2,528.8 799.7,527.9 799.1,526.0 798.9,523.6 799.6,517.1 801.1,516.4 801.1,512.1 801.5,510.1 801.9,507.2 810.0,507.1 809.4,506.0 811.0,505.6 811.0,505.6zM802.2,505.9 803.5,506.0 801.8,506.1z" fill="#d1e46f" stroke="#d1e46f" stroke-width="0.6" stroke-linejoin="round"/><path d="M814.1,505.7 812.6,505.3 811.4,505.7 811.0,505.6 809.4,506.0 810.0,507.1 801.9,507.2 801.5,510.1 801.1,512.1 801.1,516.4 799.6,517.1 798.9,523.6 799.1,526.0 799.7,527.9 800.2,528.8 802.1,529.0 802.8,530.3 805.5,528.0 808.6,526.4 812.8,526.8 815.0,525.0 816.9,522.3 820.3,519.6 822.1,517.1 819.3,515.0 815.0,509.3 813.6,507.6 813.4,506.8 814.1,505.8z" fill="#fdae63" stroke="#fdae63" stroke-width="0.6" stroke-linejoin="round"/><path d="M824.3,500.0 820.5,501.9 817.1,505.4 815.3,505.1 814.2,505.8 813.4,506.8 813.6,507.6 815.0,509.3 819.3,515.0 822.1,517.1 821.3,516.5 821.9,516.2 822.9,516.8 826.4,517.4 827.1,517.5 829.3,515.0 831.4,512.1 831.8,508.6 831.4,503.4 828.4,501.7 825.1,500.9 824.8,499.9 825.7,499.7z" fill="#a1cfc5" stroke="#a1cfc5" stroke-width="0.6" stroke-linejoin="round"/><path d="M848.9,487.0 848.3,487.0 845.0,488.3 836.8,488.3 836.9,488.7 836.0,488.1 836.6,489.0 837.3,493.1 838.8,496.3 839.9,497.5 838.8,503.3 838.2,503.0 837.9,503.6 836.1,502.1 835.0,499.3 833.6,496.4 833.2,496.4 832.7,495.2 832.8,494.8 832.3,496.1 830.3,496.1 826.2,498.0 825.7,499.7 824.8,499.9 825.1,500.9 828.4,501.7 831.4,503.4 831.8,508.6 831.4,512.1 829.3,515.0 827.1,517.5 828.0,516.5 828.1,516.6 828.4,517.0 827.9,517.9 829.6,526.4 829.7,526.7 830.3,530.7 832.1,531.4 832.5,530.2 832.5,530.4 832.8,528.9 833.2,528.4 835.7,526.5 839.4,524.2 840.7,520.6 840.1,516.5 838.2,513.9 838.0,513.1 838.5,511.1 838.9,510.5 842.2,507.9 850.0,502.6 852.8,499.5 852.9,499.1 852.9,494.3 852.2,488.7 852.0,488.5 849.7,488.5 849.1,488.3 848.8,487.7z" fill="#f5c2da" stroke="#f5c2da" stroke-width="0.6" stroke-linejoin="round"/><path d="M837.3,493.1 836.6,489.0 836.0,488.1 834.8,487.7 833.8,488.3 833.2,489.0 833.4,490.8 832.9,491.4 833.4,493.2 832.7,495.2 833.2,496.4 833.6,496.4 835.0,499.3 836.1,502.1 837.9,503.6 838.2,503.0 838.8,503.3 839.9,497.5 838.8,496.3z" fill="#fdae63" stroke="#fdae63" stroke-width="0.6" stroke-linejoin="round"/><path d="M821.9,516.2 821.3,516.5 822.1,517.1 820.3,519.6 816.9,522.3 815.0,525.0 812.8,526.8 808.6,526.4 805.5,528.0 802.8,530.3 802.1,529.0 799.6,528.8 799.2,528.9 799.3,530.0 799.1,530.0 798.9,535.7 795.0,536.4 790.7,534.3 790.1,533.2 790.6,534.2 793.5,547.1 794.2,552.1 795.5,554.4 796.0,554.7 800.1,554.7 804.4,553.6 810.1,553.3 814.2,552.2 817.9,550.0 822.2,546.4 828.6,540.1 831.4,535.8 832.5,530.2 832.1,531.4 830.3,530.7 830.3,530.8 831.4,531.2 831.3,531.4 830.3,531.0 827.6,531.4 827.2,528.3 829.4,527.9 829.4,526.6 829.7,526.7 829.6,526.4 827.9,517.9 828.4,517.0 828.1,516.6 828.0,516.5 827.1,517.5 822.9,516.8zM821.5,534.6 824.3,537.9 820.0,542.6 816.7,538.5z" fill="#cab4d2" stroke="#cab4d2" stroke-width="0.6" stroke-linejoin="round"/><path d="M816.7,538.5 820.0,542.6 824.3,537.9 821.5,534.6z" fill="#fdc55f" stroke="#fdc55f" stroke-width="0.6" stroke-linejoin="round"/><path d="M827.2,528.3 827.6,531.4 830.3,531.0 831.3,531.4 831.4,531.2 830.3,530.8 829.7,526.7 829.4,526.6 829.4,527.9z" fill="#a9db7b" stroke="#a9db7b" stroke-width="0.6" stroke-linejoin="round"/><path d="M870.1,524.2 877.9,498.7 876.5,492.9 874.3,490.1 871.4,493.5 868.7,497.6 868.3,497.9 863.0,500.6 860.7,504.1 860.7,510.6 859.3,515.6 859.2,520.6 860.6,524.9 863.4,527.4 863.8,527.5 867.3,527.1z" fill="#fdc55f" stroke="#fdc55f" stroke-width="0.6" stroke-linejoin="round"/><path d="M1004.1,441.7 1003.6,441.0 1003.4,440.9 1004.0,441.6 1005.3,445.4 1009.2,451.7 1011.0,454.3 1011.1,454.9 1013.8,456.7 1014.0,456.5 1014.9,454.8 1014.9,454.4 1012.1,446.7 1010.4,443.3 1010.1,443.1 1007.8,443.7 1007.1,443.6 1005.8,442.9 1005.4,442.4 1005.3,441.8 1005.5,441.0 1005.2,442.2zM1052.5,447.9 1053.1,445.6 1052.9,445.1 1050.4,443.1 1047.7,441.8 1047.2,441.8 1044.5,443.8 1041.6,446.7 1033.2,452.3 1028.5,453.9 1029.0,455.4 1029.6,456.7 1031.7,457.1 1036.0,455.3 1041.5,454.6 1042.9,449.7 1046.0,448.1 1049.6,448.9 1050.9,448.5 1050.7,448.6 1052.2,448.3z" fill="#cab4d2" stroke="#cab4d2" stroke-width="0.6" stroke-linejoin="round"/><path d="M1029.0,456.1 1028.6,456.6 1027.5,456.8 1027.4,459.4 1028.8,461.9 1029.5,465.7 1029.8,466.1 1031.8,466.8 1034.4,468.1 1037.1,467.6 1037.8,467.6 1040.2,468.9 1042.9,469.6 1043.4,469.5 1046.1,467.3 1050.3,459.7 1052.4,457.4 1051.0,455.2 1049.7,452.6 1049.6,449.7 1049.8,449.1 1050.9,448.5 1049.6,448.9 1046.0,448.1 1042.9,449.7 1041.5,454.6 1036.0,455.3 1031.7,457.1 1029.6,456.7 1029.0,455.4zM1068.9,464.4 1068.8,462.8 1066.7,462.8 1066.7,464.5 1068.7,464.6zM1060.1,473.0 1060.5,473.2 1063.1,473.8 1063.8,472.0 1063.7,471.5 1060.0,466.4 1059.8,465.5 1060.5,464.5 1061.1,464.4 1062.9,464.6 1063.3,464.4 1064.5,462.4 1061.9,461.0 1061.7,460.4 1061.9,459.7 1062.5,459.4 1066.8,458.1 1068.5,456.1 1068.8,453.9 1064.1,456.2 1063.5,456.3 1058.7,455.6 1055.5,456.6 1055.2,457.0 1054.9,458.8 1055.2,460.6 1055.0,461.3 1053.2,463.7 1052.4,466.5 1053.8,470.4 1054.6,474.2 1057.0,473.8 1056.9,471.2 1057.2,470.4 1058.0,470.1 1058.7,470.6zM1034.5,481.8 1038.8,482.8 1043.0,482.5 1043.8,481.7 1044.6,481.8 1045.4,482.8 1048.8,482.8 1051.4,482.6 1052.3,483.0 1052.6,484.0 1054.4,485.2 1057.4,485.3 1056.1,484.1 1055.7,483.4 1056.0,482.7 1056.6,482.3 1063.0,481.4 1063.2,481.2 1063.1,479.6 1058.8,479.2 1054.8,479.8 1054.3,480.5 1053.7,480.8 1048.7,479.6 1044.7,480.6 1043.9,480.4 1043.3,479.8 1036.1,477.4 1032.6,475.7 1027.6,475.9 1023.3,474.6 1020.0,475.0 1019.2,474.7 1018.9,473.8 1019.6,469.6 1020.8,466.1 1018.8,463.0 1016.0,460.9 1013.5,458.4 1013.2,457.6 1013.5,456.9 1013.8,456.7 1011.1,454.9 1010.9,455.6 1010.3,455.9 1009.6,455.7 1001.8,449.6 998.9,446.7 996.1,445.3 993.9,443.9 993.8,449.4 994.0,449.7 997.4,453.2 1000.2,456.7 1001.9,459.2 1002.0,460.2 1001.3,460.8 1000.3,461.0 1000.7,463.8 1002.4,463.5 1002.7,462.3 1003.4,462.0 1004.2,462.3 1006.7,465.3 1016.6,475.2 1017.5,476.0 1017.5,477.1 1017.6,477.2 1024.5,479.6 1029.5,481.0zM1022.4,466.1 1023.5,467.8 1025.3,466.7 1024.6,465.0zM1066.5,486.1 1066.8,485.8 1067.9,483.7 1067.9,483.7 1068.1,483.1 1067.3,483.1 1066.2,483.2 1063.9,485.3 1064.6,486.7zM1077.6,454.3 1076.0,452.5 1074.3,453.7 1074.1,454.1 1073.8,457.2 1074.0,457.6 1075.1,458.7 1075.9,460.9 1076.2,460.9 1077.3,459.8 1077.4,459.3 1076.9,457.1 1076.9,456.4 1077.7,454.9zM1083.0,467.0 1080.1,465.6 1076.7,466.0 1076.7,466.8 1076.4,467.4 1076.2,467.6 1076.9,467.9 1079.7,468.2 1082.8,469.2 1083.2,467.2zM1075.5,467.7 1073.0,466.7 1070.5,467.3 1070.3,467.6 1070.6,469.1 1070.8,469.3 1073.7,469.3 1074.0,469.1zM1096.9,465.8 1094.6,466.5 1094.0,466.4 1093.5,466.1 1092.6,464.7 1091.8,461.3 1091.4,460.9 1088.8,460.2 1086.1,460.6 1083.7,462.3 1083.6,462.6 1086.0,464.7 1087.4,466.8 1088.7,469.3 1089.1,469.6 1091.8,469.7 1094.7,470.4 1100.1,473.1 1102.0,474.9 1102.2,475.9 1101.6,478.2 1100.3,481.7 1101.8,481.0 1104.0,480.5 1105.0,480.7 1107.3,483.1 1107.6,483.1 1108.5,482.6 1108.7,482.4 1108.6,465.8 1108.3,465.5 1101.9,462.8 1101.5,462.8 1098.9,463.8zM1090.4,474.8 1091.0,475.1 1091.3,475.7 1091.7,477.7 1093.1,476.2 1093.2,475.8 1092.9,472.7 1092.5,472.5 1091.0,473.1 1090.1,473.0 1089.5,472.1 1088.3,472.3 1088.1,472.6 1088.5,475.2z" fill="#fbe165" stroke="#fbe165" stroke-width="0.6" stroke-linejoin="round"/><path d="M1109.5,482.4 1110.3,483.2 1114.0,483.1 1116.7,481.8 1119.2,479.5 1121.5,479.0 1121.8,478.6 1122.8,474.7 1121.8,470.5 1121.5,470.1 1117.5,468.1 1113.2,466.7 1110.4,466.0 1109.8,466.3 1109.1,466.3 1108.6,465.8 1108.7,482.4 1108.5,482.6z" fill="#a1cfc5" stroke="#a1cfc5" stroke-width="0.6" stroke-linejoin="round"/><path d="M1068.1,483.1 1067.9,483.7 1068.5,483.0 1069.9,483.1 1073.1,481.8 1074.5,480.3 1071.6,480.0 1068.3,481.6 1068.1,482.7 1067.3,483.1z" fill="#a1cfc5" stroke="#a1cfc5" stroke-width="0.6" stroke-linejoin="round"/><path d="M610.0,451.3 613.3,451.3 615.3,447.7 616.1,448.9 615.3,447.6 612.4,446.0 610.2,445.9 610.0,446.2 610.0,452.6z" fill="#fdae63" stroke="#fdae63" stroke-width="0.6" stroke-linejoin="round"/><path d="M923.1,602.5 925.0,607.0 928.8,605.6 929.0,605.3 927.5,602.0z" fill="#fbe165" stroke="#fbe165" stroke-width="0.6" stroke-linejoin="round"/><path d="M889.5,513.5 889.6,515.8 891.6,515.7 891.8,515.4 891.5,513.5z" fill="#fdae63" stroke="#fdae63" stroke-width="0.6" stroke-linejoin="round"/><path d="M826.7,285.7 822.1,285.7 820.6,286.3 817.4,286.3 815.5,288.3 814.3,290.9 813.2,291.8 812.4,293.4 808.5,295.4 808.6,295.6 808.2,301.3 809.2,302.9 809.9,302.6 811.0,302.5 811.4,302.8 817.1,303.1 825.7,304.6 827.1,302.4 827.4,301.7 828.0,301.5 829.4,298.6 831.5,297.1 830.4,296.0 827.4,290.2z" fill="#fdae63" stroke="#fdae63" stroke-width="0.6" stroke-linejoin="round"/><path d="M811.4,302.8 811.0,302.5 809.9,302.6 809.2,302.9 809.9,303.9 809.8,303.9 809.3,305.8 808.6,307.6 806.5,309.4 806.2,312.4 805.7,312.7 804.9,312.6 804.5,317.3 804.5,317.4 805.0,317.4 804.7,318.0 804.7,318.3 805.2,318.6 807.4,317.9 809.3,318.5 813.6,319.6 816.4,318.5 816.8,318.4 820.1,317.8 822.4,320.1 824.3,323.9 822.7,325.9 823.7,327.5 824.3,328.1 825.1,327.4 826.3,326.2 828.0,325.2 829.1,325.3 832.6,328.0 833.7,330.4 835.5,331.7 839.9,331.4 842.8,330.3 843.8,330.5 844.3,330.9 842.9,329.6 843.1,329.3 842.6,328.3 840.0,328.3 839.5,326.4 839.3,326.3 839.4,325.9 839.3,325.4 840.3,325.0 842.9,323.5 844.3,324.2 846.7,322.6 847.4,320.5 849.9,319.4 850.3,316.0 851.1,312.6 850.0,312.3 849.9,311.3 849.0,310.8 847.9,310.6 846.4,309.3 844.9,308.4 839.2,307.7 834.9,302.8 834.5,301.7 827.7,302.9 826.6,304.7 826.3,304.9 828.0,301.5 827.4,301.7 827.1,302.4 825.7,304.6 817.1,303.1z" fill="#f5c2da" stroke="#f5c2da" stroke-width="0.6" stroke-linejoin="round"/><path d="M824.3,323.9 822.4,320.1 820.1,317.8 816.8,318.4 818.6,318.1 818.9,318.4 818.2,318.5 820.7,322.4 822.7,325.9z" fill="#a9db7b" stroke="#a9db7b" stroke-width="0.6" stroke-linejoin="round"/><path d="M822.6,331.6 824.0,328.5 825.1,327.4 824.3,328.1 823.7,327.5 820.7,322.4 818.2,318.5 818.9,318.4 818.6,318.1 816.4,318.5 813.6,319.6 809.3,318.5 807.4,317.9 804.8,318.8 804.0,319.5 801.8,323.0 801.6,324.1 802.0,326.9 802.4,327.9 805.7,332.1 805.4,333.4 805.7,333.9 806.1,333.4 807.0,333.0 807.1,333.1 810.7,333.9 815.0,333.1 820.0,332.8 821.2,332.3 821.2,332.3z" fill="#cab4d2" stroke="#cab4d2" stroke-width="0.6" stroke-linejoin="round"/><path d="M816.7,342.7 816.5,343.3 816.9,343.2 816.6,342.0 820.7,341.2 820.6,340.7 820.7,341.2 821.9,341.1 821.0,340.9 820.2,340.0 820.1,339.1 821.1,336.2 820.3,333.8 820.3,333.0 821.2,332.3 820.0,332.8 815.0,333.1 810.7,333.9 807.1,333.1 807.0,333.0 806.1,333.4 805.6,334.2 805.3,335.5 806.2,337.1 806.1,337.6 804.9,337.9 805.2,340.2 806.4,341.8 806.2,341.9 807.4,343.2 810.7,343.6 814.3,343.2 814.0,343.8 814.3,343.4 814.5,342.4 815.5,342.0 816.2,342.1z" fill="#fbe165" stroke="#fbe165" stroke-width="0.6" stroke-linejoin="round"/><path d="M860.8,338.2 857.2,336.8 853.1,338.0 852.1,337.6 853.2,338.1 853.7,338.4 854.9,340.1 855.1,340.7 854.9,341.3 854.3,341.7 855.7,341.4 859.3,342.1 859.5,343.0 859.5,343.0 860.2,342.6 863.4,342.3 865.0,343.1 865.0,343.1 865.6,342.7 867.8,342.1 868.2,341.5 868.2,341.1 867.1,340.7 867.2,340.6 864.4,338.6z" fill="#a1cfc5" stroke="#a1cfc5" stroke-width="0.6" stroke-linejoin="round"/><path d="M862.1,347.8 865.7,346.7 864.8,346.9 864.6,346.5 865.0,346.4 864.5,345.4 864.5,344.2 864.8,343.3 865.0,343.1 865.0,343.1 863.4,342.3 860.2,342.6 859.5,343.0 860.1,344.8 860.1,346.1 860.5,346.5 860.9,348.5 861.1,348.7 861.7,348.8 861.4,347.8 861.9,347.7z" fill="#f5c2da" stroke="#f5c2da" stroke-width="0.6" stroke-linejoin="round"/><path d="M873.1,340.7 871.7,341.8 871.4,341.8 871.0,342.0 869.1,341.4 868.0,342.0 865.6,342.7 864.8,343.3 864.5,344.2 864.5,345.4 865.0,346.4 864.6,346.5 864.8,346.9 865.7,346.7 866.3,346.9 867.0,347.7 869.3,348.5 871.2,348.1 872.0,350.6 872.2,351.7 874.3,351.2 874.0,350.9 873.8,350.2 875.7,347.5 876.8,346.4 877.0,345.9 875.2,345.0 873.7,342.6 873.3,342.3 872.8,341.5 873.3,340.8z" fill="#fdc55f" stroke="#fdc55f" stroke-width="0.6" stroke-linejoin="round"/><path d="M887.7,341.3 885.0,339.2 884.0,339.7 883.6,340.2 883.9,340.1 884.5,340.7 884.4,341.6 886.4,341.0 887.1,343.5 885.0,344.2 884.0,341.9 883.5,342.6 882.8,345.8 882.9,346.2 884.5,348.8 885.6,351.6 885.9,355.7 885.7,356.3 885.9,358.2 886.1,358.2 886.7,354.8 894.3,353.5 898.5,354.8 902.1,356.7 904.3,358.9 904.1,360.2 905.3,361.7 906.7,360.9 907.5,362.0 909.5,361.3 912.9,358.9 916.4,356.7 917.1,355.7 917.6,355.0 917.8,354.7 911.2,350.5 908.3,347.6 905.5,344.1 902.7,342.0 900.2,340.5 897.8,338.2 895.2,340.2 892.2,343.1 892.2,342.7 891.0,342.7 890.9,342.4 892.1,342.4 889.8,342.3 888.6,341.0z" fill="#a1cfc5" stroke="#a1cfc5" stroke-width="0.6" stroke-linejoin="round"/><path d="M892.2,343.1 895.2,340.2 897.8,338.2 900.2,340.5 902.7,342.0 905.5,344.1 908.3,347.6 911.2,350.5 917.8,354.7 917.6,355.0 918.3,354.6 920.0,355.3 922.1,354.5 922.1,354.5 920.9,348.6 921.8,348.0 928.7,346.8 929.0,346.1 929.4,345.9 931.8,345.7 934.7,343.8 931.8,343.2 927.8,343.5 927.0,342.4 928.0,341.9 927.9,341.9 924.9,343.4 924.0,343.3 922.9,343.9 920.4,343.4 919.5,342.9 918.1,340.2 917.4,336.6 915.1,334.3 911.4,334.3 907.2,335.0 904.4,333.6 900.9,330.8 897.2,328.5 891.8,330.1 892.1,342.4 890.9,342.4 891.0,342.7 892.2,342.7z" fill="#fdc55f" stroke="#fdc55f" stroke-width="0.6" stroke-linejoin="round"/><path d="M952.4,337.9 951.5,338.8 948.6,338.0 943.6,338.0 940.0,336.5 936.3,337.5 932.7,339.6 929.1,340.4 928.5,341.6 927.0,342.4 927.8,343.5 931.8,343.2 934.7,343.8 931.8,345.7 929.4,345.9 929.0,346.1 928.7,346.8 929.9,346.5 931.3,346.5 930.0,347.4 935.7,347.4 937.3,346.9 939.1,348.0 942.5,346.8 943.3,345.2 944.4,344.8 947.3,343.1 950.2,342.0 951.4,340.2 952.0,339.9 953.1,338.5z" fill="#a9db7b" stroke="#a9db7b" stroke-width="0.6" stroke-linejoin="round"/><path d="M939.2,356.4 940.6,354.1 940.6,351.4 940.1,349.3 939.4,348.2 937.3,346.9 935.7,347.4 930.0,347.4 931.3,346.5 929.9,346.5 921.8,348.0 920.9,348.6 922.1,354.5 923.1,354.7 923.5,355.9 926.4,355.3 929.3,352.8 932.6,354.3 932.4,356.0 934.4,356.8 937.7,357.2z" fill="#f5c2da" stroke="#f5c2da" stroke-width="0.6" stroke-linejoin="round"/><path d="M904.0,364.8 902.9,367.4 904.0,371.8 905.5,376.2 906.6,377.1 907.0,378.9 907.6,379.4 908.3,379.7 911.6,380.3 912.9,380.0 916.7,378.6 917.7,378.4 917.9,378.1 918.3,377.9 922.9,372.9 923.8,372.1 926.1,369.2 928.6,365.6 930.4,362.1 931.1,358.1 932.1,358.8 932.6,354.3 929.3,352.8 926.4,355.3 923.5,355.9 923.1,354.7 922.1,354.5 920.0,355.3 918.3,354.6 917.6,355.0 916.4,356.7 912.9,358.9 909.5,361.3 907.5,362.0 906.7,360.9 904.3,362.2z" fill="#fdae63" stroke="#fdae63" stroke-width="0.6" stroke-linejoin="round"/><path d="M1115.8,339.9 1117.7,336.9 1118.3,336.4 1122.1,335.7 1122.1,332.2 1119.0,332.7 1114.6,331.5 1114.1,331.6 1112.1,333.7 1111.4,336.6 1112.0,339.1 1113.5,340.3 1114.0,341.0 1113.9,341.2 1114.3,340.7zM1112.3,342.1 1112.1,342.3 1111.7,346.5 1110.7,350.6 1109.5,354.0 1108.6,354.6 1101.5,354.9 1098.1,355.6 1097.7,356.0 1097.1,357.8 1097.1,360.5 1096.9,361.2 1096.3,361.5 1092.9,362.1 1088.4,362.6 1085.7,365.0 1083.0,367.6 1080.2,368.5 1079.9,368.8 1079.3,370.7 1081.1,372.0 1081.5,372.5 1082.7,375.5 1083.1,375.6 1085.1,374.2 1086.4,371.5 1088.0,369.4 1090.9,366.4 1094.4,365.0 1098.7,364.3 1101.2,363.2 1101.7,363.1 1105.9,363.5 1108.4,362.3 1108.7,362.0 1109.8,358.1 1112.2,352.2 1113.6,347.2 1114.0,342.4 1113.8,341.3 1113.7,341.8 1113.0,342.1z" fill="#fdae63" stroke="#fdae63" stroke-width="0.6" stroke-linejoin="round"/><path d="M781.3,437.2 778.3,440.1 776.2,441.1 774.5,441.5 771.5,444.8 770.5,448.0 769.1,448.1 770.3,448.4 770.7,449.1 770.7,451.2 770.8,451.6 772.3,453.1 772.9,453.6 778.1,453.4 778.1,453.5 778.6,453.4 781.1,453.4 781.3,453.5 781.4,453.2 788.0,453.3 789.1,450.8 789.3,450.7 787.2,447.6 785.4,443.6 786.5,441.3 788.6,439.2 788.1,438.0 788.6,438.9 788.8,438.9 787.8,436.1 788.6,433.4 786.3,431.9 785.6,431.3 785.3,429.7 784.9,429.5 785.0,430.0z" fill="#fdc55f" stroke="#fdc55f" stroke-width="0.6" stroke-linejoin="round"/><path d="M802.9,447.1 805.7,447.8 809.3,446.1 812.9,446.4 817.1,445.7 818.4,446.3 818.5,445.9 815.9,444.1 809.6,436.3 807.3,432.6 804.7,431.9 805.3,430.8 805.0,430.7 802.9,432.5 794.3,437.9 788.6,438.9 788.1,438.0 788.6,439.2 786.5,441.3 785.4,443.6 787.2,447.6 789.3,450.7 789.3,450.7 788.7,449.8 789.0,449.7 789.6,450.7 794.3,450.7 795.0,449.7 795.3,449.9 795.0,450.7 795.9,448.8 798.6,447.1z" fill="#a1cfc5" stroke="#a1cfc5" stroke-width="0.6" stroke-linejoin="round"/><path d="M841.7,421.9 841.3,423.3 841.4,424.3 839.7,427.7 837.6,431.3 835.8,434.8 833.7,437.7 832.8,439.4 835.8,441.6 837.1,445.0 836.8,444.2 837.1,444.0 837.5,445.0 840.0,445.0 843.6,446.4 847.9,448.6 851.4,449.3 853.9,448.1 853.9,448.7 854.3,448.6 855.7,448.2 861.4,445.7 864.8,443.3 869.1,439.1 869.2,438.9 868.0,438.3 862.9,435.7 858.6,433.0 857.3,431.9 855.7,430.7 854.9,427.7 851.9,424.1 849.5,422.3 845.0,421.4 843.9,422.3 842.3,421.5z" fill="#d1e46f" stroke="#d1e46f" stroke-width="0.6" stroke-linejoin="round"/><path d="M857.6,424.3 857.0,424.0 851.5,418.6 847.2,413.7 846.5,411.3 846.4,411.3 846.8,412.9 846.4,412.4 843.2,415.6 843.4,416.2 842.4,419.7 841.6,419.7 842.3,420.0 841.9,421.2 842.1,421.4 843.9,422.3 845.0,421.4 849.5,422.3 851.9,424.1 854.9,427.7 854.9,427.7 855.1,427.5 856.0,428.3 858.6,427.6 857.8,426.9 858.1,426.4 858.3,426.4 858.6,425.5 859.0,425.0 859.8,424.9 858.6,423.5 858.2,424.1z" fill="#fdae63" stroke="#fdae63" stroke-width="0.6" stroke-linejoin="round"/><path d="M856.0,428.3 855.1,427.5 854.9,427.7 855.7,430.7 857.3,431.9 857.3,431.9 857.4,430.6 859.3,429.6 859.2,429.2 859.2,429.2 859.4,430.5 859.0,428.0 858.2,426.8 858.3,426.4 858.1,426.4 857.8,426.9 858.6,427.6z" fill="#fdc55f" stroke="#fdc55f" stroke-width="0.6" stroke-linejoin="round"/><path d="M868.0,438.3 868.2,438.0 869.3,438.6 872.6,434.5 873.3,429.4 871.9,429.7 874.2,429.1 875.0,429.0 867.2,430.7 862.0,431.3 860.0,430.9 859.4,430.5 859.2,429.2 859.2,429.2 859.3,429.6 857.4,430.6 857.3,431.9 858.6,433.0 862.9,435.7z" fill="#a9db7b" stroke="#a9db7b" stroke-width="0.6" stroke-linejoin="round"/><path d="M873.3,429.4 872.6,434.5 869.3,438.6 868.2,438.0 868.0,438.3 869.2,438.9 869.1,439.1 864.8,443.3 861.4,445.7 855.7,448.2 854.3,448.6 855.1,448.4 855.2,448.7 855.0,450.0 853.6,452.1 853.6,452.9 854.6,464.4 855.8,463.4 854.4,464.6 857.2,462.1 865.8,452.2 874.3,440.7 877.9,435.1 879.9,430.3 879.9,429.8 878.8,428.4 878.3,428.2 871.9,429.7z" fill="#f5c2da" stroke="#f5c2da" stroke-width="0.6" stroke-linejoin="round"/><path d="M835.6,448.2 836.1,447.8 835.7,448.5 837.8,451.7 837.1,455.1 835.3,458.7 835.2,459.4 835.7,461.4 836.2,461.7 836.0,462.0 835.7,461.8 846.3,468.8 849.3,470.4 849.7,470.0 850.0,470.2 850.1,469.2 854.4,464.6 855.8,463.4 854.6,464.4 853.6,452.9 853.6,452.1 855.0,450.0 855.2,448.7 855.1,448.4 853.9,448.7 853.9,448.1 851.4,449.3 847.9,448.6 843.6,446.4 840.0,445.0 837.5,445.0 837.1,444.0 836.8,444.2 837.1,445.0 836.6,445.7 836.8,446.0z" fill="#a1cfc5" stroke="#a1cfc5" stroke-width="0.6" stroke-linejoin="round"/><path d="M835.1,447.8 831.4,449.7 827.6,449.3 827.5,452.1 826.9,454.2 825.1,458.5 825.3,461.3 825.3,461.4 825.6,461.3 825.7,462.1 827.3,462.0 827.5,462.5 828.6,462.1 835.7,461.8 836.0,462.0 836.2,461.7 835.7,461.4 835.2,459.4 835.3,458.7 837.1,455.1 837.8,451.7 835.7,448.5 836.1,447.8 835.5,448.3z" fill="#fdc55f" stroke="#fdc55f" stroke-width="0.6" stroke-linejoin="round"/><path d="M789.0,449.7 788.7,449.8 789.3,450.7 789.1,450.8 788.0,453.3 781.4,453.2 781.3,453.5 782.1,453.8 782.6,454.7 782.8,455.5 783.6,455.5 784.6,455.9 785.1,456.7 784.6,458.6 785.0,461.4 784.8,462.1 785.0,463.1 784.6,463.2 784.3,464.3 782.1,465.7 781.7,465.7 781.6,466.0 779.1,466.0 777.9,468.6 778.7,469.5 779.3,470.1 780.8,471.0 781.0,471.4 781.5,471.5 781.5,471.7 784.7,470.3 789.1,469.6 792.4,461.6 793.8,458.7 795.3,454.3 794.8,452.0 795.0,450.7 795.3,449.9 795.0,449.7 794.3,450.7 789.6,450.7z" fill="#f5c2da" stroke="#f5c2da" stroke-width="0.6" stroke-linejoin="round"/><path d="M785.0,463.1 784.8,462.1 785.0,461.4 784.6,458.6 785.1,456.7 784.6,455.9 783.6,455.5 782.8,455.5 782.6,454.7 782.1,453.8 781.1,453.4 778.6,453.4 778.1,453.5 778.4,454.1 778.4,455.6 777.9,457.1 772.9,457.1 772.4,457.6 773.1,456.7 770.9,459.4 770.8,459.9 772.1,462.8 774.3,465.8 777.3,468.5 778.0,468.8 778.7,469.5 777.9,468.6 779.1,466.0 781.6,466.0 781.7,465.7 782.1,465.7 784.3,464.3 784.6,463.2z" fill="#d1e46f" stroke="#d1e46f" stroke-width="0.6" stroke-linejoin="round"/><path d="M772.4,457.6 772.9,457.1 777.9,457.1 778.4,455.6 778.4,454.1 778.1,453.4 772.9,453.6 772.3,453.1 773.0,453.8 773.2,454.3 773.1,456.7z" fill="#fdae63" stroke="#fdae63" stroke-width="0.6" stroke-linejoin="round"/><path d="M825.3,461.4 824.3,462.8 823.6,463.0 823.9,465.7 824.0,464.8 824.1,465.4 824.4,465.3 824.2,466.1 824.3,465.6 826.4,465.2 826.4,462.8 827.5,462.5 827.3,462.0 825.7,462.1 825.6,461.3z" fill="#fdae63" stroke="#fdae63" stroke-width="0.6" stroke-linejoin="round"/><path d="M823.7,469.5 825.9,469.2 826.0,466.0 824.2,466.1 824.4,465.3 824.1,465.4 824.0,464.8 823.9,466.1 823.2,466.2z" fill="#fbe165" stroke="#fbe165" stroke-width="0.6" stroke-linejoin="round"/><path d="M781.0,471.4 781.2,471.7 781.0,472.4 780.4,472.9 778.8,473.1 778.6,473.4 779.7,476.6 779.4,475.3 781.4,474.9 781.4,474.6 782.6,474.3 782.4,473.2 782.1,473.2 781.5,471.5z" fill="#cab4d2" stroke="#cab4d2" stroke-width="0.6" stroke-linejoin="round"/><path d="M724.9,387.6 718.3,388.3 716.2,395.0 715.9,395.0 714.1,397.6 713.6,399.0 712.7,399.7 711.3,402.2 704.6,402.5 704.8,401.2 704.6,402.3 704.3,403.1 704.3,404.8 704.8,405.6 705.3,408.5 705.7,413.4 704.3,418.4 704.9,416.1 705.0,416.1 704.3,418.6 704.8,417.6 707.8,416.1 709.1,416.3 710.0,416.1 710.7,416.4 711.5,416.5 714.8,418.7 716.4,420.0 716.9,419.8 717.3,419.6 718.6,418.9 725.7,418.2 732.9,417.9 732.6,393.2 732.9,393.3 732.9,392.9 731.8,392.3 732.8,392.1 730.1,390.8 728.8,385.2z" fill="#fdc55f" stroke="#fdc55f" stroke-width="0.6" stroke-linejoin="round"/><path d="M732.9,417.9 725.7,418.2 718.6,418.9 717.3,419.6 718.0,420.4 718.3,421.0 719.4,424.5 719.4,425.5 719.3,425.8 720.3,426.0 720.7,427.1 727.1,428.6 728.5,431.1 728.7,431.3 728.9,431.8 732.9,431.4 733.2,430.7 733.5,430.7 733.4,430.3 734.3,428.6 737.7,427.9 739.3,424.6 742.9,423.6 746.4,421.1 748.7,420.0 749.1,420.0 749.5,419.5 751.4,418.6 757.2,417.2 757.6,409.8 756.7,409.3 757.3,408.5 758.0,408.2 758.6,408.6 758.6,408.6 751.4,404.3 744.3,398.6 739.2,395.0 738.7,395.0 737.3,394.0 735.4,393.7 733.8,392.5 732.8,392.1 731.8,392.3 732.9,392.9 732.9,393.3 732.6,393.2z" fill="#cab4d2" stroke="#cab4d2" stroke-width="0.6" stroke-linejoin="round"/><path d="M787.4,399.2 787.3,399.0 778.5,397.1 769.8,402.9 768.0,404.6 761.7,408.2 758.6,408.6 758.0,408.2 757.3,408.5 756.7,409.3 757.6,409.8 757.2,417.2 751.4,418.6 749.5,419.5 749.1,420.0 750.2,420.2 750.8,420.5 750.0,421.5 754.5,426.8 756.4,426.6 757.5,427.0 757.4,428.1 757.5,426.8 758.0,426.7 759.3,425.2 760.4,424.3 765.7,424.6 772.1,426.1 779.3,424.6 784.7,425.0 783.9,421.5 786.1,418.6 788.2,414.3 789.2,408.6 789.2,402.1 787.9,400.0 787.9,399.3 788.8,398.9 788.6,398.6z" fill="#d1e46f" stroke="#d1e46f" stroke-width="0.6" stroke-linejoin="round"/><path d="M707.8,416.1 704.8,417.6 704.3,418.6 705.0,416.1 704.9,416.1 704.3,418.4 704.2,419.3 703.5,420.9 704.3,425.1 706.2,427.4 706.4,427.5 711.6,427.5 711.8,427.5 712.3,427.4 713.1,427.3 715.0,427.1 717.5,426.1 717.7,425.6 718.0,425.6 719.3,425.8 719.4,425.5 719.4,424.5 718.3,421.0 718.0,420.4 717.3,419.6 716.4,420.0 714.8,418.7 711.5,416.5 710.7,416.4 710.0,416.1 709.1,416.3zM706.0,427.0 704.5,425.4 704.5,425.3 706.4,427.5 706.4,427.5 706.2,427.4zM705.9,426.2 705.8,423.6 713.1,423.5 713.3,426.0z" fill="#d1e46f" stroke="#d1e46f" stroke-width="0.6" stroke-linejoin="round"/><path d="M705.9,426.2 713.3,426.0 713.1,423.5 705.8,423.6z" fill="#eef3c6" stroke="#eef3c6" stroke-width="0.6" stroke-linejoin="round"/><path d="M711.6,427.5 706.4,427.5 707.2,428.0 708.1,429.5 709.1,430.0 709.1,430.0 710.0,430.4 712.1,428.9 711.4,427.7 711.8,427.5z" fill="#fdae63" stroke="#fdae63" stroke-width="0.6" stroke-linejoin="round"/><path d="M727.1,428.6 720.7,427.1 720.3,426.0 718.0,425.6 717.7,425.6 717.5,426.1 715.0,427.1 711.8,427.5 711.4,427.7 712.1,428.9 710.0,430.4 709.1,430.0 710.3,430.7 711.4,432.2 712.9,433.7 714.2,435.7 713.5,434.5 714.2,435.7 715.7,433.6 718.6,432.9 720.7,433.4 721.5,434.3 721.9,435.6 721.9,435.6 722.9,436.0 723.9,437.0 724.3,438.6 725.5,438.8 726.4,438.9 727.0,437.4 727.2,435.3 727.7,434.3 727.2,432.4 727.5,431.8 728.5,431.1z" fill="#f5c2da" stroke="#f5c2da" stroke-width="0.6" stroke-linejoin="round"/><path d="M721.9,435.6 721.5,434.3 720.7,433.4 718.6,432.9 715.7,433.6 714.2,435.7 713.5,434.5 714.2,435.7 714.4,436.4 715.9,439.5 716.2,439.8 717.2,440.1 718.2,440.4 720.0,438.2 720.2,436.4 720.7,436.0 721.8,435.5 721.9,435.6z" fill="#a1cfc5" stroke="#a1cfc5" stroke-width="0.6" stroke-linejoin="round"/><path d="M723.9,437.0 722.9,436.0 721.8,435.5 720.7,436.0 720.2,436.4 720.0,438.2 718.2,440.4 717.2,440.1 718.0,440.4 720.0,442.6 726.3,446.4 728.7,447.1 728.9,447.1 728.6,443.6 725.7,441.4 725.2,440.8 725.5,438.8 724.3,438.6zM727.7,446.8 728.9,447.1 728.7,447.1z" fill="#fbe165" stroke="#fbe165" stroke-width="0.6" stroke-linejoin="round"/><path d="M733.2,430.7 732.9,431.4 728.9,431.8 728.5,431.1 727.5,431.8 727.2,432.4 727.7,434.3 727.2,435.3 727.0,437.4 726.4,438.9 725.5,438.8 725.2,440.8 725.7,441.4 728.6,443.6 728.9,447.1 731.4,447.2 739.1,446.0 740.4,445.7 740.0,441.4 741.1,437.9 740.3,435.4 740.0,434.3 739.5,434.2 735.7,433.6 734.0,432.7 733.5,430.7z" fill="#d1e46f" stroke="#d1e46f" stroke-width="0.6" stroke-linejoin="round"/><path d="M750.0,421.5 750.8,420.5 750.2,420.2 748.7,420.0 746.4,421.1 742.9,423.6 739.3,424.6 737.7,427.9 734.3,428.6 733.4,430.3 734.0,432.7 735.7,433.6 739.5,434.2 739.5,433.8 740.0,433.9 740.6,431.3 740.5,430.8 744.3,430.4 749.3,430.0 750.1,429.5 750.2,429.6 750.7,429.1 754.3,427.0 753.7,426.1 754.3,426.8 754.5,426.8z" fill="#fbe165" stroke="#fbe165" stroke-width="0.6" stroke-linejoin="round"/><path d="M750.1,429.5 749.3,430.0 744.3,430.4 740.5,430.8 740.6,431.3 740.0,433.9 739.5,433.8 739.5,434.2 740.0,434.3 741.1,437.9 740.0,441.4 740.4,445.7 739.1,446.0 740.0,445.8 742.7,447.1 743.1,447.1 747.2,445.7 751.2,443.1 749.6,444.1 750.4,443.5 749.3,433.3 749.5,433.3 749.3,432.1 749.6,432.0 750.1,432.0 749.9,431.2 750.2,429.7 750.2,429.6z" fill="#f5c2da" stroke="#f5c2da" stroke-width="0.6" stroke-linejoin="round"/><path d="M749.6,432.0 749.3,432.1 749.5,433.3 749.3,433.3 750.4,443.5 749.6,444.1 751.2,443.1 751.9,443.0 751.3,443.1 752.1,442.9 751.4,433.6 750.6,433.6 750.1,432.0z" fill="#cab4d2" stroke="#cab4d2" stroke-width="0.6" stroke-linejoin="round"/><path d="M755.4,434.6 757.1,432.5 757.5,427.0 756.4,426.6 754.3,426.8 753.7,426.1 754.3,427.0 750.7,429.1 750.2,429.7 749.9,431.2 750.6,433.6 751.4,433.6 752.1,442.9 751.3,443.1 751.9,443.0 753.1,443.2 755.1,442.9 756.1,443.3 756.2,443.1 755.0,442.9z" fill="#fdae63" stroke="#fdae63" stroke-width="0.6" stroke-linejoin="round"/><path d="M615.1,448.1 613.3,451.3 610.5,451.3M705.0,417.5 707.8,416.1 709.1,416.3 710.0,416.1 710.7,416.4 711.5,416.5 714.8,418.7 716.4,420.0 716.9,419.8 717.3,419.6M705.1,402.5 711.3,402.2 712.7,399.7 713.6,399.0 714.1,397.6 715.9,395.0 716.2,395.0 718.3,388.3 719.0,388.2M705.9,426.1 705.8,423.6 713.1,423.5 713.3,426.0 705.9,426.2M707.3,427.5 711.6,427.5 711.8,427.5M710.3,430.1 712.1,428.9 711.4,427.7 711.8,427.5M711.8,427.5 712.3,427.4 713.1,427.3 715.0,427.1 717.5,426.1 717.7,425.6 718.0,425.6 719.3,425.8M714.5,435.3 715.7,433.6 718.6,432.9 720.7,433.4 721.5,434.3 721.9,435.6 721.9,435.6M717.3,419.6 718.0,420.4 718.3,421.0 719.4,424.5 719.4,425.5 719.3,425.8M717.3,419.6 718.6,418.9 725.7,418.2 732.9,417.9 732.6,393.2 732.9,393.3 732.9,392.9 731.8,392.3 732.8,392.1M718.5,440.1 720.0,438.2 720.2,436.4 720.7,436.0 721.8,435.5 721.9,435.6M719.0,388.2 719.0,386.9 725.3,386.1 725.3,387.3M719.0,388.2 724.9,387.6 725.3,387.3M719.3,425.8 720.3,426.0 720.7,427.1 727.1,428.6 728.5,431.1M721.9,435.6 722.9,436.0 723.9,437.0 724.3,438.6 725.5,438.8M725.3,387.3 728.7,385.3M725.5,438.8 726.4,438.9 727.0,437.4 727.2,435.3 727.7,434.3 727.2,432.4 727.5,431.8 728.5,431.1M728.9,446.6 728.6,443.6 725.7,441.4 725.2,440.8 725.5,438.8M726.1,340.6 728.6,340.3 732.1,341.0 729.9,348.9 729.3,352.4 730.0,355.1M728.5,431.1 728.7,431.3 728.9,431.8 732.9,431.4 733.2,430.7 733.5,430.7M742.8,362.8 744.6,367.3 745.7,371.9 742.9,373.1 739.5,373.8 738.8,375.5 734.4,377.7 730.2,380.5 727.9,382.8 728.7,385.3M728.9,385.9 730.1,390.8 732.8,392.1M729.7,289.6 729.0,292.2 730.8,293.7 731.8,293.8 732.8,293.7M732.8,392.1 733.8,392.5 734.5,392.9 735.4,393.7 737.3,394.0 738.7,395.0 739.2,395.0 744.3,398.6 751.4,404.3 758.6,408.6M739.5,434.2 735.7,433.6 734.0,432.7 733.5,430.7M733.5,430.7 733.4,430.3 734.3,428.6 737.7,427.9 739.3,424.6 742.9,423.6 746.4,421.1 748.7,420.0 749.1,420.0M734.0,360.4 734.3,360.6 735.7,359.6 735.7,359.6M740.3,445.5 740.0,441.4 741.1,437.9 740.3,435.4 740.0,434.3 739.5,434.2M739.5,434.2 739.5,433.8 740.0,433.9 740.6,431.3 740.5,430.8 744.3,430.4 749.3,430.0 750.1,429.5 750.2,429.6M744.3,334.3 744.5,334.3 745.4,335.7 748.6,336.8 756.3,338.2 756.4,338.2M749.1,420.0 750.2,420.2 750.8,420.5 750.0,421.5 754.5,426.8M749.1,420.0 749.5,419.5 751.4,418.6 757.2,417.2 757.6,409.8 756.7,409.3 757.3,408.5 758.0,408.2 758.6,408.6 758.6,408.6M752.1,442.5 751.4,433.6 750.6,433.6 750.1,432.0M750.4,443.1 749.3,433.3 749.5,433.3 749.3,432.1 749.6,432.0 750.1,432.0M750.1,432.0 749.9,431.2 750.2,429.7 750.2,429.6M750.2,429.6 750.7,429.1 754.3,427.0 753.7,426.1 754.3,426.8 754.5,426.8M754.5,426.8 756.4,426.6 757.5,427.0M757.5,427.0 757.4,428.1 757.1,432.5 755.4,434.6 755.0,442.4M756.4,306.3 756.4,307.0 758.6,309.1 760.7,310.9 763.2,311.6 763.1,311.0 764.1,311.4M784.2,424.9 779.3,424.6 772.1,426.1 765.7,424.6 760.4,424.3 759.3,425.2 758.0,426.7 757.5,426.8 757.5,427.0M758.4,304.3 760.0,304.9 761.2,304.7 762.5,305.3M758.6,408.6 761.7,408.2 768.0,404.6 769.8,402.9 778.2,397.3M764.1,311.4 763.6,310.7 762.5,305.3M762.5,305.3 762.4,304.6 762.9,304.5 763.6,302.7 765.6,301.5 766.2,300.8 766.5,299.6 766.5,297.9 766.0,297.2M764.1,311.4 766.6,312.6 767.7,314.5 768.1,314.7 768.9,316.4 768.8,316.6 769.9,317.8 769.6,318.8M765.9,332.2 765.0,330.0 765.7,327.1 765.0,326.6 766.0,325.6 766.3,325.5M769.6,318.8 769.4,319.7 769.0,320.5 768.6,320.6 765.7,322.7 766.1,324.0 765.6,324.5 765.5,324.9 766.3,325.5M766.3,325.5 767.1,325.3 768.6,325.6 771.4,324.9 773.6,323.4 773.5,323.3 774.9,322.6M769.6,318.8 770.9,318.7 772.9,319.6 773.2,319.9M772.2,377.1 772.2,377.1 772.2,377.0 771.9,377.0 771.1,372.5 769.0,369.0 767.5,366.0 769.4,361.6 770.2,358.2M770.5,447.9 771.5,444.8 774.5,441.5 776.2,441.1 778.3,440.1 781.3,437.2 785.0,430.0 784.9,429.5 785.3,429.7M771.2,342.6 772.1,342.8M771.9,289.3 775.4,290.1 776.1,290.5 777.2,291.6 777.6,290.9 778.6,291.3 778.9,290.6M778.2,397.3 775.3,395.3 773.0,395.3 772.2,390.3 773.6,386.7 772.9,381.0 772.2,377.1M778.4,370.2 777.0,372.6 775.0,374.0 774.2,377.0 772.2,377.1M773.2,319.9 774.8,322.4M773.2,319.9 773.3,319.7 774.1,320.1 777.1,318.4 781.4,316.3 781.3,315.9M773.4,453.5 778.1,453.4 778.1,453.5M778.1,453.5 778.4,454.1 778.4,455.6 777.9,457.1 773.5,457.1M775.0,322.6 775.6,322.3 778.4,322.0 780.0,322.4 783.7,323.3 784.4,323.6M775.8,270.4 776.8,269.9 777.3,268.8M781.3,453.5 782.1,453.8 782.6,454.7 782.8,455.5 783.6,455.5 784.6,455.9 785.1,456.7 784.6,458.6 785.0,461.4 784.8,462.1 785.0,463.1 784.6,463.2 784.3,464.3 782.1,465.7 781.7,465.7 781.6,466.0 779.1,466.0 778.0,468.2M778.1,453.5 778.6,453.4 781.1,453.4 781.3,453.5M778.2,397.3 778.5,397.1 787.3,399.0 787.4,399.2 788.6,398.6M778.7,504.2 782.9,503.3 788.6,504.3 797.3,504.7 802.9,505.4 804.1,504.6 804.5,504.3 805.4,504.3M782.4,473.2 782.6,474.3 781.4,474.6 781.4,474.9 779.8,475.2M780.0,284.9 781.2,287.9M781.3,453.5 781.4,453.2 788.0,453.3 789.1,450.8 789.3,450.7M781.3,315.9 780.3,312.5 778.9,309.7 785.7,307.0 785.4,305.9M781.3,315.9 781.2,315.4 783.2,315.0 785.0,315.9 789.3,315.6 791.1,315.2 791.8,315.5M781.6,472.0 782.0,472.8 782.1,473.2 782.4,473.2M795.0,450.7 794.8,452.0 795.3,454.3 793.8,458.7 792.4,461.6 789.1,469.6 784.7,470.3 781.7,471.7M782.4,473.2 785.0,473.6 788.6,474.3 788.9,474.5 790.9,474.7 793.1,478.6 797.1,480.0 798.8,478.6 802.2,479.0 804.5,478.5 804.7,479.2 806.0,479.4 806.0,484.3 805.7,484.3 806.0,485.5 808.8,487.2 809.2,487.3M783.8,326.9 784.1,325.8 783.9,325.2 782.9,324.6 783.7,323.9 784.4,323.6M785.4,305.9 785.0,304.1 784.6,298.4 783.9,294.3M788.6,398.6 788.8,398.9 787.9,399.3 787.9,400.0 789.2,402.1 789.2,408.6 788.2,414.3 786.1,418.6 783.9,421.5 784.7,425.0 784.2,424.9M784.2,424.9 784.7,427.3 785.0,427.9 785.3,429.7M784.4,323.6 787.3,322.4 789.0,322.8 789.4,323.2M785.3,429.7 785.3,429.8 785.6,431.3 786.3,431.9 788.6,433.4 787.8,436.1 788.8,438.9M785.4,305.9 786.1,305.9 786.4,307.3 789.4,308.9 792.9,309.9 796.5,312.7M787.6,327.4 789.3,325.4 788.6,324.7 788.9,324.5 790.3,324.2M788.6,398.6 790.0,397.9 790.5,398.1 790.7,398.0 798.7,401.4 808.6,407.1 809.8,406.8 809.8,406.9M789.3,450.7 787.2,447.6 785.4,443.6 786.5,441.3 788.6,439.2 788.1,438.0 788.6,438.9 788.8,438.9M788.8,438.9 789.3,438.8 789.8,438.7 790.0,438.7 794.3,437.9 802.9,432.5 803.2,432.2 804.5,431.0 805.0,430.7M789.3,450.7 789.3,450.7 788.7,449.8 789.0,449.7 789.6,450.7 794.3,450.7 795.0,449.7 795.3,449.9 795.0,450.7M789.4,323.2 790.3,324.2M789.4,323.2 789.3,321.9 790.0,320.8 791.1,319.9 791.1,319.5 792.9,318.5M790.3,324.2 791.5,323.9 792.1,324.9 795.7,325.6 797.6,324.9 798.3,325.5M791.2,534.5 795.0,536.4 798.9,535.7 799.1,530.0 799.3,530.0 799.2,528.9 799.6,528.8 800.2,528.8M791.8,315.5 791.9,315.5 792.8,316.1 793.0,317.2 792.9,318.5M791.8,315.5 791.9,315.0 792.9,314.9 796.1,312.7 795.4,312.2 795.6,312.1 796.4,312.7 796.5,312.7M792.9,318.5 794.4,317.7 795.7,318.4 800.0,317.0 804.3,316.3 804.4,315.8 804.6,315.8M793.2,335.1 790.1,332.0 788.7,330.0 790.1,330.1 790.0,330.0 792.1,328.9 792.8,328.9 796.5,329.1 796.6,329.2M818.5,445.9 818.4,446.3 817.1,445.7 812.9,446.4 809.3,446.1 805.7,447.8 802.9,447.1 798.6,447.1 795.9,448.8 795.0,450.7M795.0,336.1 795.0,336.1 796.0,336.6 796.5,336.4 796.8,335.0 797.1,334.9M797.1,334.9 796.9,334.6 797.1,333.6 796.8,332.1 797.0,330.8 796.6,329.2M796.6,329.2 796.6,328.8 797.6,327.4 797.5,326.9 796.6,326.2 797.7,325.6 798.3,325.5M797.1,312.5 798.0,312.2 800.2,312.9 804.5,312.5 804.9,312.7M797.1,334.9 798.1,334.6 798.7,334.6 799.3,335.7 800.2,336.0 800.3,336.2M797.9,339.1 799.3,338.2 799.1,337.8 799.5,337.8M798.3,325.5 798.9,325.4 801.2,325.2M798.9,291.0 798.9,291.0 805.1,291.3M799.5,337.8 799.8,336.6 800.3,336.2M799.5,337.8 799.7,337.7 800.6,338.4 801.3,339.5M799.6,346.1 801.1,344.3 801.0,344.0M800.2,528.8 802.1,529.0 802.8,530.3 805.5,528.0 808.6,526.4 812.8,526.8 815.0,525.0 816.9,522.3 820.3,519.6 822.1,517.1M800.2,528.8 799.7,527.9 799.1,526.0 798.9,523.6 799.6,517.1 801.1,516.4 801.1,512.1 801.5,510.1 801.9,507.2 810.0,507.1 809.4,506.0 811.0,505.6M800.3,336.2 800.5,336.1 801.4,336.4 802.1,337.0 803.1,336.8 803.3,338.0 803.6,338.2 804.6,338.0 804.7,338.5M801.0,344.0 800.5,340.7 800.9,339.7 801.3,339.5M801.0,344.0 800.9,343.2 801.8,342.7 802.1,342.6 802.1,342.9 804.3,343.2 806.2,341.9M801.2,325.2 801.7,324.7M801.8,325.4 801.3,325.2 801.2,325.2M801.3,339.5 801.4,339.4 801.4,339.6 803.2,339.3 803.1,338.8 804.6,338.4 804.7,338.5M801.7,324.7 801.8,325.4M801.7,324.7 801.6,324.1 801.8,323.0 804.0,319.5 804.8,318.8 805.2,318.6M805.7,333.9 805.4,333.4 805.7,332.1 802.4,327.9 802.0,326.9 801.8,325.4M805.1,291.3 805.4,290.2 802.9,289.2M814.9,285.5 814.3,285.4 813.6,284.1 807.1,284.1 803.5,285.4M805.2,318.6 804.7,318.3 804.7,318.0 805.0,317.4 804.5,317.4 804.5,317.3 804.6,315.8M804.6,315.8 804.9,312.7M804.9,312.7 804.9,312.6 805.7,312.7 806.2,312.4 806.5,309.4 808.6,307.6 809.3,305.8 809.8,303.9 809.9,303.9 809.2,302.9M805.0,430.7 805.3,430.8 804.7,431.9 807.3,432.6 809.6,436.3 815.9,444.1 818.5,445.9M805.0,430.7 805.1,430.5 805.4,430.0 804.3,427.1 804.8,426.0 804.0,422.8 805.4,420.9 805.4,419.7 806.4,419.7 808.3,417.3 808.6,407.4 807.5,406.8 807.6,406.6 808.6,407.1 809.8,406.9M806.2,341.9 806.4,341.8 806.3,341.6 805.2,340.2 805.0,338.6M805.0,338.6 804.9,337.9 806.1,337.6 806.2,337.1 805.3,335.5 805.6,334.2 805.7,333.9M809.8,294.7 808.1,294.3 807.4,293.8 805.0,291.5 805.1,291.3M805.2,318.6 807.4,317.9 809.3,318.5 813.6,319.6 816.4,318.5 816.8,318.4M805.4,276.4 806.9,275.5 807.4,275.4 808.4,276.0 808.7,276.3M805.4,504.3 804.7,500.7 804.8,499.4 804.6,498.6 805.0,493.2 805.9,493.1 809.0,491.4 808.6,488.6 808.6,488.1 808.9,487.4 809.2,487.3M805.7,504.3 808.6,505.0 809.3,505.4 809.7,505.3 811.0,505.6M805.7,333.9 806.1,333.4 807.0,333.0 807.1,333.1 810.7,333.9 815.0,333.1 819.9,332.8M813.8,343.3 810.7,343.6 807.4,343.2 806.2,341.9M809.4,276.5 809.1,276.9 808.7,276.3M808.7,276.3 808.7,276.3 809.4,276.5M809.2,487.3 809.5,487.4 810.2,487.5 813.1,488.3 821.1,488.3 821.1,482.7 824.4,481.0 824.4,480.9 824.5,480.8M809.2,302.9 808.2,301.3 808.6,295.6 808.5,295.4 809.8,294.7M809.2,302.9 809.9,302.6 811.0,302.5 811.4,302.8 817.1,303.1 825.7,304.6 827.1,302.4 827.4,301.7 828.0,301.5M809.4,276.5 810.4,275.2 814.9,276.4 814.9,276.7M809.8,406.9 811.0,406.6 811.5,406.2 811.9,401.8 812.7,401.8M809.8,294.7 812.4,293.4 813.2,291.8 814.3,290.9 815.5,288.3 817.0,286.7M811.0,505.6 811.4,505.7 812.6,505.3 814.1,505.7 814.1,505.8M812.7,401.8 812.7,401.2 812.4,401.2 812.0,374.0 812.5,374.0 812.6,373.8M842.9,401.6 841.4,401.7 812.7,402.1 812.7,401.8M822.1,517.1 819.3,515.0 815.0,509.3 813.6,507.6 813.4,506.8 814.1,505.8M814.1,505.8 814.2,505.8 815.3,505.1 817.1,505.4 820.5,501.9 824.3,500.0 824.8,499.9M815.0,268.0 819.6,268.0 819.2,271.3 817.3,277.4 814.9,276.7M814.9,276.7 814.9,276.8 817.3,277.5 819.6,281.2 819.6,285.2 814.9,284.2 814.9,285.5M814.9,285.5 814.9,285.7 815.2,286.3 816.7,286.3 817.0,286.7M820.6,341.3 816.7,342.0M816.8,318.4 820.1,317.8 822.4,320.1 824.3,323.9 822.7,325.9M816.8,318.4 818.6,318.1 818.9,318.4 818.2,318.5 820.7,322.4 822.7,325.9M817.0,286.7 817.4,286.3 818.4,286.3M818.4,286.3 818.3,286.3 819.5,286.3 819.5,286.3M819.5,286.3 818.4,286.3M818.5,445.9 820.7,447.1 824.4,447.9 827.6,449.3M819.5,286.3 820.6,286.3 822.1,285.7 826.7,285.7 827.4,290.2 830.4,296.0 831.5,297.1 829.4,298.6 828.0,301.5M822.1,517.1 821.3,516.5 821.9,516.2 822.9,516.8 826.4,517.4 827.1,517.5 828.0,516.5M822.7,325.9 823.7,327.5 824.0,327.8M824.3,465.6 824.2,466.1 826.0,466.0 825.9,469.2 823.7,469.5 823.5,467.8M824.5,480.8 825.6,480.1 824.0,474.3 823.6,471.5 823.2,469.8 823.4,469.7 823.3,468.6 823.5,467.8M823.5,467.8 823.2,466.2 823.9,466.1 823.9,465.8 823.9,465.7 823.9,465.7M823.9,465.7 823.6,463.0 824.3,462.8 824.9,462.0 825.0,461.8 825.2,461.5 825.3,461.4M823.9,465.7 824.0,464.8 824.1,465.4 824.4,465.3 824.3,465.6M827.5,462.5 826.9,462.6 826.4,462.8 826.4,465.2 824.3,465.6M833.7,488.3 833.1,487.9 832.9,486.1 830.6,484.3 828.4,484.3 826.6,481.3 825.7,480.7 824.8,481.2 824.5,480.8M828.0,516.5 829.3,515.0 831.4,512.1 831.8,508.6 831.4,503.4 828.4,501.7 825.1,500.9 824.8,499.9M824.8,499.9 825.7,499.7 826.2,498.0 830.3,496.1 832.3,496.1 832.7,495.2M825.3,461.4 825.3,461.3 825.1,458.5 826.9,454.2 827.5,452.1 827.6,449.3M825.3,461.4 825.6,461.3 825.7,462.1 827.3,462.0 827.5,462.5M835.7,461.8 828.6,462.1 827.5,462.5M827.6,449.3 827.6,449.3 831.4,449.7 835.1,447.8 835.5,448.3 835.6,448.2M828.0,301.5 826.3,304.9 826.6,304.7 827.7,302.9 834.5,301.7 834.9,302.8 839.2,307.7 844.9,308.4 846.4,309.3 847.9,310.6 849.0,310.8 849.9,311.3 850.0,312.3 851.1,312.6 850.3,316.0 849.9,319.4 847.4,320.5 846.7,322.6 844.7,323.9M828.0,516.5 828.1,516.6 828.4,517.0 827.9,517.9 829.6,526.4 829.7,526.7M829.7,526.7 830.3,530.7M830.3,530.7 830.3,530.8 831.4,531.2 831.3,531.4 830.3,531.0 827.6,531.4 827.2,528.3 829.4,527.9 829.4,526.6 829.7,526.7M830.3,530.7 831.7,531.3M836.0,488.1 836.6,489.0 837.3,493.1 838.8,496.3 839.9,497.5 838.8,503.3 838.2,503.0 837.9,503.6 836.1,502.1 835.0,499.3 833.6,496.4 833.2,496.4 832.7,495.2M832.7,495.2 832.8,494.8 833.4,493.2 832.9,491.4 833.4,490.8 833.2,489.0 833.7,488.3M833.7,488.3 833.8,488.3 834.8,487.7 835.8,488.0M835.6,448.2 836.8,446.0 836.6,445.7 837.1,445.0 836.8,444.2M835.6,448.2 836.1,447.8 835.7,448.5 837.8,451.7 837.1,455.1 835.3,458.7 835.2,459.4 835.7,461.4 836.2,461.7 836.0,462.0 835.7,461.8M849.4,470.3 849.3,470.4 846.3,468.8 835.7,461.8M836.0,382.1 836.4,380.7 836.7,380.5M836.0,488.1 836.9,488.7 836.8,488.3 845.0,488.3 848.3,487.0 848.4,487.0M837.1,378.5 836.2,375.3M838.1,381.5 837.7,381.5 836.7,380.6 836.7,380.5M836.7,380.5 836.6,380.2 837.1,378.7M836.8,444.2 835.8,441.6 832.8,439.4 833.7,437.7 835.8,434.8 837.6,431.3 839.7,427.7 841.4,424.3 841.3,423.3 841.7,421.9 842.3,421.5M836.8,444.2 837.1,444.0 837.5,445.0 840.0,445.0 843.6,446.4 847.9,448.6 851.4,449.3 853.9,448.1 853.9,448.7 854.3,448.6 855.1,448.4M839.3,380.9 839.3,381.0 838.3,381.5 838.3,381.5M839.4,372.6 839.3,372.7 839.4,375.7 838.6,380.0 839.8,380.3 839.3,380.9M847.3,373.5 846.3,374.1 846.6,374.6 845.7,374.3 845.4,375.2 846.1,376.5 844.4,378.1 844.3,378.6 839.3,380.9M840.6,394.6 840.2,394.0M840.8,358.1 841.3,357.8 850.7,356.4 853.0,356.6 854.0,357.1 854.1,357.3M846.6,370.3 846.4,370.0 842.1,371.5M854.9,427.7 851.9,424.1 849.5,422.3 845.0,421.4 843.9,422.3 842.3,421.5M842.3,421.5 842.1,421.4 841.9,421.2 842.3,420.0 841.6,419.7 842.4,419.7 843.4,416.2 843.2,415.6 846.3,412.5M842.9,328.8 843.1,329.3 842.9,329.6 843.1,329.9M847.3,373.5 846.5,372.3 846.5,372.1 847.5,371.4 847.1,370.9 846.6,370.3M846.6,370.3 847.4,368.7 848.6,367.9 852.2,365.9 853.1,362.5 852.9,358.2 852.6,358.2 852.9,357.9 854.1,357.3M868.1,381.3 867.9,381.5 867.1,381.4 862.9,382.1 850.0,375.7 848.4,375.2 847.3,373.5M853.7,337.8 857.2,336.8 860.8,338.2 864.4,338.6 867.2,340.6 867.1,340.7 868.2,341.1 868.2,341.5 867.8,342.1M854.1,357.3 856.4,356.1 857.0,355.9 860.6,355.7M855.1,448.4 855.2,448.7 855.0,450.0 853.6,452.1 853.6,452.9 854.5,463.8M857.3,431.9 855.7,430.7 854.9,427.7M854.9,427.7 854.9,427.7 855.1,427.5 856.0,428.3 858.2,427.7M855.1,448.4 855.7,448.2 861.4,445.7 864.8,443.3 869.1,439.1 869.2,438.9 868.0,438.3M859.5,343.0 859.5,343.0 859.3,342.1 855.7,341.4 855.3,341.5M868.0,438.3 862.9,435.7 858.6,433.0 857.3,431.9M857.3,431.9 857.4,430.6 858.8,429.9M860.6,346.8 860.5,346.5 860.1,346.1 860.1,344.8 859.5,343.0 859.5,343.0M859.5,343.0 860.2,342.6 863.4,342.3 865.0,343.1 865.0,343.1M869.0,378.4 868.3,376.9 865.4,373.3 863.3,360.4 862.1,357.1 860.9,357.2 860.6,356.5 860.6,355.7M860.6,355.7 860.5,355.0 860.7,355.0 861.4,352.9 860.6,346.8M865.7,346.7 862.1,347.8 861.9,347.7 861.4,347.8 861.7,348.8 861.1,348.7 860.9,348.5 860.6,346.8M879.3,410.5 875.7,411.1 867.2,413.9 865.7,414.0 861.1,415.3M865.7,346.7 864.8,346.9 864.6,346.5 865.0,346.4 864.5,345.4 864.5,344.2 864.8,343.3 865.0,343.1M865.0,343.1 865.6,342.7 867.8,342.1M873.7,351.4 872.2,351.7 872.0,350.6 871.2,348.1 869.3,348.5 867.0,347.7 866.3,346.9 865.7,346.7M867.8,342.1 868.0,342.0 869.1,341.4 871.0,342.0 871.4,341.8 871.7,341.8 872.4,341.3M871.0,381.6 870.0,381.6 868.5,380.6 867.9,379.2M868.1,381.3 867.5,380.0 867.5,379.7 867.9,379.2M867.9,379.2 868.6,378.6 869.0,378.4M869.0,378.4 867.9,379.2M868.0,438.3 868.2,438.0 869.3,438.6 872.6,434.5 873.2,429.9M871.1,382.1 868.3,381.6 868.1,381.3M871.7,380.3 869.8,380.3 869.3,379.2 868.9,379.3 870.0,381.4 871.2,381.0M875.3,324.0 872.7,323.4 872.0,322.5 871.1,322.3 867.4,317.0 867.5,316.8 866.4,315.7 867.8,315.7 869.9,309.7 875.0,305.3 882.0,303.8 889.2,307.8 903.4,306.0 904.1,299.8 906.3,293.9 913.6,292.4 921.9,288.1 928.1,288.1 932.5,291.3 936.4,295.5 945.2,292.4 949.4,297.5 953.6,305.0 959.2,307.4 966.4,308.1 971.0,312.4 970.9,312.5M879.1,393.3 878.9,393.2 878.7,393.3 878.6,392.9 877.2,390.0M879.3,410.5 879.2,410.1 880.0,410.0 883.9,408.7 888.6,406.4 889.8,402.9 889.9,402.5 889.3,400.4 888.8,400.3M883.7,414.2 882.7,414.3 880.3,410.3 880.1,410.4 879.3,410.5M888.8,400.3 885.7,400.0 882.6,398.8 881.2,395.9M884.0,339.7 884.0,339.7 885.0,339.2 887.7,341.3 888.6,341.0 889.8,342.3 892.1,342.4M905.3,361.7 904.1,360.2 904.3,358.9 902.1,356.7 898.5,354.8 894.3,353.5 886.7,354.8 886.1,358.2 885.9,358.2 885.8,357.2M888.8,400.3 888.8,399.9 890.0,400.0 890.7,395.7 892.5,393.3M892.1,341.5 892.1,342.4 892.1,342.4M917.6,355.0 917.8,354.7 911.2,350.5 908.3,347.6 905.5,344.1 902.7,342.0 900.2,340.5 897.8,338.2 895.2,340.2 892.2,343.1 892.2,342.7 891.0,342.7 890.9,342.4 892.1,342.4M892.1,342.4 892.1,341.5M892.1,341.5 891.8,330.1 897.2,328.5 900.9,330.8 904.4,333.6 907.2,335.0 911.4,334.3 915.1,334.3 917.4,336.6 918.1,340.2 919.5,342.9 920.4,343.4 922.9,343.9 924.0,343.3 924.9,343.4 927.9,341.9 928.0,341.9M908.7,379.8 908.3,379.7 907.6,379.4 907.0,378.9 906.6,377.1 905.5,376.2 904.0,371.8 902.9,367.4 904.0,364.8 904.3,362.2 905.3,361.7M905.3,361.7 906.7,360.9 907.5,362.0 909.5,361.3 912.9,358.9 916.4,356.7 917.1,355.7 917.6,355.0M932.3,357.0 932.1,358.8 931.1,358.1 930.4,362.1 928.6,365.6 926.1,369.2 923.8,372.1 922.9,372.9 918.3,377.9 917.9,378.1 917.7,378.4 916.7,378.6 912.9,380.0 911.6,380.3 908.7,379.8M908.7,379.8 908.4,381.0 906.8,381.3 907.2,382.5 909.3,385.7 908.9,389.0M917.6,355.0 918.3,354.6 920.0,355.3 922.1,354.5 922.1,354.5M922.1,354.5 923.1,354.7 923.5,355.9 926.4,355.3 929.3,352.8 932.6,354.3 932.4,356.0M922.1,354.5 920.9,348.6 921.8,348.0 928.7,346.8M945.3,362.5 943.1,365.5 940.3,367.6 939.7,370.9 940.3,374.4 931.6,385.9 927.5,388.7 928.9,394.4 924.0,397.2M928.7,346.8 929.0,346.1 929.4,345.9 931.8,345.7 934.7,343.8 931.8,343.2 927.8,343.5 927.0,342.4 928.0,341.9M928.0,341.9 928.5,341.6 929.1,340.4 932.7,339.6 936.3,337.5 940.0,336.5 943.6,338.0 948.6,338.0 951.5,338.8 952.4,337.9 953.1,338.5M928.7,346.8 929.9,346.5 931.3,346.5 930.0,347.4 935.7,347.4 937.3,346.9 939.1,348.0M933.7,356.5 932.3,357.1 932.3,357.0M932.3,357.0 932.4,356.0M932.4,356.0 933.7,356.5M939.3,356.4 939.2,356.4 937.7,357.2 934.4,356.8 933.7,356.5M939.9,348.9 939.4,348.2 939.1,348.0M939.1,348.0 940.5,347.5M939.3,356.4 940.3,356.6 940.4,356.6 940.3,358.0 943.1,360.1 944.0,361.0 944.2,361.1M939.9,348.9 940.1,349.3 940.6,351.4 940.6,354.1 939.3,356.4M940.5,347.5 939.9,348.9M953.1,338.5 952.0,339.9 951.4,340.2 950.2,342.0 947.3,343.1 944.4,344.8 943.3,345.2 942.5,346.8 940.5,347.5M944.5,361.2 944.9,361.3 944.7,361.5M944.7,361.5 945.1,362.1M945.1,362.1 944.6,361.6 944.7,361.5M945.3,362.5 947.4,365.6 950.3,371.3 954.6,377.1 954.6,377.3M970.9,312.5 970.8,312.6 971.9,313.3 971.8,313.4 970.7,312.8 968.3,316.0 968.3,322.0 961.6,323.4 961.3,323.8 960.1,328.7 955.1,330.1 954.4,337.3 953.9,337.3 953.1,338.5M954.6,377.3 961.4,380.0 968.6,383.6 972.3,385.7M972.3,385.7 972.8,386.0 972.1,386.0 972.2,386.2 973.9,387.0 973.0,389.7 967.0,387.4 959.9,384.3 953.2,381.6 954.3,377.1 954.6,377.3M970.9,312.5 973.7,314.1M972.3,385.7 975.7,385.5M1045.2,313.5 1046.0,314.0 1043.9,318.2 1054.1,321.2 1050.7,323.7 1042.1,327.3 1033.7,330.1 1032.3,335.8 1025.0,338.7 1016.3,341.6 1007.7,338.7 994.7,338.0 991.8,333.0 980.3,328.7 978.9,321.4 973.3,314.3 973.4,314.3 972.5,313.6 973.4,314.2 973.7,314.1M973.7,314.1 985.1,307.4 990.9,309.5 997.8,307.5 1000.7,302.3 1006.4,304.6 1012.1,308.8 1024.9,309.6 1033.4,312.7 1040.6,310.2 1045.2,313.5M984.0,385.0 984.1,385.4 982.8,385.5 983.2,387.4 977.6,388.2 977.0,385.8 975.7,385.8 975.6,385.5 975.7,385.5M975.7,385.5 976.8,385.0 976.8,384.8 977.8,384.6 978.6,384.3 979.3,384.4 982.4,384.0 982.6,384.8 983.3,384.9 984.0,385.0M980.5,403.2 977.7,403.2 975.4,398.7 975.2,396.6 974.3,394.3 974.0,391.7 974.9,394.8 974.7,392.6 980.1,391.8 983.1,394.1 983.3,395.0 984.1,395.0 983.6,397.0 983.9,398.8 983.1,399.1 982.9,400.0 980.7,401.5 981.0,403.0M983.1,402.3 983.7,400.2 984.3,398.6 985.1,398.0 988.6,395.7 988.6,393.2 990.0,390.6 990.9,389.4 992.9,388.9 994.8,386.4 995.4,384.1 996.7,383.6M984.0,385.0 984.3,385.0 987.1,382.1 989.4,381.4 991.4,380.4 996.1,382.7 996.0,383.1 996.7,383.6M996.7,383.6 996.8,383.8 997.0,383.9 997.1,384.0 997.8,384.5 999.5,383.9 1001.0,391.3 1003.4,397.9 1005.5,401.1 1005.7,401.8M1001.6,430.8 1002.5,429.9 1000.4,422.9 999.0,415.7 999.0,414.9 997.7,411.4 997.7,410.0 998.1,409.1 1002.0,405.2 1002.7,404.8 1003.7,405.1 1004.1,405.3M1004.6,405.6 1004.1,405.3M1004.4,405.0 1004.6,405.6M1004.4,405.0 1004.2,404.0 1004.2,402.9 1005.0,402.1 1005.7,401.8M1016.0,420.5 1016.8,418.0 1016.8,417.3 1012.7,412.4 1010.5,412.4 1007.8,412.8 1006.9,411.2 1006.4,408.6 1005.3,407.9 1004.6,405.6M1005.7,401.8 1007.1,401.1 1009.9,400.4M1021.4,420.5 1021.4,419.4 1018.3,411.6 1014.0,407.3 1012.6,403.0 1012.3,402.6 1010.1,401.5 1009.9,400.4M1009.9,400.4 1011.4,400.0 1015.7,397.9 1021.4,398.6 1024.3,401.4M1010.2,426.7 1011.4,422.9 1015.7,421.4 1015.8,421.3 1016.0,420.5M1011.6,455.2 1013.4,456.4M1016.0,420.5 1017.1,420.5 1017.1,420.7 1020.8,421.3 1021.4,421.4 1021.4,420.5M1021.4,420.5 1022.4,421.1 1022.9,422.1 1023.2,424.5 1023.9,425.7 1023.5,426.6 1023.6,427.1 1022.6,428.3 1021.7,430.2 1020.5,430.8 1020.0,431.4 1016.5,433.9M1029.4,456.4 1029.6,456.7 1031.7,457.1 1036.0,455.3 1041.5,454.6 1042.9,449.7 1046.0,448.1 1049.4,448.8M1045.2,313.5 1045.5,312.5 1048.5,311.3 1052.0,308.2 1055.3,301.1 1054.6,299.8 1057.1,297.8 1057.5,297.0 1058.2,296.9 1058.4,296.7 1064.3,295.6 1070.2,298.2 1071.6,301.8 1074.1,310.1 1076.2,312.4 1081.7,314.6 1082.8,317.4 1084.4,318.3 1092.9,321.1 1101.6,318.2 1104.6,324.3 1098.8,331.7 1092.3,334.9M1066.6,347.4 1066.8,347.3 1066.8,347.0 1072.0,343.3 1076.3,341.2 1079.9,338.2 1081.4,338.6 1082.6,338.1M1071.4,354.3 1072.1,354.0 1074.3,352.1 1076.6,351.0M1108.7,482.0 1108.6,466.6M802.2,505.9 803.5,506.0 801.8,506.1 802.2,505.9M816.7,538.5 821.5,534.6 824.3,537.9 820.0,542.6 816.7,538.5" fill="none" stroke="#fffefa" stroke-width="1.15" stroke-linejoin="round" stroke-linecap="round"/><path d="M794.2,281.1 794.4,281.4 795.9,281.7 796.2,281.5 797.5,279.0 797.1,276.3 795.3,276.6 794.9,276.9 794.1,278.9zM751.8,305.0 751.5,304.3 751.8,303.6 753.1,302.2 753.2,300.4 753.1,300.0 751.8,298.4 749.9,296.5 749.6,296.0 749.1,293.3 744.7,287.8 742.1,282.9 742.8,281.4 744.7,279.5 744.9,279.0 744.6,277.7 740.4,276.6 739.7,276.0 739.8,275.1 740.4,274.0 740.7,272.2 740.5,272.0 734.3,272.3 731.3,273.3 729.6,275.0 729.5,275.5 730.3,278.0 731.8,279.6 732.0,280.6 731.5,282.1 731.6,282.6 733.3,284.3 733.6,284.8 734.1,287.1 734.7,288.5 734.8,289.2 734.3,289.8 733.6,289.9 733.0,289.5 732.1,288.4 729.8,289.1 729.1,289.1 727.1,288.4 724.8,291.5 721.6,293.0 721.5,293.4 722.4,294.3 722.6,295.0 722.4,295.6 721.4,296.8 721.3,297.3 721.9,299.5 721.7,300.4 720.4,301.9 720.4,302.4 721.3,304.4 721.7,304.7 724.4,305.0 728.5,302.9 732.3,301.6 732.7,301.2 733.3,297.8 733.1,294.4 733.4,293.4 733.7,290.9 734.2,290.2 735.0,290.1 735.6,290.7 736.1,291.6 737.8,291.7 738.5,291.9 738.8,292.5 739.0,293.4 738.6,294.4 735.4,297.0 736.2,299.1 737.0,300.1 737.3,300.8 736.8,301.6 735.4,302.5 735.1,303.0 735.3,304.0 735.6,304.4 736.8,304.8 737.3,305.3 737.4,306.0 737.1,306.6 733.5,309.7 733.5,310.0 734.2,311.3 734.5,311.4 740.9,308.3 743.6,308.1 747.1,308.3 749.7,307.8 750.4,308.0 750.4,307.8 750.8,307.2 751.9,306.4 752.6,306.2 752.4,305.7zM769.9,343.8 769.4,343.8 769.2,344.1 769.1,347.1 769.9,350.4 770.3,350.8 771.8,351.1 772.3,350.9 773.5,349.1 774.0,345.8 773.0,343.4 772.6,343.0 772.4,342.1 772.9,339.9 772.5,336.8 770.9,337.4 770.6,337.7 770.0,340.1 770.7,342.5 770.6,343.3zM757.3,346.2 757.0,346.1 754.6,346.8 754.6,349.3 756.3,350.0 756.6,349.9 757.8,348.1 757.8,347.6zM813.4,364.0 816.0,362.5 815.9,362.4 812.3,361.4 807.9,362.5 809.4,363.6zM833.4,364.7 836.3,362.7 836.3,362.3 835.2,361.5 834.8,361.5 830.7,362.9 831.1,364.6zM706.4,381.0 704.8,382.6 704.6,383.0 705.0,385.2 706.6,384.7 706.9,384.4 707.8,382.2 707.8,381.9zM704.3,418.4 704.2,419.3 703.5,420.9 704.3,425.1 706.2,427.4 707.2,428.0 708.1,429.5 709.9,430.4 710.3,430.7 711.4,432.2 712.9,433.7 714.2,435.7 714.4,436.4 715.9,439.5 716.2,439.8 718.0,440.4 720.0,442.6 726.3,446.4 728.7,447.1 731.4,447.2 740.0,445.8 742.7,447.1 743.1,447.1 747.2,445.7 751.2,443.1 751.9,443.0 753.1,443.2 755.1,442.9 755.8,443.1 756.6,443.7 759.8,444.4 760.3,444.6 762.1,446.5 762.7,447.7 764.1,448.4 765.8,448.6 769.5,448.1 770.3,448.4 770.7,449.1 770.7,451.2 770.8,451.6 773.0,453.8 773.2,454.3 773.1,456.7 770.9,459.4 770.8,459.9 772.1,462.8 774.3,465.8 777.3,468.5 778.0,468.8 779.3,470.1 780.8,471.0 781.2,471.7 781.0,472.4 780.4,472.9 778.8,473.1 778.6,473.4 779.3,475.1 781.2,482.3 781.4,483.8 781.7,484.6 782.3,487.3 782.1,488.2 780.6,488.7 778.9,495.7 777.8,500.6 778.2,504.9 779.3,508.7 782.1,513.6 784.6,518.5 786.4,524.3 788.5,530.0 790.6,534.2 793.5,547.1 794.2,552.1 795.5,554.4 796.0,554.7 800.1,554.7 804.4,553.6 810.1,553.3 814.2,552.2 817.9,550.0 822.2,546.4 828.6,540.1 831.4,535.8 832.2,531.4 832.8,528.9 833.2,528.4 835.7,526.5 839.4,524.2 840.7,520.6 840.1,516.5 838.2,513.9 838.0,513.1 838.5,511.1 838.9,510.5 842.2,507.9 850.0,502.6 852.8,499.5 852.9,499.1 852.9,494.3 852.2,488.7 852.0,488.5 849.7,488.5 849.1,488.3 848.8,487.7 848.9,487.0 849.4,486.6 851.4,485.7 850.7,483.2 850.0,478.5 849.1,475.6 850.1,469.2 854.4,464.6 857.2,462.1 865.8,452.2 874.3,440.7 877.9,435.1 879.9,430.3 879.9,429.8 878.8,428.4 878.3,428.2 867.2,430.7 862.0,431.3 860.0,430.9 859.4,430.5 859.0,428.0 858.2,426.8 858.6,425.5 859.0,425.0 859.7,424.8 860.4,425.2 861.3,426.3 861.6,426.4 870.0,423.6 878.5,420.1 884.2,415.9 884.2,414.2 884.9,413.7 885.8,413.6 895.5,410.1 895.8,409.8 897.3,407.1 900.1,404.2 901.4,401.0 901.3,400.5 899.3,398.5 893.2,393.8 892.3,390.9 891.8,390.3 891.8,390.6 891.3,391.1 885.6,394.3 882.0,395.5 881.3,395.5 880.8,395.0 879.8,394.0 879.5,393.5 879.7,392.8 880.7,392.0 880.4,388.8 880.1,388.6 878.7,388.8 878.1,389.5 877.3,389.6 876.7,389.1 875.7,387.1 873.6,384.3 871.8,382.4 871.5,381.7 871.8,381.0 872.4,380.3 873.1,380.1 875.3,380.1 876.0,380.3 878.6,382.9 882.1,385.7 885.8,387.9 889.9,389.3 891.3,389.3 891.7,389.7 891.8,389.2 893.0,388.7 893.9,389.0 895.8,390.8 899.9,392.2 905.7,392.8 906.6,389.9 906.8,389.4 907.6,388.9 908.4,389.2 908.7,390.0 908.6,391.2 908.8,391.4 915.2,390.2 916.1,390.4 919.9,394.3 923.4,397.0 925.8,401.5 929.8,404.9 930.2,405.0 932.4,404.6 933.2,404.7 933.6,405.4 934.2,411.5 936.4,420.1 940.0,428.6 944.2,437.1 947.1,439.3 950.4,435.2 951.0,434.9 951.8,435.1 952.1,435.8 952.5,441.9 952.7,442.3 955.7,444.3 958.5,440.3 958.5,439.7 955.7,434.3 952.9,434.8 952.2,434.6 951.7,434.0 952.2,432.7 952.9,425.7 954.3,420.3 954.5,419.8 962.8,411.5 968.7,407.1 972.8,405.1 975.2,403.3 976.3,403.2 978.4,404.2 978.8,404.3 983.6,402.6 984.4,403.1 987.0,408.5 988.6,415.8 991.2,419.1 991.7,419.3 994.9,418.8 995.5,418.9 996.0,419.4 998.5,425.7 1001.1,431.0 1001.1,431.9 1000.8,432.7 1000.6,434.1 999.6,434.6 1001.6,439.5 1003.4,440.9 1004.0,441.6 1005.3,445.4 1009.2,451.7 1011.0,454.3 1011.2,455.0 1010.9,455.6 1010.3,455.9 1009.6,455.7 1001.8,449.6 998.9,446.7 996.1,445.3 993.9,443.9 993.8,449.4 994.0,449.7 997.4,453.2 1000.2,456.7 1001.9,459.2 1002.0,460.2 1001.3,460.8 1000.3,461.0 1000.7,463.8 1002.4,463.5 1002.7,462.3 1003.4,462.0 1004.2,462.3 1006.7,465.3 1016.6,475.2 1017.5,476.0 1017.5,477.1 1017.6,477.2 1024.5,479.6 1029.5,481.0 1034.5,481.8 1038.8,482.8 1043.0,482.5 1043.8,481.7 1044.6,481.8 1045.4,482.8 1048.8,482.8 1051.4,482.6 1052.3,483.0 1052.6,484.0 1054.4,485.2 1057.2,485.3 1057.4,485.3 1057.3,485.1 1056.1,484.1 1055.7,483.4 1056.0,482.7 1056.6,482.3 1063.0,481.4 1063.2,481.2 1063.1,479.6 1058.8,479.2 1054.8,479.8 1054.3,480.5 1053.7,480.8 1048.7,479.6 1044.7,480.6 1043.9,480.4 1043.3,479.8 1036.1,477.4 1032.6,475.7 1027.6,475.9 1023.3,474.6 1020.0,475.0 1019.2,474.7 1018.9,473.8 1019.6,469.6 1020.8,466.1 1018.8,463.0 1016.0,460.9 1013.5,458.4 1013.2,457.6 1013.5,456.9 1014.0,456.5 1014.9,454.8 1014.9,454.4 1012.1,446.7 1010.4,443.3 1010.1,443.1 1007.8,443.7 1007.1,443.6 1005.8,442.9 1005.4,442.4 1005.3,441.8 1005.8,439.9 1005.1,434.3 1003.8,429.1 1004.0,428.2 1005.4,426.8 1006.2,426.6 1009.9,427.1 1010.9,427.5 1012.8,430.1 1016.0,433.3 1016.0,433.9 1015.0,435.0 1015.7,437.8 1025.6,433.0 1028.5,427.3 1028.6,427.0 1027.1,421.3 1018.9,410.4 1018.8,409.5 1020.0,406.0 1020.3,405.6 1024.7,401.8 1025.3,401.7 1030.1,402.6 1030.8,403.2 1030.8,404.0 1030.2,404.6 1026.7,405.6 1026.3,406.0 1025.7,409.8 1025.8,410.1 1028.3,411.4 1028.8,411.3 1032.9,408.6 1031.3,403.8 1031.5,403.1 1032.1,402.8 1038.7,401.4 1044.3,398.6 1049.9,396.5 1054.4,392.7 1055.9,388.5 1059.9,383.1 1059.9,382.6 1058.8,379.7 1058.8,378.9 1060.7,374.5 1060.7,374.1 1058.7,368.7 1056.1,366.0 1054.9,364.0 1054.9,363.1 1055.6,361.1 1056.1,360.6 1061.5,357.8 1062.5,356.1 1062.0,355.5 1062.1,354.7 1064.2,350.7 1060.2,350.0 1059.3,350.7 1058.4,350.7 1055.1,352.0 1054.4,352.1 1053.9,351.6 1053.8,350.9 1054.1,350.3 1059.5,345.9 1060.2,345.6 1060.8,345.9 1063.3,348.4 1063.9,348.5 1065.7,347.8 1066.7,347.9 1067.1,348.7 1067.2,349.5 1068.1,350.3 1068.4,351.3 1067.9,353.6 1069.7,354.9 1071.2,354.8 1071.7,355.2 1071.9,355.8 1071.7,357.1 1071.0,360.1 1071.4,363.5 1072.7,365.6 1073.0,365.7 1075.8,364.3 1078.5,362.3 1080.0,359.4 1079.3,354.9 1077.6,351.6 1076.1,349.3 1076.2,348.6 1077.1,347.3 1079.3,345.0 1081.4,342.2 1082.8,339.5 1083.0,338.2 1083.6,337.9 1087.2,337.2 1090.4,335.6 1101.5,334.2 1108.6,331.3 1114.6,327.8 1115.9,326.5 1116.1,326.0 1115.1,321.5 1115.6,317.7 1115.9,317.2 1116.4,316.9 1119.1,316.4 1119.2,316.1 1115.0,306.8 1114.3,295.4 1110.0,288.2 1109.4,275.9 1109.5,275.3 1112.6,270.3 1113.4,269.9 1122.1,269.1 1122.2,265.8 1121.9,265.5 1078.9,265.5 1077.8,264.9 815.1,264.9 814.8,265.2 814.8,267.2 814.5,267.9 813.8,268.2 803.6,268.3 804.2,271.0 803.6,274.3 805.5,277.5 805.0,278.3 803.4,279.3 803.2,279.8 803.2,284.8 802.8,285.7 802.8,288.3 802.6,288.9 802.0,289.2 798.8,289.8 798.4,290.9 797.6,291.2 792.0,291.3 785.1,294.1 784.3,294.0 783.7,293.4 782.9,290.9 780.4,291.1 779.8,290.9 779.4,290.4 779.4,289.7 779.9,288.8 780.4,288.3 784.0,288.5 784.5,288.2 785.9,286.2 789.1,284.3 789.4,284.0 790.8,279.1 792.8,274.3 795.7,271.4 796.4,268.3 760.7,268.3 763.5,274.1 765.9,276.0 769.4,276.0 769.8,275.8 771.5,273.8 774.4,271.3 774.9,271.0 775.7,270.9 776.3,271.3 776.8,275.6 777.8,279.0 779.7,281.0 780.0,281.7 780.0,283.9 779.7,284.5 779.1,284.9 777.1,285.1 776.4,285.7 775.5,285.9 774.9,285.3 774.8,284.6 775.7,280.3 775.0,277.8 769.8,280.8 769.5,281.1 768.9,284.1 768.6,287.1 768.8,287.6 770.8,288.6 771.4,289.2 771.4,290.0 770.3,290.8 770.3,292.8 769.8,293.7 767.7,294.7 766.7,296.5 760.8,297.6 758.7,299.0 758.5,299.3 758.2,301.3 757.9,304.3 757.7,305.2 756.4,305.6 755.9,306.1 754.8,306.1 754.3,306.7 753.7,307.0 753.4,307.0 753.5,307.2 753.3,307.8 752.7,308.5 751.8,308.9 751.1,309.0 750.8,308.7 750.8,309.2 749.9,310.1 749.5,311.2 749.1,311.7 748.5,311.8 745.6,311.6 743.7,312.6 743.5,312.9 742.9,315.0 742.3,315.7 736.1,317.9 736.3,319.7 736.7,320.1 738.7,320.9 741.2,322.7 741.5,323.1 742.8,326.5 743.9,330.6 744.1,333.4 743.8,334.2 743.0,334.5 735.7,334.2 728.7,333.5 725.2,334.8 724.9,335.2 724.3,337.9 724.3,338.3 725.5,340.4 725.7,341.0 725.3,344.5 724.3,348.1 723.9,351.6 725.1,352.6 725.2,353.2 725.0,355.6 726.5,356.0 729.8,355.6 730.4,356.0 733.3,359.6 733.6,360.3 733.3,360.9 732.0,361.5 729.3,365.8 726.4,368.1 724.0,370.8 723.5,374.7 722.2,377.9 719.3,380.9 715.6,383.2 712.1,387.4 709.3,391.6 707.7,395.6 705.0,399.9 704.6,402.3 704.3,403.1 704.3,404.8 704.8,405.6 705.3,408.5 705.7,413.4zM877.8,329.3 877.2,331.8 878.6,334.6 880.5,337.7 882.7,340.2 883.9,340.1 884.5,340.7 884.4,341.6 886.4,341.0 887.1,343.5 885.0,344.2 884.0,341.9 883.5,342.6 882.8,345.8 882.9,346.2 884.5,348.8 885.6,351.6 885.9,355.7 885.7,356.3 885.7,356.7 882.9,357.4 878.8,357.1 875.0,354.9 874.7,351.5 874.0,350.9 873.8,350.2 875.7,347.5 876.8,346.4 877.0,345.9 875.2,345.0 873.7,342.6 873.3,342.3 872.8,341.5 873.6,340.3 869.3,331.7 870.0,328.9 873.6,326.7 876.1,323.9 880.0,322.8 883.6,323.9 882.9,326.7 880.0,327.8zM845.7,400.0 845.8,400.8 846.3,401.3 849.2,406.4 851.3,409.2 852.8,412.1 854.1,413.8 854.5,414.1 859.7,414.1 860.4,414.3 860.7,415.0 860.5,415.6 857.9,419.1 857.8,419.5 858.6,423.6 858.2,424.1 857.6,424.3 857.0,424.0 851.5,418.6 847.2,413.7 845.6,408.0 844.4,401.9 844.5,401.5 843.3,401.3 842.9,400.7 842.2,398.5 840.8,395.9 840.8,395.1 841.3,394.5 842.0,394.4 842.6,394.9zM820.8,332.5 822.6,331.6 824.0,328.5 826.3,326.2 828.0,325.2 829.1,325.3 832.6,328.0 833.7,330.4 835.5,331.7 839.9,331.4 842.8,330.3 843.8,330.5 848.1,333.8 848.4,334.3 849.2,336.5 849.5,336.8 853.2,338.1 853.7,338.4 854.9,340.1 855.1,340.7 854.9,341.3 854.3,341.7 850.6,342.4 845.2,342.1 840.1,340.0 835.1,339.2 829.9,340.3 824.3,340.7 821.6,341.0 821.0,340.9 820.2,340.0 820.1,339.1 821.1,336.2 820.3,333.8 820.3,333.0zM787.6,330.6 792.1,335.0 796.8,337.7 797.4,339.3 797.4,340.2 797.1,340.6 797.1,342.8 797.8,345.2 799.2,346.5 800.8,349.6 800.9,350.4 800.1,352.6 800.2,353.1 805.6,358.5 807.0,359.3 807.3,359.2 810.0,355.8 811.4,353.0 811.4,352.7 809.3,350.5 808.4,348.8 808.3,348.0 808.8,347.4 813.4,345.1 814.3,343.4 814.5,342.4 815.5,342.0 816.2,342.1 816.7,342.7 816.4,343.8 815.7,348.5 815.7,351.4 816.4,354.4 817.9,357.3 820.8,359.4 824.1,360.0 826.8,358.8 827.5,358.7 830.8,359.3 835.2,358.7 837.7,359.3 839.6,358.5 840.3,358.4 840.9,358.8 841.0,359.5 840.0,361.0 840.7,368.5 841.7,370.4 841.8,371.2 841.2,371.8 840.3,372.2 839.6,372.2 838.9,371.5 838.8,371.6 837.2,373.4 836.7,374.7 835.8,374.9 829.9,373.2 825.8,373.5 822.5,375.1 821.7,375.2 818.0,373.9 813.9,374.1 813.2,373.8 812.8,373.0 809.9,370.9 804.4,369.8 802.7,369.3 798.6,370.4 798.5,374.5 798.3,375.1 797.5,376.1 797.1,376.4 796.5,376.5 793.5,375.6 790.2,373.9 787.0,370.9 782.9,369.9 779.2,369.5 778.3,369.7 777.8,369.3 776.8,368.0 775.7,365.8 775.7,364.8 777.0,362.7 777.1,362.2 776.0,360.0 775.9,359.2 776.8,356.9 776.6,356.6 773.0,356.0 770.2,357.7 769.5,357.6 768.4,357.0 763.6,357.0 757.8,357.4 752.1,358.5 747.1,360.2 742.5,362.4 741.7,362.4 739.9,361.7 736.9,361.1 736.2,360.7 736.1,359.8 736.7,359.2 739.4,358.2 743.5,357.5 746.4,355.4 748.6,351.8 749.5,348.0 751.6,345.2 754.3,343.2 757.0,340.5 757.1,340.0 756.8,339.2 756.8,338.4 757.3,337.9 760.5,336.6 761.0,336.5 764.8,337.2 765.2,337.0 767.1,335.4 766.3,333.1 766.3,332.3 767.0,331.8 767.8,331.9 769.4,332.9 771.8,332.9 772.4,333.1 774.8,334.9 776.5,337.9 778.5,340.0 783.5,343.6 785.7,345.7 788.6,348.0 789.7,349.6 789.8,350.5 789.5,351.7 789.1,352.2 788.6,352.5 783.5,352.8 780.1,354.0 781.5,355.8 784.2,357.5 787.1,357.8 788.2,355.1 788.5,353.5 788.9,352.8 789.6,352.6 791.1,352.9 791.6,352.6 792.8,350.9 792.8,350.5 792.4,349.2 792.6,348.1 793.1,347.6 794.2,347.4 795.7,347.8 796.1,346.6 796.0,346.2 794.3,343.5 790.8,340.0 787.9,337.9 785.1,335.0 782.3,332.9 781.0,331.1 780.9,330.2 781.3,329.0 781.8,328.4 784.3,327.2 785.2,327.6 786.8,327.6 787.6,327.9 787.8,328.7 787.5,330.1zM834.8,383.5 836.5,382.3 837.2,382.5 837.6,383.2 837.8,385.1 839.3,388.6 841.0,392.1 841.0,392.8 840.6,393.4 839.9,393.5 839.3,393.1 833.7,385.1 833.6,384.5 833.8,383.9zM840.0,328.3 839.3,325.4 842.9,324.0 845.1,324.6 845.1,326.7 843.2,328.3zM888.3,427.4 888.5,425.5 884.3,425.7 884.6,427.7zM1041.6,446.7 1033.2,452.3 1028.5,453.9 1029.0,455.4 1029.0,456.1 1028.6,456.6 1027.5,456.8 1027.4,459.4 1028.8,461.9 1029.5,465.7 1029.8,466.1 1031.8,466.8 1034.4,468.1 1037.1,467.6 1037.8,467.6 1040.2,468.9 1042.9,469.6 1043.4,469.5 1046.1,467.3 1050.3,459.7 1052.4,457.4 1051.0,455.2 1049.7,452.6 1049.6,449.7 1049.8,449.1 1050.4,448.7 1052.2,448.3 1052.5,447.9 1053.1,445.6 1052.9,445.1 1050.4,443.1 1047.7,441.8 1047.2,441.8 1044.5,443.8zM1025.3,466.7 1024.6,465.0 1022.4,466.1 1023.5,467.8zM613.7,549.0 623.7,536.1 624.4,529.3 624.8,528.6 631.1,523.1 636.6,521.0 643.5,519.0 643.8,518.7 649.4,504.7 649.5,493.5 649.7,492.9 656.6,484.7 659.5,478.7 658.6,474.4 653.8,470.3 645.1,465.9 635.0,464.4 626.6,459.5 621.2,456.8 620.7,456.4 618.1,451.7 615.3,447.6 612.4,446.0 610.2,445.9 610.0,446.2 610.0,550.1 610.2,550.3 612.7,550.3 613.2,550.1zM863.8,527.5 867.3,527.1 870.1,524.2 877.9,498.7 876.5,492.9 874.3,490.1 871.4,493.5 868.7,497.6 868.3,497.9 863.0,500.6 860.7,504.1 860.7,510.6 859.3,515.6 859.2,520.6 860.6,524.9 863.4,527.4zM891.8,515.4 891.5,513.5 889.5,513.5 889.6,515.8 891.6,515.7zM929.0,605.3 927.5,602.0 923.1,602.5 925.0,607.0 928.8,605.6zM1118.3,336.4 1122.1,335.7 1122.1,332.2 1119.0,332.7 1114.6,331.5 1114.1,331.6 1112.1,333.7 1111.4,336.6 1112.0,339.1 1113.5,340.3 1114.0,341.0 1113.9,341.2 1114.3,340.7 1115.8,339.9 1117.7,336.9zM1108.7,362.0 1109.8,358.1 1112.2,352.2 1113.6,347.2 1114.0,342.4 1113.8,341.3 1113.7,341.8 1113.0,342.1 1112.3,342.1 1112.1,342.3 1111.7,346.5 1110.7,350.6 1109.5,354.0 1108.6,354.6 1101.5,354.9 1098.1,355.6 1097.7,356.0 1097.1,357.8 1097.1,360.5 1096.9,361.2 1096.3,361.5 1092.9,362.1 1088.4,362.6 1085.7,365.0 1083.0,367.6 1080.2,368.5 1079.9,368.8 1079.3,370.7 1081.1,372.0 1081.5,372.5 1082.7,375.5 1083.1,375.6 1085.1,374.2 1086.4,371.5 1088.0,369.4 1090.9,366.4 1094.4,365.0 1098.7,364.3 1101.2,363.2 1101.7,363.1 1105.9,363.5 1108.4,362.3zM1059.8,391.5 1057.3,392.7 1057.0,393.1 1055.7,398.4 1055.8,398.8 1057.9,402.1 1060.7,397.0 1060.1,391.7zM1062.2,442.3 1062.7,442.4 1064.1,441.9 1064.8,441.9 1065.9,443.0 1067.0,443.3 1067.5,443.7 1068.3,444.7 1070.3,445.3 1071.8,443.1 1072.9,439.8 1071.7,434.5 1071.2,434.2 1068.8,433.3 1068.2,432.9 1068.1,432.3 1068.4,431.7 1069.9,430.2 1069.9,429.8 1067.3,425.8 1067.0,425.6 1063.5,424.8 1063.0,424.4 1060.4,420.5 1060.3,419.5 1062.2,415.6 1061.5,410.9 1061.2,410.7 1055.7,411.4 1055.0,415.8 1055.7,420.1 1058.4,425.6 1058.8,425.7 1060.1,425.3 1061.0,425.4 1061.4,426.2 1061.4,427.2 1062.6,430.8 1062.4,431.9 1060.0,434.3 1062.0,437.4 1062.2,438.0 1061.9,438.6 1060.3,440.3zM1047.9,435.7 1049.1,437.7 1049.5,437.7 1055.6,430.9 1055.6,430.5 1054.5,429.4 1054.1,429.4zM1076.2,460.9 1077.3,459.8 1077.4,459.3 1076.9,457.1 1076.9,456.4 1077.7,454.9 1077.6,454.3 1076.0,452.5 1074.3,453.7 1074.1,454.1 1073.8,457.2 1074.0,457.6 1075.1,458.7 1075.9,460.9zM1068.9,464.4 1068.8,462.8 1066.7,462.8 1066.7,464.5 1068.7,464.6zM1063.7,471.5 1060.0,466.4 1059.8,465.5 1060.0,465.0 1060.5,464.5 1061.1,464.4 1062.9,464.6 1063.3,464.4 1064.5,462.4 1061.9,461.0 1061.7,460.4 1061.9,459.7 1062.5,459.4 1066.8,458.1 1068.5,456.1 1068.8,453.9 1064.1,456.2 1063.5,456.3 1058.7,455.6 1055.5,456.6 1055.2,457.0 1054.9,458.8 1055.2,460.6 1055.0,461.3 1053.2,463.7 1052.4,466.5 1053.8,470.4 1054.6,474.2 1057.0,473.8 1056.9,471.2 1057.2,470.4 1058.0,470.1 1058.7,470.6 1060.1,473.0 1060.5,473.2 1063.1,473.8 1063.8,472.0zM1082.8,469.2 1083.2,467.2 1083.0,467.0 1080.1,465.6 1076.7,466.0 1076.7,466.8 1076.4,467.4 1076.2,467.6 1076.9,467.9 1079.7,468.2zM1070.3,467.6 1070.6,469.1 1070.8,469.3 1073.7,469.3 1074.0,469.1 1075.5,467.7 1073.0,466.7 1070.5,467.3zM1107.3,483.1 1107.6,483.1 1108.7,482.5 1109.5,482.4 1110.3,483.2 1114.0,483.1 1116.7,481.8 1119.2,479.5 1121.5,479.0 1121.8,478.6 1122.8,474.7 1121.8,470.5 1121.5,470.1 1117.5,468.1 1113.2,466.7 1110.4,466.0 1109.8,466.3 1109.1,466.3 1108.3,465.5 1101.9,462.8 1101.5,462.8 1098.9,463.8 1096.9,465.8 1094.6,466.5 1094.0,466.4 1093.5,466.1 1092.6,464.7 1091.8,461.3 1091.4,460.9 1088.8,460.2 1086.1,460.6 1083.7,462.3 1083.6,462.6 1086.0,464.7 1087.4,466.8 1088.7,469.3 1089.1,469.6 1091.8,469.7 1094.7,470.4 1100.1,473.1 1102.0,474.9 1102.2,475.9 1101.6,478.2 1100.3,481.7 1101.8,481.0 1104.0,480.5 1105.0,480.7zM1092.5,472.5 1091.0,473.1 1090.1,473.0 1089.5,472.1 1089.4,472.1 1088.3,472.3 1088.1,472.6 1088.5,475.2 1090.4,474.8 1091.0,475.1 1091.3,475.7 1091.7,477.7 1093.1,476.2 1093.2,475.8 1092.9,472.7zM1067.3,483.1 1066.2,483.2 1063.9,485.3 1064.6,486.7 1066.5,486.1 1066.8,485.8 1068.0,483.5 1068.5,483.0 1069.9,483.1 1073.1,481.8 1074.5,480.3 1071.6,480.0 1068.3,481.6 1068.1,482.7zM1045.8,555.9 1050.1,556.0 1050.5,555.9 1053.0,553.4 1053.5,553.1 1058.0,552.1 1063.7,552.1 1064.0,552.0 1067.6,548.8 1071.8,547.1 1081.6,545.4 1087.2,546.0 1091.1,548.4 1093.1,551.8 1095.9,555.2 1097.4,558.1 1098.9,555.8 1099.7,555.3 1100.5,555.6 1103.2,558.3 1105.3,562.5 1108.9,565.4 1113.3,567.5 1117.6,566.8 1122.4,567.5 1123.8,567.4 1123.9,507.4 1122.5,501.7 1120.4,496.9 1120.1,496.6 1117.2,495.4 1116.6,494.8 1113.5,486.0 1112.0,488.2 1110.9,493.2 1110.2,498.9 1109.0,503.3 1108.3,504.0 1106.4,504.4 1105.7,504.4 1103.3,503.1 1097.0,498.3 1096.7,497.8 1096.2,495.9 1096.5,494.9 1098.2,493.0 1098.9,490.5 1098.7,490.2 1096.2,488.9 1095.8,488.9 1093.4,490.1 1092.8,490.2 1089.0,489.5 1084.1,487.5 1083.7,487.5 1080.3,488.9 1080.9,492.8 1080.8,493.4 1079.3,496.5 1078.7,497.0 1078.0,497.0 1074.5,495.6 1070.5,495.3 1070.1,495.4 1063.9,501.6 1060.4,503.7 1060.2,504.0 1059.0,508.3 1058.3,509.0 1053.1,511.0 1047.4,512.4 1039.1,515.9 1038.8,516.3 1037.4,528.2 1038.1,531.8 1043.0,544.4 1043.0,546.1 1041.7,550.1 1042.3,553.0zM1120.2,579.5 1123.8,583.1 1123.9,573.9 1120.1,572.4 1117.6,573.0 1117.5,573.4 1118.5,576.0z" fill="none" stroke="#3f82bd" stroke-width="0.9" stroke-linejoin="round" opacity="0.72"/><path d="M613 397.5H1122" stroke="#6a99ba" stroke-width="1.4" stroke-dasharray="4.0,1.71" stroke-dashoffset="2.44" opacity="0.8" fill="none"/><path d="M613 459.2H1122" stroke="#6a99ba" stroke-width="1.4" stroke-dasharray="4.0,1.71" stroke-dashoffset="2.44" opacity="0.8" fill="none"/><path d="M613 521.4H1122" stroke="#6a99ba" stroke-width="1.4" stroke-dasharray="4.0,1.71" stroke-dashoffset="2.44" opacity="0.8" fill="none"/></svg><div class="mctl" style="left:474.8px;top:7.8px;width:26.4px;height:79.2px"></div><div class="mctl" style="left:474.4px;top:96px;width:26.8px;height:81.3px"></div><svg class="ic" style="left:-613px;top:-268px" width="1838" height="896" viewBox="0 0 1838 896"><path d="M1088.5 302.4H1113.5M1088.5 328.1H1113.5" stroke="#ddd" stroke-width="1"/><path d="M1088 391H1113.5M1088 418.1H1113.5" stroke="#e6e6e6" stroke-width="1.3"/><path d="M1096 288.9H1105.8M1100.9 284V293.8M1095.6 315.6H1106.2" stroke="#2b2b2b" stroke-width="2.7" stroke-linecap="round"/><path d="M1100.9 334.7L1097 341.7H1104.8z" fill="#222"/><path d="M1100.9 350.6L1097 343.7H1104.8z" fill="#c8c8c8"/><g stroke="#6e6e6e" fill="#6e6e6e"><path d="M1097.8 379.8L1104.1 373.3" stroke-width="1.9"/><circle cx="1097.8" cy="379.8" r="2.2" stroke="none"/><circle cx="1104.1" cy="373.3" r="2.2" stroke="none"/><path d="M1097.1 400.7Q1100.85 401.5 1104.6 400.7Q1103.9 404.25 1104.6 407.8Q1100.85 407 1097.1 407.8Q1097.8 404.25 1097.1 400.7z" fill="none" stroke-width="1.7"/><circle cx="1097.1" cy="400.7" r="1.9" stroke="none"/><circle cx="1104.6" cy="400.7" r="1.9" stroke="none"/><circle cx="1097.1" cy="407.8" r="1.9" stroke="none"/><circle cx="1104.6" cy="407.8" r="1.9" stroke="none"/><path d="M1095.6 428.4H1106.3" stroke-width="1.5" fill="none"/><path d="M1099.4 427.8Q1099.4 426.3 1100.95 426.3Q1102.5 426.3 1102.5 427.8" stroke-width="1.2" fill="none"/><path d="M1096.3 429.9H1105.6V436.3Q1105.6 438.4 1103.5 438.4H1098.4Q1096.3 438.4 1096.3 436.3z" stroke="none"/></g><path d="M1099.4 429.9V435M1102.5 429.9V435" stroke="#fff" stroke-width="1.5"/></svg><div style="position:absolute;left:428px;top:311px;width:73px;height:21px;border-radius:10.5px;background:#fff"></div><div style="position:absolute;left:480px;top:311px;width:21px;height:21px;border-radius:10.5px;background:#f0f0f0"></div><svg class="ic" style="left:484.3px;top:315px" width="13" height="13" viewBox="0 0 13 13"><circle cx="6.5" cy="6.5" r="6.4" fill="#000"/><rect x="5.6" y="5.4" width="1.9" height="4.9" fill="#fff"/><circle cx="6.5" cy="3.4" r="1.15" fill="#fff"/></svg><div class="t" style="left:435.5px;top:315px;font-size:9.3px;line-height:12px;color:#444;letter-spacing:0.15px">MapLibre</div></div>
</div></body></html>
